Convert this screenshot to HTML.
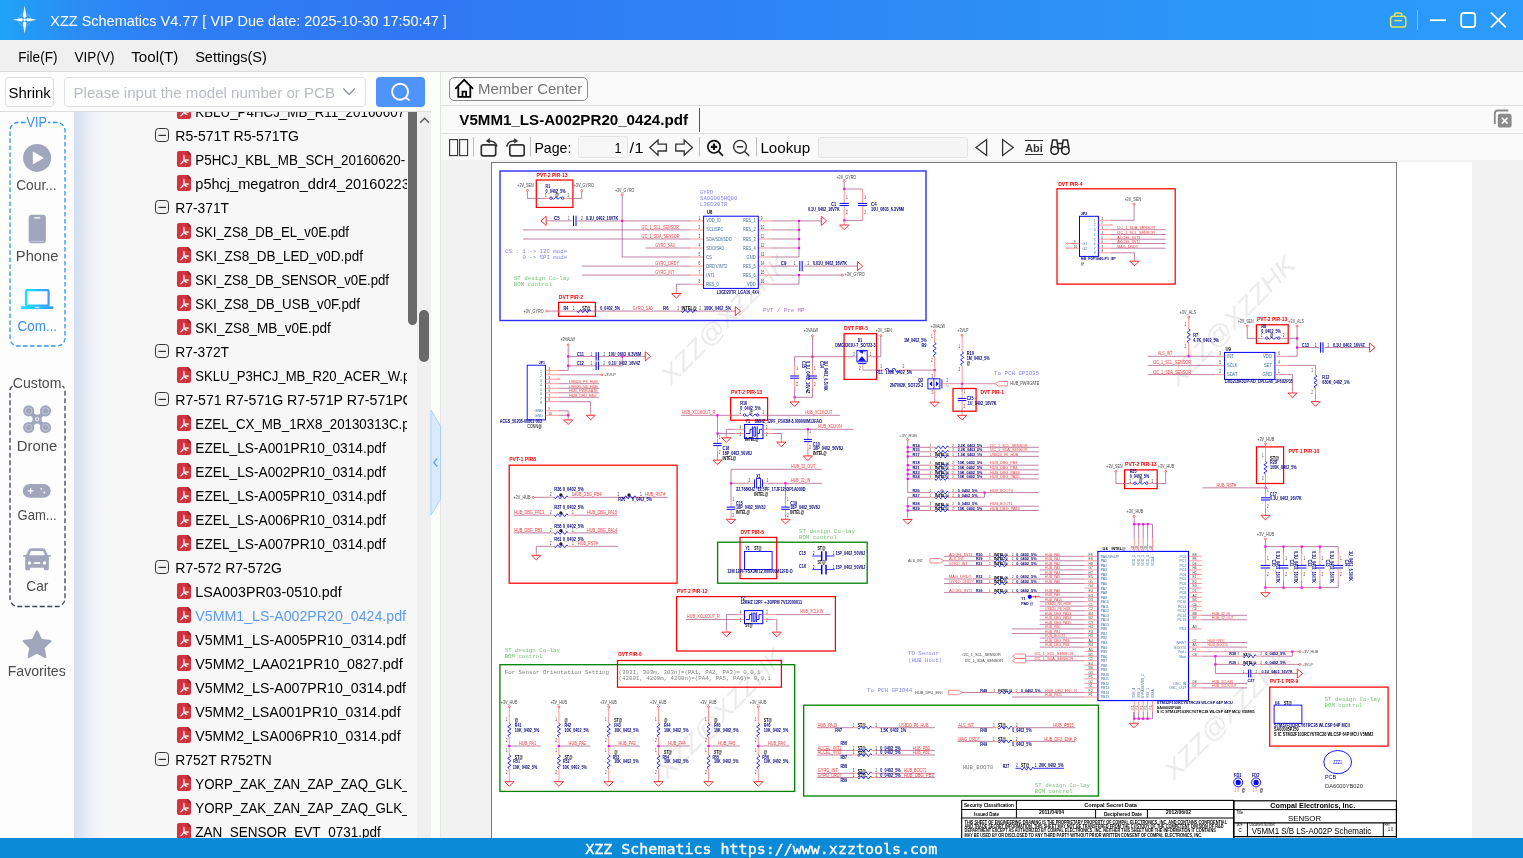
<!DOCTYPE html>
<html lang="en">
<head>
<meta charset="utf-8">
<title>XZZ Schematics V4.77</title>
<style>
html,body{margin:0;padding:0}
body{width:1523px;height:858px;overflow:hidden;position:relative;background:#fafafa;font-family:"Liberation Sans",sans-serif;font-size:14.5px;color:#000}
svg text{font-family:"Liberation Sans",sans-serif;white-space:pre}
svg text.m{font-family:"Liberation Mono",monospace}
.abs{position:absolute}
#titlebar{left:0;top:0;width:1523px;height:40px;background:linear-gradient(to right,#1ea3f6 0,#2b8cf5 5%,#2f7df4 12%,#3078f3 28%,#2e84f5 50%,#2c94f8 75%,#2b9bf9 100%)}
#menubar{left:0;top:40px;width:1523px;height:31px;background:#f0f0f0;border-bottom:1px solid #dadada}
#leftpane{left:0;top:72px;width:431px;height:766px;background:#fdfdfd}
#searchrow{left:0;top:72px;width:431px;height:39px;background:#fdfdfd;border-bottom:1px solid #dcdcdc}
#shrink{left:5px;top:77px;width:47px;height:28px;border:1px solid #dcdcdc;border-radius:4px;background:#fdfdfd}
#search{left:64px;top:77px;width:300px;height:28px;border:1px solid #dcdfe6;border-radius:4px;background:#fff}
#searchbtn{left:376px;top:77px;width:49px;height:30px;border-radius:4px;background:#4d94ff}
#sidebar{left:0;top:112px;width:74px;height:726px;background:#fdfdfd}
#tree{left:74px;top:112px;width:357px;height:726px;background:linear-gradient(to right,#d2ddf0 0,#e6ebf4 12px,#f4f5f7 24px,#f7f7f7 32px)}
#treeclip{left:74px;top:112px;width:333px;height:726px;overflow:hidden}
#sb1{left:408px;top:112px;width:9px;height:213px;background:#6a6a6a;border-radius:0 0 5px 5px}
#sbtrack{left:417px;top:112px;width:14px;height:726px;background:#f0f0f0}
#sb2{left:419px;top:310px;width:10px;height:52px;background:#686868;border-radius:5px}
#splitter{left:431px;top:72px;width:9px;height:766px;background:#fafdfa}
#rightpane{left:440px;top:72px;width:1083px;height:766px;background:#fafafa;border-left:1px solid #e4e4e4;box-sizing:border-box}
#member{left:449px;top:77px;width:137px;height:22px;border:1px solid #8c8c8c;border-radius:5px;background:#fcfcfc;box-sizing:content-box}
.hline{left:441px;width:1082px;height:1px;background:#dedede}
#viewer{left:441px;top:160px;width:1082px;height:678px;background:#f2f2f2;overflow:hidden}
#white{left:491px;top:162px;width:981px;height:676px;background:#fff}
#pageinput{left:578px;top:136px;width:48px;height:20px;border:1px solid #e3e3e3;border-radius:3px;background:#f7f7f7}
#lookup{left:818px;top:137px;width:148px;height:19px;border:1px solid #e3e3e3;border-radius:3px;background:#f5f5f5}
#statusbar{left:0;top:838px;width:1523px;height:20px;background:#0b8ad8;color:#fff}
#overlay{left:0;top:0;width:1523px;height:858px;pointer-events:none}
</style>
</head>
<body>
<div id="titlebar" class="abs"></div>
<div id="menubar" class="abs"></div>
<div id="leftpane" class="abs"></div>
<div id="searchrow" class="abs"></div>
<div id="shrink" class="abs"></div>
<div id="search" class="abs"></div>
<div id="searchbtn" class="abs"></div>
<div id="sidebar" class="abs"></div>
<div id="tree" class="abs"></div>
<div id="sbtrack" class="abs"></div>
<div id="sb1" class="abs"></div>
<div id="sb2" class="abs"></div>
<div id="splitter" class="abs"></div>
<div id="rightpane" class="abs"></div>
<div id="member" class="abs"></div>
<div class="abs hline" style="top:105px"></div>
<div class="abs hline" style="top:133px"></div>
<div id="pageinput" class="abs"></div>
<div id="lookup" class="abs"></div>
<div id="viewer" class="abs"></div>
<div id="white" class="abs"></div>
<!-- schematic page -->
<svg id="schem" class="abs" style="left:0;top:0;will-change:transform" width="1523" height="838" viewBox="0 0 1523 838">
<rect x="491.500" y="162.500" width="905" height="690" fill="#fff" stroke="#7a7a7a" stroke-width="1"/>
<g class="s">
<text transform="translate(671 386) rotate(-45.500)" font-size="25" font-style="italic" fill="#ebebeb" textLength="170" lengthAdjust="spacingAndGlyphs">XZZ@XZZHK</text>
<text transform="translate(1178 387.5) rotate(-45.500)" font-size="25" font-style="italic" fill="#ebebeb" textLength="170" lengthAdjust="spacingAndGlyphs">XZZ@XZZHK</text>
<text transform="translate(667 780) rotate(-45.500)" font-size="25" font-style="italic" fill="#ebebeb" textLength="170" lengthAdjust="spacingAndGlyphs">XZZ@XZZHK</text>
<text transform="translate(1174 781) rotate(-45.500)" font-size="25" font-style="italic" fill="#ebebeb" textLength="170" lengthAdjust="spacingAndGlyphs">XZZ@XZZHK</text>
<rect x="500" y="171" width="426" height="149.5" fill="none" stroke="#2e2eff" stroke-width="1.4"/>
<text x="536.6" y="176.9" font-size="4.8" fill="#ff0000" font-weight="700" textLength="31" lengthAdjust="spacingAndGlyphs">PVT-2 PIR-13</text>
<rect x="536.3" y="180" width="36.6" height="27.4" fill="none" stroke="#ff0000" stroke-width="1.25"/>
<circle cx="527.4" cy="190.4" r=".95" fill="#fff" stroke="#ff0000" stroke-width=".55"/>
<text x="517.3" y="187.3" font-size="4.56" fill="#444" textLength="16.5" lengthAdjust="spacingAndGlyphs">+3V_SEN</text>
<path d="M527.4 191.5 L527.4 198.4 L546 198.4" fill="none" stroke="#a34d7d" stroke-width="0.7"/>
<path d="M546 198.4 L550 198.4" fill="none" stroke="#ff6a6a" stroke-width="0.7"/>
<circle cx="551" cy="198.1" r="1.25" fill="none" stroke="#0000ff" stroke-width=".75"/>
<circle cx="562.6" cy="198.1" r="1.25" fill="none" stroke="#0000ff" stroke-width=".75"/>
<path d="M552.3 198.4 Q553.4 200 554.6 198.4 Q555.7 196.2 556.8 198.4 Q558 200 559.1 198.4 Q560.3 196.2 561.4 198.4" fill="none" stroke="#0000ff" stroke-width=".8"/>
<path d="M564 198.4 L568 198.4" fill="none" stroke="#ff6a6a" stroke-width="0.7"/>
<path d="M568 198.4 L581.7 198.4 L581.7 191.5" fill="none" stroke="#a34d7d" stroke-width="0.7"/>
<circle cx="581.7" cy="190.4" r=".95" fill="#fff" stroke="#ff0000" stroke-width=".55"/>
<text x="573.5" y="187.3" font-size="4.56" fill="#444" textLength="20.4" lengthAdjust="spacingAndGlyphs">+3V_GYRO</text>
<text x="545.6" y="187.9" font-size="4.5" fill="#000080" font-weight="700" textLength="4.5" lengthAdjust="spacingAndGlyphs">R1</text>
<text x="545.6" y="192.6" font-size="4.5" fill="#000080" font-weight="700" textLength="20" lengthAdjust="spacingAndGlyphs">0_0402_5%</text>
<text x="544.8" y="197.4" font-size="4.5" fill="#444" textLength="1.8" lengthAdjust="spacingAndGlyphs">1</text>
<text x="567.4" y="197.4" font-size="4.5" fill="#444" textLength="1.8" lengthAdjust="spacingAndGlyphs">2</text>
<text x="555.2" y="196.8" font-size="4.5" fill="#000" font-weight="700" textLength="3.4" lengthAdjust="spacingAndGlyphs">@</text>
<circle cx="622.2" cy="194.6" r=".95" fill="#fff" stroke="#ff0000" stroke-width=".55"/>
<text x="614.9" y="191.5" font-size="4.56" fill="#444" textLength="19.5" lengthAdjust="spacingAndGlyphs">+3V_GYRO</text>
<path d="M622.2 195.7 L622.2 257 L690.4 257" fill="none" stroke="#a34d7d" stroke-width="0.7"/>
<rect x="621.1" y="219.8" width="2.200" height="2.200" fill="#ff00ff"/>
<path d="M546.2 216.3 L546.2 225.5 L540.9 220.9 L546.2 216.3" fill="none" stroke="#ff0000" stroke-width="0.8"/>
<path d="M546.2 220.9 L572 220.9" fill="none" stroke="#a34d7d" stroke-width="0.7"/>
<path d="M573.5 215.7 L573.5 226.1" fill="none" stroke="#0000ff" stroke-width="1.0"/>
<path d="M576 215.7 L576 226.1" fill="none" stroke="#0000ff" stroke-width="1.0"/>
<path d="M577.4 220.9 L690.4 220.9" fill="none" stroke="#a34d7d" stroke-width="0.7"/>
<text x="554" y="220" font-size="4.5" fill="#000080" font-weight="700" textLength="5.6" lengthAdjust="spacingAndGlyphs">C5</text>
<text x="568" y="220" font-size="4.5" fill="#444" textLength="1.8" lengthAdjust="spacingAndGlyphs">1</text>
<text x="581" y="220" font-size="4.5" fill="#444" textLength="1.8" lengthAdjust="spacingAndGlyphs">2</text>
<text x="586.1" y="220" font-size="4.5" fill="#000080" font-weight="700" textLength="32" lengthAdjust="spacingAndGlyphs">0.1U_0402_16V7K</text>
<path d="M523 229.9 L690.4 229.9" fill="none" stroke="#a34d7d" stroke-width="0.7"/>
<text x="641.5" y="228.8" font-size="4.56" fill="#f23c3c" textLength="37.4" lengthAdjust="spacingAndGlyphs">I2C_1_SCL_SENSOR</text>
<path d="M523 239 L690.4 239" fill="none" stroke="#a34d7d" stroke-width="0.7"/>
<text x="641.5" y="237.9" font-size="4.56" fill="#f23c3c" textLength="38" lengthAdjust="spacingAndGlyphs">I2C_1_SDA_SENSOR</text>
<path d="M645.3 248 L690.4 248" fill="none" stroke="#a34d7d" stroke-width="0.7"/>
<text x="655.2" y="246.9" font-size="4.56" fill="#f23c3c" textLength="19.5" lengthAdjust="spacingAndGlyphs">GYRO_SA0</text>
<path d="M581.7 266.1 L690.4 266.1" fill="none" stroke="#a34d7d" stroke-width="0.7"/>
<text x="655.2" y="265" font-size="4.56" fill="#f23c3c" textLength="23.7" lengthAdjust="spacingAndGlyphs">GYRO_DRDY</text>
<path d="M581.7 275.1 L690.4 275.1" fill="none" stroke="#a34d7d" stroke-width="0.7"/>
<text x="655.2" y="274" font-size="4.56" fill="#f23c3c" textLength="19.1" lengthAdjust="spacingAndGlyphs">GYRO_INT</text>
<path d="M690.4 284.2 L676.4 284.2 L676.4 291" fill="none" stroke="#a34d7d" stroke-width="0.7"/>
<path d="M676.4 291 L676.4 293.5" fill="none" stroke="#ff6a6a" stroke-width="0.7"/>
<path d="M671.8 293.5 L681 293.5 L676.4 298.1 L671.8 293.5" fill="none" stroke="#ff0000" stroke-width="0.8"/>
<path d="M690.4 220.9 L703.6 220.9" fill="none" stroke="#ff6a6a" stroke-width="0.7"/>
<text x="698.5" y="219.8" font-size="4.5" fill="#444" textLength="1.8" lengthAdjust="spacingAndGlyphs">1</text>
<path d="M758.3 220.9 L771.4 220.9" fill="none" stroke="#ff6a6a" stroke-width="0.7"/>
<text x="760.8" y="219.8" font-size="4.5" fill="#444" textLength="1.8" lengthAdjust="spacingAndGlyphs">9</text>
<path d="M690.4 229.9 L703.6 229.9" fill="none" stroke="#ff6a6a" stroke-width="0.7"/>
<text x="698.5" y="228.8" font-size="4.5" fill="#444" textLength="1.8" lengthAdjust="spacingAndGlyphs">2</text>
<path d="M758.3 229.9 L771.4 229.9" fill="none" stroke="#ff6a6a" stroke-width="0.7"/>
<text x="760.8" y="228.8" font-size="4.5" fill="#444" textLength="3.6" lengthAdjust="spacingAndGlyphs">10</text>
<path d="M690.4 239 L703.6 239" fill="none" stroke="#ff6a6a" stroke-width="0.7"/>
<text x="698.5" y="237.9" font-size="4.5" fill="#444" textLength="1.8" lengthAdjust="spacingAndGlyphs">3</text>
<path d="M758.3 239 L771.4 239" fill="none" stroke="#ff6a6a" stroke-width="0.7"/>
<text x="760.8" y="237.9" font-size="4.5" fill="#444" textLength="3.3" lengthAdjust="spacingAndGlyphs">11</text>
<path d="M690.4 248 L703.6 248" fill="none" stroke="#ff6a6a" stroke-width="0.7"/>
<text x="698.5" y="246.9" font-size="4.5" fill="#444" textLength="1.8" lengthAdjust="spacingAndGlyphs">4</text>
<path d="M758.3 248 L771.4 248" fill="none" stroke="#ff6a6a" stroke-width="0.7"/>
<text x="760.8" y="246.9" font-size="4.5" fill="#444" textLength="3.6" lengthAdjust="spacingAndGlyphs">12</text>
<path d="M690.4 257 L703.6 257" fill="none" stroke="#ff6a6a" stroke-width="0.7"/>
<text x="698.5" y="255.9" font-size="4.5" fill="#444" textLength="1.8" lengthAdjust="spacingAndGlyphs">5</text>
<path d="M758.3 257 L771.4 257" fill="none" stroke="#ff6a6a" stroke-width="0.7"/>
<text x="760.8" y="255.9" font-size="4.5" fill="#444" textLength="3.6" lengthAdjust="spacingAndGlyphs">13</text>
<path d="M690.4 266.1 L703.6 266.1" fill="none" stroke="#ff6a6a" stroke-width="0.7"/>
<text x="698.5" y="265" font-size="4.5" fill="#444" textLength="1.8" lengthAdjust="spacingAndGlyphs">6</text>
<path d="M758.3 266.1 L771.4 266.1" fill="none" stroke="#ff6a6a" stroke-width="0.7"/>
<text x="760.8" y="265" font-size="4.5" fill="#444" textLength="3.6" lengthAdjust="spacingAndGlyphs">14</text>
<path d="M690.4 275.1 L703.6 275.1" fill="none" stroke="#ff6a6a" stroke-width="0.7"/>
<text x="698.5" y="274" font-size="4.5" fill="#444" textLength="1.8" lengthAdjust="spacingAndGlyphs">7</text>
<path d="M758.3 275.1 L771.4 275.1" fill="none" stroke="#ff6a6a" stroke-width="0.7"/>
<text x="760.8" y="274" font-size="4.5" fill="#444" textLength="3.6" lengthAdjust="spacingAndGlyphs">15</text>
<path d="M690.4 284.2 L703.6 284.2" fill="none" stroke="#ff6a6a" stroke-width="0.7"/>
<text x="698.5" y="283.1" font-size="4.5" fill="#444" textLength="1.8" lengthAdjust="spacingAndGlyphs">8</text>
<path d="M758.3 284.2 L771.4 284.2" fill="none" stroke="#ff6a6a" stroke-width="0.7"/>
<text x="760.8" y="283.1" font-size="4.5" fill="#444" textLength="3.6" lengthAdjust="spacingAndGlyphs">16</text>
<rect x="703.6" y="216.2" width="54.7" height="72.2" fill="none" stroke="#0000ff" stroke-width="1.0"/>
<text x="706.3" y="222.4" font-size="4.5" fill="#3a6ea5" textLength="14.5" lengthAdjust="spacingAndGlyphs">VDD_IO</text>
<text x="743.1" y="222.4" font-size="4.5" fill="#3a6ea5" textLength="12.5" lengthAdjust="spacingAndGlyphs">RES_1</text>
<text x="706.3" y="231.4" font-size="4.5" fill="#3a6ea5" textLength="17" lengthAdjust="spacingAndGlyphs">SCL/SPC</text>
<text x="743.1" y="231.4" font-size="4.5" fill="#3a6ea5" textLength="12.5" lengthAdjust="spacingAndGlyphs">RES_2</text>
<text x="706.3" y="240.5" font-size="4.5" fill="#3a6ea5" textLength="25.5" lengthAdjust="spacingAndGlyphs">SDA/SDI/SDO</text>
<text x="743.1" y="240.5" font-size="4.5" fill="#3a6ea5" textLength="12.5" lengthAdjust="spacingAndGlyphs">RES_3</text>
<text x="706.3" y="249.5" font-size="4.5" fill="#3a6ea5" textLength="17.5" lengthAdjust="spacingAndGlyphs">SDO/SA0</text>
<text x="743.1" y="249.5" font-size="4.5" fill="#3a6ea5" textLength="12.5" lengthAdjust="spacingAndGlyphs">RES_4</text>
<text x="706.3" y="258.5" font-size="4.5" fill="#3a6ea5" textLength="5.5" lengthAdjust="spacingAndGlyphs">CS</text>
<text x="746.6" y="258.5" font-size="4.5" fill="#3a6ea5" textLength="9" lengthAdjust="spacingAndGlyphs">GND</text>
<text x="706.3" y="267.6" font-size="4.5" fill="#3a6ea5" textLength="21" lengthAdjust="spacingAndGlyphs">DRDY/INT2</text>
<text x="743.1" y="267.6" font-size="4.5" fill="#3a6ea5" textLength="12.5" lengthAdjust="spacingAndGlyphs">RES_5</text>
<text x="706.3" y="276.6" font-size="4.5" fill="#3a6ea5" textLength="8.5" lengthAdjust="spacingAndGlyphs">INT1</text>
<text x="743.1" y="276.6" font-size="4.5" fill="#3a6ea5" textLength="12.5" lengthAdjust="spacingAndGlyphs">RES_6</text>
<text x="706.3" y="285.7" font-size="4.5" fill="#3a6ea5" textLength="12.5" lengthAdjust="spacingAndGlyphs">RES_0</text>
<text x="747.1" y="285.7" font-size="4.5" fill="#3a6ea5" textLength="8.5" lengthAdjust="spacingAndGlyphs">VDD</text>
<text x="700" y="193.6" font-size="5.6" fill="#8585ff" class="m" textLength="13" lengthAdjust="spacingAndGlyphs">GYRO</text>
<text x="700" y="199.9" font-size="5.6" fill="#8585ff" class="m" textLength="37.4" lengthAdjust="spacingAndGlyphs">SA00005HQ00</text>
<text x="700" y="206.2" font-size="5.6" fill="#8585ff" class="m" textLength="27.3" lengthAdjust="spacingAndGlyphs">L3GD20TR</text>
<text x="706.9" y="213.5" font-size="4.62" fill="#000" font-weight="700" textLength="5.4" lengthAdjust="spacingAndGlyphs">U8</text>
<text x="716.8" y="294.4" font-size="4.5" fill="#000080" font-weight="700" textLength="42" lengthAdjust="spacingAndGlyphs">L3GD20TR_LGA16_4X4</text>
<path d="M771.4 220.9 L821.3 220.9" fill="none" stroke="#a34d7d" stroke-width="0.7"/>
<path d="M821.3 216.3 L821.3 225.5 L826.6 220.9 L821.3 216.3" fill="none" stroke="#ff0000" stroke-width="0.8"/>
<path d="M771.4 229.9 L799 229.9" fill="none" stroke="#a34d7d" stroke-width="0.7"/>
<path d="M771.4 239 L799 239" fill="none" stroke="#a34d7d" stroke-width="0.7"/>
<path d="M771.4 248 L799 248" fill="none" stroke="#a34d7d" stroke-width="0.7"/>
<path d="M771.4 257 L799 257" fill="none" stroke="#a34d7d" stroke-width="0.7"/>
<path d="M799 220.9 L799 257" fill="none" stroke="#a34d7d" stroke-width="0.7"/>
<rect x="797.9" y="219.8" width="2.200" height="2.200" fill="#ff00ff"/>
<rect x="797.9" y="228.8" width="2.200" height="2.200" fill="#ff00ff"/>
<rect x="797.9" y="237.9" width="2.200" height="2.200" fill="#ff00ff"/>
<rect x="797.9" y="246.9" width="2.200" height="2.200" fill="#ff00ff"/>
<path d="M771.4 266.1 L798 266.1" fill="none" stroke="#a34d7d" stroke-width="0.7"/>
<path d="M799.8 260.9 L799.8 271.3" fill="none" stroke="#0000ff" stroke-width="1.0"/>
<path d="M802.2 260.9 L802.2 271.3" fill="none" stroke="#0000ff" stroke-width="1.0"/>
<path d="M804 266.1 L857.4 266.1" fill="none" stroke="#a34d7d" stroke-width="0.7"/>
<path d="M857.4 261.5 L857.4 270.7 L862.7 266.1 L857.4 261.5" fill="none" stroke="#ff0000" stroke-width="0.8"/>
<text x="780.8" y="265.2" font-size="4.5" fill="#000080" font-weight="700" textLength="5.6" lengthAdjust="spacingAndGlyphs">C9</text>
<text x="793.8" y="265.2" font-size="4.5" fill="#444" textLength="1.8" lengthAdjust="spacingAndGlyphs">1</text>
<text x="807.5" y="265.2" font-size="4.5" fill="#444" textLength="1.8" lengthAdjust="spacingAndGlyphs">2</text>
<text x="812.9" y="265.2" font-size="4.5" fill="#000080" font-weight="700" textLength="34" lengthAdjust="spacingAndGlyphs">0.01U_0402_16V7K</text>
<path d="M771.4 275.1 L841.2 275.1" fill="none" stroke="#a34d7d" stroke-width="0.7"/>
<circle cx="842.3" cy="275.1" r=".95" fill="#fff" stroke="#ff0000" stroke-width=".55"/>
<text x="844.5" y="276.4" font-size="4.56" fill="#444" textLength="20.2" lengthAdjust="spacingAndGlyphs">+3V_GYRO</text>
<rect x="797.9" y="274" width="2.200" height="2.200" fill="#ff00ff"/>
<path d="M771.4 284.2 L799 284.2 L799 275.1" fill="none" stroke="#a34d7d" stroke-width="0.7"/>
<circle cx="844.2" cy="181.4" r=".95" fill="#fff" stroke="#ff0000" stroke-width=".55"/>
<text x="836.4" y="178.5" font-size="4.56" fill="#444" textLength="19.9" lengthAdjust="spacingAndGlyphs">+3V_GYRO</text>
<path d="M844.2 182.5 L844.2 189 L862.6 189" fill="none" stroke="#a34d7d" stroke-width="0.7"/>
<rect x="843.1" y="187.9" width="2.200" height="2.200" fill="#ff00ff"/>
<path d="M844.2 189 L844.2 203" fill="none" stroke="#ff6a6a" stroke-width="0.7"/>
<path d="M862.6 189 L862.6 203" fill="none" stroke="#ff6a6a" stroke-width="0.7"/>
<path d="M839.6 203.4 L848.8 203.4" fill="none" stroke="#0000ff" stroke-width="1.0"/>
<path d="M839.6 205.6 L848.8 205.6" fill="none" stroke="#0000ff" stroke-width="1.0"/>
<path d="M858 203.4 L867.2 203.4" fill="none" stroke="#0000ff" stroke-width="1.0"/>
<path d="M858 205.6 L867.2 205.6" fill="none" stroke="#0000ff" stroke-width="1.0"/>
<path d="M844.2 206 L844.2 220.4" fill="none" stroke="#ff6a6a" stroke-width="0.7"/>
<path d="M862.6 206 L862.6 220.4" fill="none" stroke="#ff6a6a" stroke-width="0.7"/>
<path d="M844.2 220.4 L862.6 220.4" fill="none" stroke="#a34d7d" stroke-width="0.7"/>
<rect x="843.1" y="219.3" width="2.200" height="2.200" fill="#ff00ff"/>
<path d="M844.2 220.4 L844.2 225" fill="none" stroke="#ff6a6a" stroke-width="0.7"/>
<path d="M839.6 225 L848.8 225 L844.2 229.6 L839.6 225" fill="none" stroke="#ff0000" stroke-width="0.8"/>
<text x="846" y="199" font-size="4.5" fill="#444" textLength="1.8" lengthAdjust="spacingAndGlyphs">1</text>
<text x="846" y="214.2" font-size="4.5" fill="#444" textLength="1.8" lengthAdjust="spacingAndGlyphs">2</text>
<text x="864.2" y="199" font-size="4.5" fill="#444" textLength="1.8" lengthAdjust="spacingAndGlyphs">1</text>
<text x="864.2" y="214.2" font-size="4.5" fill="#444" textLength="1.8" lengthAdjust="spacingAndGlyphs">2</text>
<text x="831.2" y="206.2" font-size="4.5" fill="#000080" font-weight="700" textLength="5" lengthAdjust="spacingAndGlyphs">C1</text>
<text x="808" y="210.9" font-size="4.5" fill="#000080" font-weight="700" textLength="31.6" lengthAdjust="spacingAndGlyphs">0.1U_0402_16V7K</text>
<text x="871" y="206.2" font-size="4.5" fill="#000080" font-weight="700" textLength="5.6" lengthAdjust="spacingAndGlyphs">C4</text>
<text x="871" y="210.9" font-size="4.5" fill="#000080" font-weight="700" textLength="33" lengthAdjust="spacingAndGlyphs">10U_0603_6.3V6M</text>
<text x="505.1" y="252.8" font-size="5.7" fill="#8585ff" class="m" textLength="62" lengthAdjust="spacingAndGlyphs">CS : 1 -&gt; I2C mode</text>
<text x="522.5" y="258.8" font-size="5.7" fill="#8585ff" class="m" textLength="44.6" lengthAdjust="spacingAndGlyphs">0 -&gt; SPI mode</text>
<text x="513.7" y="279.6" font-size="5.8" fill="#74c474" class="m" textLength="56" lengthAdjust="spacingAndGlyphs">ST design Co-lay</text>
<text x="513.7" y="285.9" font-size="5.8" fill="#74c474" class="m" textLength="38.3" lengthAdjust="spacingAndGlyphs">BOM control</text>
<text x="558.8" y="298.9" font-size="4.8" fill="#ff0000" font-weight="700" textLength="24.2" lengthAdjust="spacingAndGlyphs">DVT PIR-2</text>
<rect x="558.6" y="302.3" width="36.8" height="14" fill="none" stroke="#ff0000" stroke-width="1.25"/>
<circle cx="546.7" cy="311.1" r=".95" fill="#fff" stroke="#ff0000" stroke-width=".55"/>
<text x="523.6" y="312.6" font-size="4.56" fill="#444" textLength="20" lengthAdjust="spacingAndGlyphs">+3V_GYRO</text>
<path d="M547.8 311.1 L735.3 311.1" fill="none" stroke="#a34d7d" stroke-width="0.7"/>
<path d="M735.3 306.5 L735.3 315.7 L740.6 311.1 L735.3 306.5" fill="none" stroke="#ff0000" stroke-width="0.8"/>
<text x="563.5" y="310.3" font-size="4.5" fill="#000080" font-weight="700" textLength="5" lengthAdjust="spacingAndGlyphs">R4</text>
<text x="572.7" y="310.3" font-size="4.5" fill="#444" textLength="1.8" lengthAdjust="spacingAndGlyphs">1</text>
<path d="M577.1 311.1 L578.2 312.7 L580.5 309.5 L582.8 312.7 L585 309.5 L587.3 312.7 L589.6 309.5 L590.7 311.1" fill="none" stroke="#0000ff" stroke-width="0.8"/>
<text x="582.3" y="310" font-size="4.56" fill="#000" font-weight="700" textLength="8" lengthAdjust="spacingAndGlyphs">ST@</text>
<text x="594.8" y="310.3" font-size="4.5" fill="#444" textLength="1.8" lengthAdjust="spacingAndGlyphs">2</text>
<text x="600.2" y="310.3" font-size="4.5" fill="#000080" font-weight="700" textLength="20" lengthAdjust="spacingAndGlyphs">0_0402_5%</text>
<text x="632.7" y="310.1" font-size="4.56" fill="#f23c3c" textLength="20" lengthAdjust="spacingAndGlyphs">GYRO_SA0</text>
<text x="663.1" y="310.3" font-size="4.5" fill="#000080" font-weight="700" textLength="5.4" lengthAdjust="spacingAndGlyphs">R6</text>
<text x="677.2" y="310.3" font-size="4.5" fill="#444" textLength="1.8" lengthAdjust="spacingAndGlyphs">1</text>
<path d="M681.4 311.1 L682.7 312.7 L685.2 309.5 L687.8 312.7 L690.3 309.5 L692.9 312.7 L695.4 309.5 L696.7 311.1" fill="none" stroke="#0000ff" stroke-width="0.8"/>
<text x="681.4" y="310" font-size="4.56" fill="#000" font-weight="700" textLength="15.3" lengthAdjust="spacingAndGlyphs">INTEL@</text>
<text x="699.2" y="310.3" font-size="4.5" fill="#444" textLength="1.8" lengthAdjust="spacingAndGlyphs">2</text>
<text x="704" y="310.3" font-size="4.5" fill="#000080" font-weight="700" textLength="27" lengthAdjust="spacingAndGlyphs">100K_0402_5%</text>
<text x="763" y="311.5" font-size="5.7" fill="#b26fc4" class="m" textLength="41.5" lengthAdjust="spacingAndGlyphs">PVT / Pre MP</text>
<text x="1058.2" y="185.5" font-size="4.8" fill="#ff0000" font-weight="700" textLength="24.3" lengthAdjust="spacingAndGlyphs">DVT PIR-4</text>
<rect x="1057" y="188.8" width="118.2" height="95.3" fill="none" stroke="#ff0000" stroke-width="1.25"/>
<circle cx="1134.1" cy="204.2" r=".95" fill="#fff" stroke="#ff0000" stroke-width=".55"/>
<text x="1124.4" y="201.4" font-size="4.56" fill="#444" textLength="16.8" lengthAdjust="spacingAndGlyphs">+3V_SEN</text>
<path d="M1134.1 205.3 L1134.1 220.3 L1110.9 220.3" fill="none" stroke="#a34d7d" stroke-width="0.7"/>
<rect x="1079.5" y="216.3" width="18.9" height="40.1" fill="none" stroke="#0000ff" stroke-width="1.0"/>
<text x="1080.7" y="215.4" font-size="4.15" fill="#000080" font-weight="700" textLength="6.5" lengthAdjust="spacingAndGlyphs">JP2</text>
<path d="M1098.4 220.3 L1110.9 220.3" fill="none" stroke="#ff6a6a" stroke-width="0.7"/>
<text x="1101.6" y="219.7" font-size="3.78" fill="#444" textLength="1.7" lengthAdjust="spacingAndGlyphs">1</text>
<text x="1093.8" y="221.7" font-size="4.03" fill="#3a6ea5" textLength="1.8" lengthAdjust="spacingAndGlyphs">1</text>
<path d="M1098.4 225 L1110.9 225" fill="none" stroke="#ff6a6a" stroke-width="0.7"/>
<text x="1101.6" y="224.4" font-size="3.78" fill="#444" textLength="1.7" lengthAdjust="spacingAndGlyphs">2</text>
<text x="1093.8" y="226.4" font-size="4.03" fill="#3a6ea5" textLength="1.8" lengthAdjust="spacingAndGlyphs">2</text>
<path d="M1098.4 229.7 L1110.9 229.7" fill="none" stroke="#ff6a6a" stroke-width="0.7"/>
<text x="1101.6" y="229.1" font-size="3.78" fill="#444" textLength="1.7" lengthAdjust="spacingAndGlyphs">3</text>
<text x="1093.8" y="231.1" font-size="4.03" fill="#3a6ea5" textLength="1.8" lengthAdjust="spacingAndGlyphs">3</text>
<path d="M1098.4 234.5 L1110.9 234.5" fill="none" stroke="#ff6a6a" stroke-width="0.7"/>
<text x="1101.6" y="233.9" font-size="3.78" fill="#444" textLength="1.7" lengthAdjust="spacingAndGlyphs">4</text>
<text x="1093.8" y="235.9" font-size="4.03" fill="#3a6ea5" textLength="1.8" lengthAdjust="spacingAndGlyphs">4</text>
<path d="M1098.4 239.2 L1110.9 239.2" fill="none" stroke="#ff6a6a" stroke-width="0.7"/>
<text x="1101.6" y="238.6" font-size="3.78" fill="#444" textLength="1.7" lengthAdjust="spacingAndGlyphs">5</text>
<text x="1093.8" y="240.6" font-size="4.03" fill="#3a6ea5" textLength="1.8" lengthAdjust="spacingAndGlyphs">5</text>
<path d="M1098.4 243.5 L1110.9 243.5" fill="none" stroke="#ff6a6a" stroke-width="0.7"/>
<text x="1101.6" y="242.9" font-size="3.78" fill="#444" textLength="1.7" lengthAdjust="spacingAndGlyphs">6</text>
<text x="1093.8" y="244.9" font-size="4.03" fill="#3a6ea5" textLength="1.8" lengthAdjust="spacingAndGlyphs">6</text>
<path d="M1098.4 248.2 L1110.9 248.2" fill="none" stroke="#ff6a6a" stroke-width="0.7"/>
<text x="1101.6" y="247.6" font-size="3.78" fill="#444" textLength="1.7" lengthAdjust="spacingAndGlyphs">7</text>
<text x="1093.8" y="249.6" font-size="4.03" fill="#3a6ea5" textLength="1.8" lengthAdjust="spacingAndGlyphs">7</text>
<path d="M1098.4 252.8 L1110.9 252.8" fill="none" stroke="#ff6a6a" stroke-width="0.7"/>
<text x="1101.6" y="252.2" font-size="3.78" fill="#444" textLength="1.7" lengthAdjust="spacingAndGlyphs">8</text>
<text x="1093.8" y="254.2" font-size="4.03" fill="#3a6ea5" textLength="1.8" lengthAdjust="spacingAndGlyphs">8</text>
<path d="M1110.5 223.9 L1112.7 226.1" fill="none" stroke="#ff6a6a" stroke-width="0.6"/>
<path d="M1110.5 226.1 L1112.7 223.9" fill="none" stroke="#ff6a6a" stroke-width="0.6"/>
<path d="M1110.9 229.7 L1165.7 229.7" fill="none" stroke="#a34d7d" stroke-width="0.7"/>
<text x="1117.3" y="229" font-size="4.27" fill="#f23c3c" textLength="37.8" lengthAdjust="spacingAndGlyphs">I2C_1_SDA_SENSOR</text>
<path d="M1110.9 234.5 L1165.7 234.5" fill="none" stroke="#a34d7d" stroke-width="0.7"/>
<text x="1117.3" y="233.8" font-size="4.27" fill="#f23c3c" textLength="37.8" lengthAdjust="spacingAndGlyphs">I2C_1_SCL_SENSOR</text>
<path d="M1110.9 239.2 L1165.7 239.2" fill="none" stroke="#a34d7d" stroke-width="0.7"/>
<text x="1117.3" y="238.5" font-size="4.27" fill="#f23c3c" textLength="23.2" lengthAdjust="spacingAndGlyphs">ACCEL_INT1</text>
<path d="M1110.9 243.5 L1165.7 243.5" fill="none" stroke="#a34d7d" stroke-width="0.7"/>
<text x="1117.3" y="242.8" font-size="4.27" fill="#f23c3c" textLength="23.2" lengthAdjust="spacingAndGlyphs">ACCEL_INT2</text>
<path d="M1110.9 248.2 L1165.7 248.2" fill="none" stroke="#a34d7d" stroke-width="0.7"/>
<text x="1117.3" y="247.5" font-size="4.27" fill="#f23c3c" textLength="20.8" lengthAdjust="spacingAndGlyphs">MAG_DRDY</text>
<path d="M1110.9 252.8 L1134.5 252.8 L1134.5 259" fill="none" stroke="#a34d7d" stroke-width="0.7"/>
<path d="M1134.5 259 L1134.5 261.2" fill="none" stroke="#ff6a6a" stroke-width="0.7"/>
<path d="M1129.9 261.2 L1139.1 261.2 L1134.5 265.8 L1129.9 261.2" fill="none" stroke="#ff0000" stroke-width="0.8"/>
<path d="M1067.2 243.5 L1079.5 243.5" fill="none" stroke="#ff6a6a" stroke-width="0.7"/>
<path d="M1065.6 242.4 L1067.8 244.6" fill="none" stroke="#ff6a6a" stroke-width="0.6"/>
<path d="M1065.6 244.6 L1067.8 242.4" fill="none" stroke="#ff6a6a" stroke-width="0.6"/>
<text x="1073.8" y="242.9" font-size="3.78" fill="#444" textLength="1.7" lengthAdjust="spacingAndGlyphs">9</text>
<text x="1082.5" y="245" font-size="4.39" fill="#3a6ea5" textLength="4.6" lengthAdjust="spacingAndGlyphs">G1</text>
<path d="M1067.2 248.2 L1079.5 248.2" fill="none" stroke="#ff6a6a" stroke-width="0.7"/>
<path d="M1065.6 247.1 L1067.8 249.3" fill="none" stroke="#ff6a6a" stroke-width="0.6"/>
<path d="M1065.6 249.3 L1067.8 247.1" fill="none" stroke="#ff6a6a" stroke-width="0.6"/>
<text x="1073.8" y="247.6" font-size="3.78" fill="#444" textLength="3.4" lengthAdjust="spacingAndGlyphs">10</text>
<text x="1082.5" y="249.7" font-size="4.39" fill="#3a6ea5" textLength="4.6" lengthAdjust="spacingAndGlyphs">G2</text>
<text x="1080.7" y="260.3" font-size="4.15" fill="#000080" font-weight="700" textLength="35" lengthAdjust="spacingAndGlyphs">HB_F0P1040-P1_8P</text>
<text x="1080.7" y="265.3" font-size="4.15" fill="#000" font-weight="700" textLength="3.4" lengthAdjust="spacingAndGlyphs">@</text>
<circle cx="1188.7" cy="317.1" r=".95" fill="#fff" stroke="#ff0000" stroke-width=".55"/>
<text x="1179.6" y="314" font-size="4.56" fill="#444" textLength="16.4" lengthAdjust="spacingAndGlyphs">+3V_ALS</text>
<path d="M1188.7 318.2 L1188.7 329" fill="none" stroke="#ff6a6a" stroke-width="0.7"/>
<path d="M1188.7 329 L1190.3 330.1 L1187.1 332.4 L1190.3 334.7 L1187.1 337 L1190.3 339.3 L1187.1 341.6 L1188.7 342.7" fill="none" stroke="#0000ff" stroke-width="0.8"/>
<path d="M1188.7 342.7 L1188.7 356.3" fill="none" stroke="#ff6a6a" stroke-width="0.7"/>
<text x="1193.3" y="337.2" font-size="4.5" fill="#000080" font-weight="700" textLength="5" lengthAdjust="spacingAndGlyphs">R7</text>
<text x="1193.3" y="342.2" font-size="4.5" fill="#000080" font-weight="700" textLength="25.6" lengthAdjust="spacingAndGlyphs">4.7K_0402_5%</text>
<text x="1184.6" y="326" font-size="4.5" fill="#444" textLength="1.7" lengthAdjust="spacingAndGlyphs">1</text>
<text x="1184.6" y="348.3" font-size="4.5" fill="#444" textLength="1.7" lengthAdjust="spacingAndGlyphs">2</text>
<path d="M1147.7 356.3 L1215 356.3" fill="none" stroke="#a34d7d" stroke-width="0.7"/>
<rect x="1187.6" y="355.2" width="2.200" height="2.200" fill="#ff00ff"/>
<text x="1157.9" y="355.1" font-size="4.56" fill="#f23c3c" textLength="14.5" lengthAdjust="spacingAndGlyphs">ALS_INT</text>
<path d="M1147.7 365.4 L1215 365.4" fill="none" stroke="#a34d7d" stroke-width="0.7"/>
<text x="1153.1" y="364.3" font-size="4.56" fill="#f23c3c" textLength="37.8" lengthAdjust="spacingAndGlyphs">I2C_1_SCL_SENSOR</text>
<path d="M1147.7 374.6 L1215 374.6" fill="none" stroke="#a34d7d" stroke-width="0.7"/>
<text x="1153.1" y="373.5" font-size="4.56" fill="#f23c3c" textLength="37.8" lengthAdjust="spacingAndGlyphs">I2C_1_SDA_SENSOR</text>
<rect x="1224.5" y="352.4" width="50.4" height="27" fill="none" stroke="#0000ff" stroke-width="1.0"/>
<text x="1225.4" y="351.2" font-size="4.62" fill="#000" font-weight="700" textLength="5.4" lengthAdjust="spacingAndGlyphs">U9</text>
<path d="M1215 356.3 L1224.5 356.3" fill="none" stroke="#ff6a6a" stroke-width="0.7"/>
<text x="1219.3" y="355.1" font-size="4.5" fill="#444" textLength="1.8" lengthAdjust="spacingAndGlyphs">3</text>
<text x="1227" y="358" font-size="5.1" fill="#3a6ea5" textLength="6.8" lengthAdjust="spacingAndGlyphs">INT</text>
<path d="M1274.9 356.3 L1287.7 356.3" fill="none" stroke="#ff6a6a" stroke-width="0.7"/>
<text x="1278" y="355.1" font-size="4.5" fill="#444" textLength="1.8" lengthAdjust="spacingAndGlyphs">6</text>
<text x="1263" y="358" font-size="5.1" fill="#3a6ea5" textLength="9" lengthAdjust="spacingAndGlyphs">VDD</text>
<path d="M1215 365.4 L1224.5 365.4" fill="none" stroke="#ff6a6a" stroke-width="0.7"/>
<text x="1219.3" y="364.2" font-size="4.5" fill="#444" textLength="1.8" lengthAdjust="spacingAndGlyphs">5</text>
<text x="1227" y="367.1" font-size="5.1" fill="#3a6ea5" textLength="10.4" lengthAdjust="spacingAndGlyphs">SCLK</text>
<path d="M1274.9 365.4 L1287.7 365.4" fill="none" stroke="#ff6a6a" stroke-width="0.7"/>
<text x="1278" y="364.2" font-size="4.5" fill="#444" textLength="1.8" lengthAdjust="spacingAndGlyphs">4</text>
<text x="1264" y="367.1" font-size="5.1" fill="#3a6ea5" textLength="8" lengthAdjust="spacingAndGlyphs">SET</text>
<path d="M1215 374.6 L1224.5 374.6" fill="none" stroke="#ff6a6a" stroke-width="0.7"/>
<text x="1219.3" y="373.4" font-size="4.5" fill="#444" textLength="1.8" lengthAdjust="spacingAndGlyphs">2</text>
<text x="1227" y="376.3" font-size="5.1" fill="#3a6ea5" textLength="10.4" lengthAdjust="spacingAndGlyphs">SDAT</text>
<path d="M1274.9 374.6 L1287.7 374.6" fill="none" stroke="#ff6a6a" stroke-width="0.7"/>
<text x="1278" y="373.4" font-size="4.5" fill="#444" textLength="1.8" lengthAdjust="spacingAndGlyphs">1</text>
<text x="1262.6" y="376.3" font-size="5.1" fill="#3a6ea5" textLength="9.4" lengthAdjust="spacingAndGlyphs">GND</text>
<text x="1224.8" y="382.6" font-size="4.5" fill="#000080" font-weight="700" textLength="68" lengthAdjust="spacingAndGlyphs">CM3218A3OP-AD_OPLGA6_1P8X2P35</text>
<path d="M1287.7 356.3 L1297.1 356.3 L1297.1 327.2" fill="none" stroke="#a34d7d" stroke-width="0.7"/>
<rect x="1296" y="337.3" width="2.200" height="2.200" fill="#ff00ff"/>
<rect x="1296" y="346.4" width="2.200" height="2.200" fill="#ff00ff"/>
<circle cx="1297.1" cy="326.1" r=".95" fill="#fff" stroke="#ff0000" stroke-width=".55"/>
<text x="1288.5" y="323.4" font-size="4.56" fill="#444" textLength="15.4" lengthAdjust="spacingAndGlyphs">+3V_ALS</text>
<path d="M1297.1 347.5 L1319 347.5" fill="none" stroke="#a34d7d" stroke-width="0.7"/>
<path d="M1320.6 342.3 L1320.6 352.7" fill="none" stroke="#0000ff" stroke-width="1.0"/>
<path d="M1323 342.3 L1323 352.7" fill="none" stroke="#0000ff" stroke-width="1.0"/>
<path d="M1324.6 347.5 L1369.6 347.5" fill="none" stroke="#a34d7d" stroke-width="0.7"/>
<path d="M1369.6 342.9 L1369.6 352.1 L1374.9 347.5 L1369.6 342.9" fill="none" stroke="#ff0000" stroke-width="0.8"/>
<text x="1301.8" y="346.6" font-size="4.5" fill="#000080" font-weight="700" textLength="7.2" lengthAdjust="spacingAndGlyphs">C13</text>
<text x="1314.8" y="346.6" font-size="4.5" fill="#444" textLength="1.8" lengthAdjust="spacingAndGlyphs">1</text>
<text x="1327.6" y="346.6" font-size="4.5" fill="#444" textLength="1.8" lengthAdjust="spacingAndGlyphs">2</text>
<text x="1332.9" y="346.6" font-size="4.5" fill="#000080" font-weight="700" textLength="32" lengthAdjust="spacingAndGlyphs">0.1U_0402_16V4Z</text>
<text x="1256.9" y="321.3" font-size="4.8" fill="#ff0000" font-weight="700" textLength="30.3" lengthAdjust="spacingAndGlyphs">PVT-2 PIR-13</text>
<rect x="1256.4" y="324.8" width="31.8" height="18.7" fill="none" stroke="#ff0000" stroke-width="1.25"/>
<circle cx="1247.2" cy="326.1" r=".95" fill="#fff" stroke="#ff0000" stroke-width=".55"/>
<text x="1237.8" y="323.4" font-size="4.56" fill="#444" textLength="15.7" lengthAdjust="spacingAndGlyphs">+3V_SEN</text>
<path d="M1247.2 327.2 L1247.2 338.4 L1261 338.4" fill="none" stroke="#a34d7d" stroke-width="0.7"/>
<path d="M1261 338.4 L1265.5 338.4" fill="none" stroke="#ff6a6a" stroke-width="0.7"/>
<circle cx="1266.8" cy="338.1" r="1.25" fill="none" stroke="#0000ff" stroke-width=".75"/>
<circle cx="1278.8" cy="338.1" r="1.25" fill="none" stroke="#0000ff" stroke-width=".75"/>
<path d="M1268 338.4 Q1269.2 340 1270.4 338.4 Q1271.6 336.2 1272.8 338.4 Q1273.9 340 1275.1 338.4 Q1276.3 336.2 1277.5 338.4" fill="none" stroke="#0000ff" stroke-width=".8"/>
<path d="M1280 338.4 L1284 338.4" fill="none" stroke="#ff6a6a" stroke-width="0.7"/>
<path d="M1284 338.4 L1297.1 338.4" fill="none" stroke="#a34d7d" stroke-width="0.7"/>
<text x="1261.2" y="328.2" font-size="4.5" fill="#000080" font-weight="700" textLength="5" lengthAdjust="spacingAndGlyphs">R8</text>
<text x="1261.2" y="332.9" font-size="4.5" fill="#000080" font-weight="700" textLength="19.6" lengthAdjust="spacingAndGlyphs">0_0402_5%</text>
<text x="1260.8" y="337.4" font-size="4.5" fill="#444" textLength="1.8" lengthAdjust="spacingAndGlyphs">1</text>
<text x="1282.8" y="337.4" font-size="4.5" fill="#444" textLength="1.8" lengthAdjust="spacingAndGlyphs">2</text>
<text x="1270" y="337" font-size="4.5" fill="#000" font-weight="700" textLength="3.4" lengthAdjust="spacingAndGlyphs">@</text>
<path d="M1287.7 365.4 L1315.5 365.4 L1315.5 369" fill="none" stroke="#a34d7d" stroke-width="0.7"/>
<path d="M1315.5 369 L1315.5 375.1" fill="none" stroke="#ff6a6a" stroke-width="0.7"/>
<path d="M1315.5 375.1 L1317.1 376.2 L1313.9 378.3 L1317.1 380.4 L1313.9 382.6 L1317.1 384.7 L1313.9 386.8 L1315.5 387.9" fill="none" stroke="#0000ff" stroke-width="0.8"/>
<path d="M1315.5 387.9 L1315.5 394" fill="none" stroke="#ff6a6a" stroke-width="0.7"/>
<path d="M1315.5 394 L1315.5 399.5" fill="none" stroke="#a34d7d" stroke-width="0.7"/>
<path d="M1315.5 399.5 L1315.5 401.6" fill="none" stroke="#ff6a6a" stroke-width="0.7"/>
<path d="M1310.9 401.6 L1320.1 401.6 L1315.5 406.2 L1310.9 401.6" fill="none" stroke="#ff0000" stroke-width="0.8"/>
<text x="1322.3" y="378.5" font-size="4.5" fill="#000080" font-weight="700" textLength="7.2" lengthAdjust="spacingAndGlyphs">R12</text>
<text x="1322.3" y="383.6" font-size="4.5" fill="#000080" font-weight="700" textLength="27.3" lengthAdjust="spacingAndGlyphs">680K_0402_1%</text>
<text x="1311.2" y="371.5" font-size="4.5" fill="#444" textLength="1.7" lengthAdjust="spacingAndGlyphs">1</text>
<text x="1311.2" y="393.5" font-size="4.5" fill="#444" textLength="1.7" lengthAdjust="spacingAndGlyphs">2</text>
<path d="M1287.7 374.6 L1292.4 374.6 L1292.4 391" fill="none" stroke="#a34d7d" stroke-width="0.7"/>
<path d="M1292.4 391 L1292.4 393" fill="none" stroke="#ff6a6a" stroke-width="0.7"/>
<path d="M1287.8 393 L1297 393 L1292.4 397.6 L1287.8 393" fill="none" stroke="#ff0000" stroke-width="0.8"/>
<circle cx="568.2" cy="344.8" r=".95" fill="#fff" stroke="#ff0000" stroke-width=".55"/>
<text x="560.3" y="341.3" font-size="4.56" fill="#444" textLength="14.7" lengthAdjust="spacingAndGlyphs">+3VALW</text>
<path d="M568.2 345.9 L568.2 370.4 L559.1 370.4" fill="none" stroke="#a34d7d" stroke-width="0.7"/>
<rect x="567.1" y="355.3" width="2.200" height="2.200" fill="#ff00ff"/>
<rect x="567.1" y="364.7" width="2.200" height="2.200" fill="#ff00ff"/>
<path d="M568.2 356.4 L596 356.4" fill="none" stroke="#a34d7d" stroke-width="0.7"/>
<path d="M596.1 352.2 L596.1 360.6" fill="none" stroke="#0000ff" stroke-width="1.0"/>
<path d="M598.4 352.2 L598.4 360.6" fill="none" stroke="#0000ff" stroke-width="1.0"/>
<text x="577.1" y="355.5" font-size="4.5" fill="#000080" font-weight="700" textLength="6.8" lengthAdjust="spacingAndGlyphs">C11</text>
<text x="590.5" y="355.5" font-size="4.5" fill="#444" textLength="1.8" lengthAdjust="spacingAndGlyphs">1</text>
<text x="603.3" y="355.5" font-size="4.5" fill="#444" textLength="1.8" lengthAdjust="spacingAndGlyphs">2</text>
<text x="608.6" y="355.5" font-size="4.5" fill="#000080" font-weight="700" textLength="32.5" lengthAdjust="spacingAndGlyphs">10U_0603_6.3V6M</text>
<path d="M568.2 365.8 L596 365.8" fill="none" stroke="#a34d7d" stroke-width="0.7"/>
<path d="M596.1 361.6 L596.1 370" fill="none" stroke="#0000ff" stroke-width="1.0"/>
<path d="M598.4 361.6 L598.4 370" fill="none" stroke="#0000ff" stroke-width="1.0"/>
<text x="577.1" y="364.9" font-size="4.5" fill="#000080" font-weight="700" textLength="6.8" lengthAdjust="spacingAndGlyphs">C12</text>
<text x="590.5" y="364.9" font-size="4.5" fill="#444" textLength="1.8" lengthAdjust="spacingAndGlyphs">1</text>
<text x="603.3" y="364.9" font-size="4.5" fill="#444" textLength="1.8" lengthAdjust="spacingAndGlyphs">2</text>
<text x="608.6" y="364.9" font-size="4.5" fill="#000080" font-weight="700" textLength="31.6" lengthAdjust="spacingAndGlyphs">0.1U_0402_16V4Z</text>
<path d="M598.6 356.4 L645.3 356.4" fill="none" stroke="#a34d7d" stroke-width="0.7"/>
<path d="M645.3 351.8 L645.3 361 L650.6 356.4 L645.3 351.8" fill="none" stroke="#ff0000" stroke-width="0.8"/>
<path d="M598.6 365.8 L622.3 365.8 L622.3 356.4" fill="none" stroke="#a34d7d" stroke-width="0.7"/>
<rect x="621.2" y="355.3" width="2.200" height="2.200" fill="#ff00ff"/>
<rect x="527.2" y="365.2" width="18.3" height="54.7" fill="none" stroke="#0000ff" stroke-width="0.9"/>
<text x="538.7" y="364.3" font-size="4.15" fill="#000080" font-weight="700" textLength="6.3" lengthAdjust="spacingAndGlyphs">JP1</text>
<path d="M545.5 370.4 L559.1 370.4" fill="none" stroke="#ff6a6a" stroke-width="0.7"/>
<text x="548.5" y="369.8" font-size="3.78" fill="#444" textLength="1.7" lengthAdjust="spacingAndGlyphs">1</text>
<text x="540" y="373" font-size="4.39" fill="#3a6ea5" textLength="2" lengthAdjust="spacingAndGlyphs">1</text>
<path d="M545.5 374.8 L559.1 374.8" fill="none" stroke="#ff6a6a" stroke-width="0.7"/>
<text x="548.5" y="374.2" font-size="3.78" fill="#444" textLength="1.7" lengthAdjust="spacingAndGlyphs">2</text>
<text x="540" y="377.4" font-size="4.39" fill="#3a6ea5" textLength="2" lengthAdjust="spacingAndGlyphs">2</text>
<path d="M545.5 379.2 L559.1 379.2" fill="none" stroke="#ff6a6a" stroke-width="0.7"/>
<text x="548.5" y="378.6" font-size="3.78" fill="#444" textLength="1.7" lengthAdjust="spacingAndGlyphs">3</text>
<text x="540" y="381.8" font-size="4.39" fill="#3a6ea5" textLength="2" lengthAdjust="spacingAndGlyphs">3</text>
<path d="M545.5 383.7 L559.1 383.7" fill="none" stroke="#ff6a6a" stroke-width="0.7"/>
<text x="548.5" y="383.1" font-size="3.78" fill="#444" textLength="1.7" lengthAdjust="spacingAndGlyphs">4</text>
<text x="540" y="386.3" font-size="4.39" fill="#3a6ea5" textLength="2" lengthAdjust="spacingAndGlyphs">4</text>
<path d="M545.5 388.3 L559.1 388.3" fill="none" stroke="#ff6a6a" stroke-width="0.7"/>
<text x="548.5" y="387.7" font-size="3.78" fill="#444" textLength="1.7" lengthAdjust="spacingAndGlyphs">5</text>
<text x="540" y="390.9" font-size="4.39" fill="#3a6ea5" textLength="2" lengthAdjust="spacingAndGlyphs">5</text>
<path d="M545.5 392.8 L559.1 392.8" fill="none" stroke="#ff6a6a" stroke-width="0.7"/>
<text x="548.5" y="392.2" font-size="3.78" fill="#444" textLength="1.7" lengthAdjust="spacingAndGlyphs">6</text>
<text x="540" y="395.4" font-size="4.39" fill="#3a6ea5" textLength="2" lengthAdjust="spacingAndGlyphs">6</text>
<path d="M545.5 397.3 L559.1 397.3" fill="none" stroke="#ff6a6a" stroke-width="0.7"/>
<text x="548.5" y="396.7" font-size="3.78" fill="#444" textLength="1.7" lengthAdjust="spacingAndGlyphs">7</text>
<text x="540" y="399.9" font-size="4.39" fill="#3a6ea5" textLength="2" lengthAdjust="spacingAndGlyphs">7</text>
<path d="M545.5 401.7 L559.1 401.7" fill="none" stroke="#ff6a6a" stroke-width="0.7"/>
<text x="548.5" y="401.1" font-size="3.78" fill="#444" textLength="1.7" lengthAdjust="spacingAndGlyphs">8</text>
<text x="540" y="404.3" font-size="4.39" fill="#3a6ea5" textLength="2" lengthAdjust="spacingAndGlyphs">8</text>
<path d="M545.5 410.8 L559.1 410.8" fill="none" stroke="#ff6a6a" stroke-width="0.7"/>
<text x="548.5" y="410.2" font-size="3.78" fill="#444" textLength="1.7" lengthAdjust="spacingAndGlyphs">9</text>
<text x="534.4" y="412.4" font-size="4.4" fill="#3a6ea5" textLength="8.6" lengthAdjust="spacingAndGlyphs">GND</text>
<path d="M559.1 410.8 L568.2 410.8" fill="none" stroke="#a34d7d" stroke-width="0.7"/>
<path d="M545.5 415.3 L559.1 415.3" fill="none" stroke="#ff6a6a" stroke-width="0.7"/>
<text x="548.5" y="414.7" font-size="3.78" fill="#444" textLength="3.4" lengthAdjust="spacingAndGlyphs">10</text>
<text x="534.4" y="416.9" font-size="4.4" fill="#3a6ea5" textLength="8.6" lengthAdjust="spacingAndGlyphs">GND</text>
<path d="M559.1 415.3 L568.2 415.3" fill="none" stroke="#a34d7d" stroke-width="0.7"/>
<path d="M568.2 410.8 L568.2 417.8" fill="none" stroke="#a34d7d" stroke-width="0.7"/>
<rect x="567.1" y="414.2" width="2.200" height="2.200" fill="#ff00ff"/>
<path d="M568.2 417.8 L568.2 419.9" fill="none" stroke="#ff6a6a" stroke-width="0.7"/>
<path d="M563.6 419.9 L572.8 419.9 L568.2 424.5 L563.6 419.9" fill="none" stroke="#ff0000" stroke-width="0.8"/>
<path d="M559.1 374.8 L600.7 374.8" fill="none" stroke="#a34d7d" stroke-width="0.7"/>
<circle cx="601.8" cy="374.8" r=".95" fill="#fff" stroke="#ff0000" stroke-width=".55"/>
<text x="604" y="376.1" font-size="4.27" fill="#444" textLength="12" lengthAdjust="spacingAndGlyphs">+3VLP</text>
<path d="M558 378.1 L560.2 380.3" fill="none" stroke="#ff6a6a" stroke-width="0.6"/>
<path d="M558 380.3 L560.2 378.1" fill="none" stroke="#ff6a6a" stroke-width="0.6"/>
<path d="M559.1 383.7 L599.3 383.7" fill="none" stroke="#a34d7d" stroke-width="0.7"/>
<text x="568.9" y="383" font-size="4.39" fill="#f23c3c" textLength="29" lengthAdjust="spacingAndGlyphs">USB20_P6_HUB</text>
<path d="M559.1 388.3 L599.3 388.3" fill="none" stroke="#a34d7d" stroke-width="0.7"/>
<text x="568.9" y="387.6" font-size="4.39" fill="#f23c3c" textLength="29" lengthAdjust="spacingAndGlyphs">USB20_N6_HUB</text>
<path d="M559.1 392.8 L599.3 392.8" fill="none" stroke="#a34d7d" stroke-width="0.7"/>
<text x="568.9" y="392.1" font-size="4.39" fill="#f23c3c" textLength="29" lengthAdjust="spacingAndGlyphs">HUB_PWRGATE</text>
<path d="M559.1 397.3 L599.3 397.3" fill="none" stroke="#a34d7d" stroke-width="0.7"/>
<text x="568.9" y="396.6" font-size="4.39" fill="#f23c3c" textLength="27.8" lengthAdjust="spacingAndGlyphs">HUB_DFU_EN#</text>
<path d="M559.1 401.7 L590.7 401.7 L590.7 413" fill="none" stroke="#a34d7d" stroke-width="0.7"/>
<path d="M590.7 413 L590.7 415.3" fill="none" stroke="#ff6a6a" stroke-width="0.7"/>
<path d="M586.1 415.3 L595.3 415.3 L590.7 419.9 L586.1 415.3" fill="none" stroke="#ff0000" stroke-width="0.8"/>
<text x="499.7" y="423.4" font-size="4.5" fill="#000080" font-weight="700" textLength="42.3" lengthAdjust="spacingAndGlyphs">ACES_50208-00801-003</text>
<text x="527.2" y="428" font-size="4.62" fill="#000" textLength="14.8" lengthAdjust="spacingAndGlyphs">CONN@</text>
<circle cx="812.5" cy="335.7" r=".95" fill="#fff" stroke="#ff0000" stroke-width=".55"/>
<text x="803.5" y="332" font-size="4.56" fill="#444" textLength="14.7" lengthAdjust="spacingAndGlyphs">+3VALW</text>
<path d="M812.5 336.8 L812.5 356.7" fill="none" stroke="#a34d7d" stroke-width="0.7"/>
<rect x="811.4" y="355.6" width="2.200" height="2.200" fill="#ff00ff"/>
<path d="M794.6 356.7 L853.5 356.7" fill="none" stroke="#a34d7d" stroke-width="0.7"/>
<path d="M794.6 356.7 L794.6 366" fill="none" stroke="#a34d7d" stroke-width="0.7"/>
<path d="M794.6 366 L794.6 376" fill="none" stroke="#ff6a6a" stroke-width="0.7"/>
<path d="M790.2 376 L799 376" fill="none" stroke="#0000ff" stroke-width="1.0"/>
<path d="M790.2 378.2 L799 378.2" fill="none" stroke="#0000ff" stroke-width="1.0"/>
<path d="M794.6 378.2 L794.6 388" fill="none" stroke="#ff6a6a" stroke-width="0.7"/>
<path d="M794.6 388 L794.6 397.3" fill="none" stroke="#a34d7d" stroke-width="0.7"/>
<text x="796.2" y="370" font-size="4.5" fill="#444" textLength="1.8" lengthAdjust="spacingAndGlyphs">1</text>
<text x="796.2" y="385.8" font-size="4.5" fill="#444" textLength="1.8" lengthAdjust="spacingAndGlyphs">2</text>
<path d="M812.5 356.7 L812.5 366" fill="none" stroke="#a34d7d" stroke-width="0.7"/>
<path d="M812.5 366 L812.5 376" fill="none" stroke="#ff6a6a" stroke-width="0.7"/>
<path d="M808.1 376 L816.9 376" fill="none" stroke="#0000ff" stroke-width="1.0"/>
<path d="M808.1 378.2 L816.9 378.2" fill="none" stroke="#0000ff" stroke-width="1.0"/>
<path d="M812.5 378.2 L812.5 388" fill="none" stroke="#ff6a6a" stroke-width="0.7"/>
<path d="M812.5 388 L812.5 397.3" fill="none" stroke="#a34d7d" stroke-width="0.7"/>
<text x="814.1" y="370" font-size="4.5" fill="#444" textLength="1.8" lengthAdjust="spacingAndGlyphs">1</text>
<text x="814.1" y="385.8" font-size="4.5" fill="#444" textLength="1.8" lengthAdjust="spacingAndGlyphs">2</text>
<path d="M794.6 397.3 L812.5 397.3" fill="none" stroke="#a34d7d" stroke-width="0.7"/>
<rect x="793.5" y="396.2" width="2.200" height="2.200" fill="#ff00ff"/>
<path d="M794.6 397.3 L794.6 401.9" fill="none" stroke="#ff6a6a" stroke-width="0.7"/>
<path d="M790 401.9 L799.2 401.9 L794.6 406.5 L790 401.9" fill="none" stroke="#ff0000" stroke-width="0.8"/>
<text x="802.2" y="361" font-size="4.5" fill="#000080" font-weight="700" transform="rotate(90 802.2 361)" textLength="7" lengthAdjust="spacingAndGlyphs">C15</text>
<text x="806.4" y="361" font-size="4.5" fill="#000080" font-weight="700" transform="rotate(90 806.4 361)" textLength="32.4" lengthAdjust="spacingAndGlyphs">0.1U_0402_16V4Z</text>
<text x="820.3" y="361" font-size="4.5" fill="#000080" font-weight="700" transform="rotate(90 820.3 361)" textLength="7" lengthAdjust="spacingAndGlyphs">C14</text>
<text x="824.3" y="361" font-size="4.5" fill="#000080" font-weight="700" transform="rotate(90 824.3 361)" textLength="29.8" lengthAdjust="spacingAndGlyphs">1U_0402_6.3V6K</text>
<text x="844.1" y="329.9" font-size="4.8" fill="#ff0000" font-weight="700" textLength="23.9" lengthAdjust="spacingAndGlyphs">DVT PIR-5</text>
<rect x="844.1" y="333.7" width="32.5" height="45.7" fill="none" stroke="#ff0000" stroke-width="1.25"/>
<circle cx="880.8" cy="335.7" r=".95" fill="#fff" stroke="#ff0000" stroke-width=".55"/>
<text x="875.7" y="332" font-size="4.56" fill="#444" textLength="16.2" lengthAdjust="spacingAndGlyphs">+3V_SEN</text>
<path d="M880.8 336.8 L880.8 356.7 L872.3 356.7" fill="none" stroke="#a34d7d" stroke-width="0.7"/>
<path d="M853.5 356.7 L857 356.7" fill="none" stroke="#ff6a6a" stroke-width="0.7"/>
<path d="M867.2 356.7 L872.3 356.7" fill="none" stroke="#ff6a6a" stroke-width="0.7"/>
<text x="857.8" y="342.2" font-size="4.5" fill="#000080" font-weight="700" textLength="4.4" lengthAdjust="spacingAndGlyphs">D1</text>
<text x="835.3" y="346.9" font-size="4.5" fill="#000080" font-weight="700" textLength="40.4" lengthAdjust="spacingAndGlyphs">DMG3301U-7_SOT23-3</text>
<rect x="856.9" y="350.4" width="10.3" height="11.4" fill="none" stroke="#0000ff" stroke-width="0.9"/>
<path d="M859.500 351.700l3 -1.600v3.200zM862.500 351.700h3.500M858.500 360.800l3.400-4.200l3.400 4.200z" fill="#0000ff" stroke="#0000ff" stroke-width=".6"/>
<path d="M858.2 363.6 L866.4 363.6" fill="none" stroke="#0000ff" stroke-width="1.0"/>
<path d="M863 363.6 L863 370.1" fill="none" stroke="#ff6a6a" stroke-width="0.7"/>
<text x="853" y="355.7" font-size="4.5" fill="#444" textLength="1.7" lengthAdjust="spacingAndGlyphs">3</text>
<text x="869.8" y="355.7" font-size="4.5" fill="#444" textLength="1.7" lengthAdjust="spacingAndGlyphs">1</text>
<text x="859" y="369.6" font-size="4.5" fill="#444" textLength="1.7" lengthAdjust="spacingAndGlyphs">2</text>
<path d="M863 370.1 L881 370.1" fill="none" stroke="#a34d7d" stroke-width="0.7"/>
<path d="M881 370.1 L885.3 370.1" fill="none" stroke="#ff6a6a" stroke-width="0.7"/>
<path d="M885.300 370.100 a1.700 1.700 0 1 1 3.400 0 a1.700 1.700 0 1 0 3.400 0 a1.700 1.700 0 1 1 3.400 0 a1.900 1.900 0 1 0 3.800 0" fill="none" stroke="#0000ff" stroke-width=".8"/>
<path d="M899.3 370.1 L903.5 370.1" fill="none" stroke="#ff6a6a" stroke-width="0.7"/>
<path d="M903.5 370.1 L934.6 370.1" fill="none" stroke="#a34d7d" stroke-width="0.7"/>
<rect x="933.5" y="369" width="2.200" height="2.200" fill="#ff00ff"/>
<text x="876.2" y="373.6" font-size="4.5" fill="#000080" font-weight="700" textLength="6.6" lengthAdjust="spacingAndGlyphs">R11</text>
<text x="885.6" y="373.6" font-size="4.5" fill="#000080" font-weight="700" textLength="26.5" lengthAdjust="spacingAndGlyphs">100K_0402_5%</text>
<text x="880.3" y="368.4" font-size="4.5" fill="#444" textLength="1.8" lengthAdjust="spacingAndGlyphs">1</text>
<text x="902.5" y="368.4" font-size="4.5" fill="#444" textLength="1.8" lengthAdjust="spacingAndGlyphs">2</text>
<circle cx="934.6" cy="330.8" r=".95" fill="#fff" stroke="#ff0000" stroke-width=".55"/>
<text x="930.5" y="327.6" font-size="4.56" fill="#444" textLength="14.5" lengthAdjust="spacingAndGlyphs">+3VALW</text>
<path d="M934.6 331.9 L934.6 342.4" fill="none" stroke="#ff6a6a" stroke-width="0.7"/>
<path d="M934.6 342.4 L936.2 343.6 L933 346 L936.2 348.4 L933 350.9 L936.2 353.3 L933 355.7 L934.6 356.9" fill="none" stroke="#0000ff" stroke-width="0.8"/>
<path d="M934.6 356.9 L934.6 378.8" fill="none" stroke="#ff6a6a" stroke-width="0.7"/>
<text x="903.9" y="342.1" font-size="4.5" fill="#000080" font-weight="700" textLength="22.7" lengthAdjust="spacingAndGlyphs">1M_0402_5%</text>
<text x="921.5" y="346.8" font-size="4.5" fill="#000080" font-weight="700" textLength="5.1" lengthAdjust="spacingAndGlyphs">R9</text>
<text x="931" y="337.8" font-size="4.5" fill="#444" textLength="1.7" lengthAdjust="spacingAndGlyphs">1</text>
<text x="931" y="362" font-size="4.5" fill="#444" textLength="1.7" lengthAdjust="spacingAndGlyphs">2</text>
<rect x="927.9" y="378.8" width="12" height="10.1" fill="none" stroke="#0000ff" stroke-width="0.9"/>
<path d="M929.300 383.800l2.800-2.600v5.200zM938.700 383.800l-2.800-2.600v5.200z" fill="#0000ff"/>
<path d="M933.9 378.8 L933.9 388.9" fill="none" stroke="#0000ff" stroke-width="0.8"/>
<path d="M941.9 379.4 L941.9 388.4" fill="none" stroke="#0000ff" stroke-width="0.9"/>
<path d="M942 383.7 L945.6 383.7" fill="none" stroke="#ff6a6a" stroke-width="0.7"/>
<text x="946.6" y="381.6" font-size="4.5" fill="#444" textLength="1.7" lengthAdjust="spacingAndGlyphs">2</text>
<text x="946.4" y="387.4" font-size="4.5" fill="#8080ff" textLength="2.4" lengthAdjust="spacingAndGlyphs">G</text>
<text x="931.5" y="377.5" font-size="4.5" fill="#444" textLength="1.7" lengthAdjust="spacingAndGlyphs">3</text>
<text x="931.5" y="393.6" font-size="4.5" fill="#444" textLength="2" lengthAdjust="spacingAndGlyphs">S</text>
<path d="M934.6 388.9 L934.6 398.8" fill="none" stroke="#ff6a6a" stroke-width="0.7"/>
<path d="M934.6 398.8 L934.6 400.2" fill="none" stroke="#a34d7d" stroke-width="0.7"/>
<path d="M934.6 400.2 L934.6 402.2" fill="none" stroke="#ff6a6a" stroke-width="0.7"/>
<path d="M930 402.2 L939.2 402.2 L934.6 406.8 L930 402.2" fill="none" stroke="#ff0000" stroke-width="0.8"/>
<text x="918" y="381.8" font-size="4.5" fill="#000080" font-weight="700" textLength="5.2" lengthAdjust="spacingAndGlyphs">Q2</text>
<text x="889.9" y="387.3" font-size="4.5" fill="#000080" font-weight="700" textLength="33.3" lengthAdjust="spacingAndGlyphs">2N7002K_SOT23-3</text>
<path d="M945.6 383.7 L994.9 383.7" fill="none" stroke="#e3a3bd" stroke-width="1.3"/>
<rect x="961" y="382.6" width="2.200" height="2.200" fill="#ff00ff"/>
<circle cx="962.1" cy="335.3" r=".95" fill="#fff" stroke="#ff0000" stroke-width=".55"/>
<text x="957.3" y="331.9" font-size="4.56" fill="#444" textLength="11.1" lengthAdjust="spacingAndGlyphs">+3VLP</text>
<path d="M962.1 336.4 L962.1 351.8" fill="none" stroke="#ff6a6a" stroke-width="0.7"/>
<path d="M962.1 351.8 L963.7 352.9 L960.5 355.2 L963.7 357.5 L960.5 359.8 L963.7 362.1 L960.5 364.4 L962.1 365.5" fill="none" stroke="#0000ff" stroke-width="0.8"/>
<path d="M962.1 365.5 L962.1 383.7" fill="none" stroke="#ff6a6a" stroke-width="0.7"/>
<text x="958.4" y="348.3" font-size="4.5" fill="#444" textLength="1.7" lengthAdjust="spacingAndGlyphs">1</text>
<text x="958.4" y="371.2" font-size="4.5" fill="#444" textLength="1.7" lengthAdjust="spacingAndGlyphs">2</text>
<text x="966.7" y="355.2" font-size="4.5" fill="#000080" font-weight="700" textLength="7.2" lengthAdjust="spacingAndGlyphs">R10</text>
<text x="966.7" y="360.4" font-size="4.5" fill="#000080" font-weight="700" textLength="23" lengthAdjust="spacingAndGlyphs">1M_0402_5%</text>
<text x="966.7" y="365.2" font-size="4.5" fill="#000" font-weight="700" textLength="3.4" lengthAdjust="spacingAndGlyphs">@</text>
<path d="M994.9 383.7 L998.5 381.5 L1007.7 381.5 L1007.7 385.9 L998.5 385.9 L994.9 383.7" fill="none" stroke="#ff6a6a" stroke-width="0.8"/>
<text x="1010.2" y="384.9" font-size="4.56" fill="#444" textLength="29.1" lengthAdjust="spacingAndGlyphs">HUB_PWRGATE</text>
<text x="994" y="374.5" font-size="5.8" fill="#8585ff" class="m" textLength="45.3" lengthAdjust="spacingAndGlyphs">To PCH GPIO35</text>
<rect x="953" y="388.5" width="23.1" height="22.7" fill="none" stroke="#ff0000" stroke-width="1.25"/>
<text x="980.4" y="393.7" font-size="4.8" fill="#ff0000" font-weight="700" textLength="23.5" lengthAdjust="spacingAndGlyphs">DVT PIR-1</text>
<path d="M962.1 383.7 L962.1 392" fill="none" stroke="#a34d7d" stroke-width="0.7"/>
<path d="M962.1 392 L962.1 398.4" fill="none" stroke="#ff6a6a" stroke-width="0.7"/>
<path d="M957.8 398.4 L966.4 398.4" fill="none" stroke="#0000ff" stroke-width="1.0"/>
<path d="M957.8 400.6 L966.4 400.6" fill="none" stroke="#0000ff" stroke-width="1.0"/>
<path d="M962.1 400.6 L962.1 408" fill="none" stroke="#ff6a6a" stroke-width="0.7"/>
<path d="M962.1 408 L962.1 413.2" fill="none" stroke="#a34d7d" stroke-width="0.7"/>
<path d="M962.1 413.2 L962.1 415.3" fill="none" stroke="#ff6a6a" stroke-width="0.7"/>
<path d="M957.5 415.3 L966.7 415.3 L962.1 419.9 L957.5 415.3" fill="none" stroke="#ff0000" stroke-width="0.8"/>
<text x="963.5" y="393" font-size="4.5" fill="#444" textLength="1.7" lengthAdjust="spacingAndGlyphs">1</text>
<text x="963.5" y="408" font-size="4.5" fill="#444" textLength="1.7" lengthAdjust="spacingAndGlyphs">2</text>
<text x="966.7" y="400.2" font-size="4.5" fill="#000080" font-weight="700" textLength="6.8" lengthAdjust="spacingAndGlyphs">C25</text>
<text x="966.7" y="405.2" font-size="4.5" fill="#000080" font-weight="700" textLength="29.9" lengthAdjust="spacingAndGlyphs">.1U_0402_16V7K</text>
<text x="730.9" y="393.7" font-size="4.8" fill="#ff0000" font-weight="700" textLength="31.3" lengthAdjust="spacingAndGlyphs">PVT-2 PIR-13</text>
<rect x="730.6" y="397.7" width="37" height="22.5" fill="none" stroke="#ff0000" stroke-width="1.25"/>
<path d="M681.1 415.3 L739 415.3" fill="none" stroke="#a34d7d" stroke-width="0.7"/>
<path d="M739 415.3 L743.4 415.3" fill="none" stroke="#ff6a6a" stroke-width="0.7"/>
<circle cx="744.6" cy="415" r="1.25" fill="none" stroke="#0000ff" stroke-width=".75"/>
<circle cx="757.5" cy="415" r="1.25" fill="none" stroke="#0000ff" stroke-width=".75"/>
<path d="M745.9 415.3 Q747.2 416.9 748.5 415.3 Q749.8 413.1 751.1 415.3 Q752.4 416.9 753.7 415.3 Q755 413.1 756.3 415.3" fill="none" stroke="#0000ff" stroke-width=".8"/>
<path d="M758.8 415.3 L763 415.3" fill="none" stroke="#ff6a6a" stroke-width="0.7"/>
<path d="M763 415.3 L839.9 415.3" fill="none" stroke="#a34d7d" stroke-width="0.7"/>
<text x="682" y="414.2" font-size="4.62" fill="#f23c3c" textLength="33.2" lengthAdjust="spacingAndGlyphs">HUB_XCLKOUT_R</text>
<text x="804.9" y="414.2" font-size="4.62" fill="#f23c3c" textLength="27.3" lengthAdjust="spacingAndGlyphs">HUB_XCLKOUT</text>
<rect x="716.4" y="414.2" width="2.200" height="2.200" fill="#ff00ff"/>
<text x="740.3" y="405" font-size="4.5" fill="#000080" font-weight="700" textLength="6.8" lengthAdjust="spacingAndGlyphs">R16</text>
<text x="740.3" y="409.7" font-size="4.5" fill="#000080" font-weight="700" textLength="20.2" lengthAdjust="spacingAndGlyphs">0_0402_5%</text>
<text x="739.4" y="414.4" font-size="4.5" fill="#444" textLength="1.8" lengthAdjust="spacingAndGlyphs">1</text>
<text x="762.4" y="414.4" font-size="4.5" fill="#444" textLength="1.8" lengthAdjust="spacingAndGlyphs">2</text>
<text x="749.6" y="413.8" font-size="4.5" fill="#000" font-weight="700" textLength="3.4" lengthAdjust="spacingAndGlyphs">@</text>
<path d="M717.5 415.3 L717.5 437" fill="none" stroke="#a34d7d" stroke-width="0.7"/>
<rect x="716.4" y="432.4" width="2.200" height="2.200" fill="#ff00ff"/>
<path d="M717.5 437 L717.5 443.4" fill="none" stroke="#ff6a6a" stroke-width="0.7"/>
<path d="M713.3 443.4 L721.7 443.4" fill="none" stroke="#0000ff" stroke-width="1.0"/>
<path d="M713.3 445.6 L721.7 445.6" fill="none" stroke="#0000ff" stroke-width="1.0"/>
<path d="M717.5 445.6 L717.5 452" fill="none" stroke="#ff6a6a" stroke-width="0.7"/>
<path d="M717.5 452 L717.5 458" fill="none" stroke="#a34d7d" stroke-width="0.7"/>
<path d="M717.5 458 L717.5 460.1" fill="none" stroke="#ff6a6a" stroke-width="0.7"/>
<path d="M712.9 460.1 L722.1 460.1 L717.5 464.7 L712.9 460.1" fill="none" stroke="#ff0000" stroke-width="0.8"/>
<text x="718.8" y="438.5" font-size="4.5" fill="#444" textLength="1.7" lengthAdjust="spacingAndGlyphs">1</text>
<text x="718.8" y="454.3" font-size="4.5" fill="#444" textLength="1.7" lengthAdjust="spacingAndGlyphs">2</text>
<text x="722.6" y="450.3" font-size="4.5" fill="#000080" font-weight="700" textLength="6.8" lengthAdjust="spacingAndGlyphs">C18</text>
<text x="722.6" y="455" font-size="4.5" fill="#000080" font-weight="700" textLength="29.3" lengthAdjust="spacingAndGlyphs">18P_0402_50V8J</text>
<text x="722.6" y="459.6" font-size="4.56" fill="#000" font-weight="700" textLength="13.7" lengthAdjust="spacingAndGlyphs">INTEL@</text>
<rect x="744.6" y="424.5" width="18.4" height="14.1" fill="none" stroke="#0000ff" stroke-width="1.0"/>
<path d="M746 433.5 L750 433.5 L750 429.3 L752.4 429.3" fill="none" stroke="#0000ff" stroke-width="0.9"/>
<path d="M752.4 426.4 L752.4 436.8" fill="none" stroke="#0000ff" stroke-width="0.9"/>
<path d="M753.9 427 L755.6 427 L755.6 436.2 L753.9 436.2 L753.9 427" fill="none" stroke="#0000ff" stroke-width="0.8"/>
<path d="M757.2 426.4 L757.2 436.8" fill="none" stroke="#0000ff" stroke-width="0.9"/>
<path d="M757.2 433.5 L759.6 433.5 L759.6 429.3 L762 429.3" fill="none" stroke="#0000ff" stroke-width="0.9"/>
<text x="745.6" y="423.3" font-size="4.5" fill="#000080" font-weight="700" textLength="4.6" lengthAdjust="spacingAndGlyphs">Y1</text>
<text x="754.8" y="423.3" font-size="4.5" fill="#000080" font-weight="700" textLength="67.1" lengthAdjust="spacingAndGlyphs">8MHZ_12PF_FSX3M-8.000000M12FAO</text>
<path d="M735.7 429.3 L744.6 429.3" fill="none" stroke="#ff6a6a" stroke-width="0.7"/>
<path d="M735.7 429.3 L726.3 429.3 L726.3 435.6" fill="none" stroke="#a34d7d" stroke-width="0.7"/>
<path d="M726.3 435.6 L726.3 437.8" fill="none" stroke="#ff6a6a" stroke-width="0.7"/>
<path d="M721.7 437.8 L730.9 437.8 L726.3 442.4 L721.7 437.8" fill="none" stroke="#ff0000" stroke-width="0.8"/>
<path d="M735.7 433.5 L744.6 433.5" fill="none" stroke="#ff6a6a" stroke-width="0.7"/>
<path d="M717.5 433.5 L735.7 433.5" fill="none" stroke="#a34d7d" stroke-width="0.7"/>
<path d="M763 429.3 L772.4 429.3" fill="none" stroke="#ff6a6a" stroke-width="0.7"/>
<path d="M772.4 429.3 L853.5 429.3" fill="none" stroke="#a34d7d" stroke-width="0.7"/>
<text x="818.2" y="428.1" font-size="4.62" fill="#f23c3c" textLength="23.4" lengthAdjust="spacingAndGlyphs">HUB_XCLKIN</text>
<rect x="806.8" y="428.2" width="2.200" height="2.200" fill="#ff00ff"/>
<path d="M763 433.5 L772.4 433.5" fill="none" stroke="#ff6a6a" stroke-width="0.7"/>
<path d="M772.4 433.5 L781.3 433.5 L781.3 440" fill="none" stroke="#a34d7d" stroke-width="0.7"/>
<path d="M781.3 440 L781.3 442.1" fill="none" stroke="#ff6a6a" stroke-width="0.7"/>
<path d="M776.7 442.1 L785.9 442.1 L781.3 446.7 L776.7 442.1" fill="none" stroke="#ff0000" stroke-width="0.8"/>
<text x="739.6" y="428.6" font-size="4.5" fill="#444" textLength="1.7" lengthAdjust="spacingAndGlyphs">4</text>
<text x="739.6" y="436.4" font-size="4.5" fill="#444" textLength="1.7" lengthAdjust="spacingAndGlyphs">1</text>
<text x="765.8" y="428.6" font-size="4.5" fill="#444" textLength="1.7" lengthAdjust="spacingAndGlyphs">3</text>
<text x="765.8" y="436.4" font-size="4.5" fill="#444" textLength="1.7" lengthAdjust="spacingAndGlyphs">2</text>
<text x="745.1" y="441.3" font-size="4.56" fill="#000" font-weight="700" textLength="13.7" lengthAdjust="spacingAndGlyphs">INTEL@</text>
<path d="M807.9 429.3 L807.9 434" fill="none" stroke="#a34d7d" stroke-width="0.7"/>
<path d="M807.9 434 L807.9 439.5" fill="none" stroke="#ff6a6a" stroke-width="0.7"/>
<path d="M803.9 439.4 L811.9 439.4" fill="none" stroke="#0000ff" stroke-width="1.0"/>
<path d="M803.9 441.6 L811.9 441.6" fill="none" stroke="#0000ff" stroke-width="1.0"/>
<path d="M807.9 441.5 L807.9 449" fill="none" stroke="#ff6a6a" stroke-width="0.7"/>
<path d="M807.9 449 L807.9 453.8" fill="none" stroke="#a34d7d" stroke-width="0.7"/>
<path d="M807.9 453.8 L807.9 455.9" fill="none" stroke="#ff6a6a" stroke-width="0.7"/>
<path d="M803.3 455.9 L812.5 455.9 L807.9 460.5 L803.3 455.9" fill="none" stroke="#ff0000" stroke-width="0.8"/>
<text x="809.3" y="433.4" font-size="4.5" fill="#444" textLength="1.7" lengthAdjust="spacingAndGlyphs">1</text>
<text x="809.3" y="449.2" font-size="4.5" fill="#444" textLength="1.7" lengthAdjust="spacingAndGlyphs">2</text>
<text x="813.1" y="445.5" font-size="4.5" fill="#000080" font-weight="700" textLength="6.8" lengthAdjust="spacingAndGlyphs">C10</text>
<text x="813.1" y="450.2" font-size="4.5" fill="#000080" font-weight="700" textLength="29.8" lengthAdjust="spacingAndGlyphs">18P_0402_50V8J</text>
<text x="813.1" y="455" font-size="4.56" fill="#000" font-weight="700" textLength="13.7" lengthAdjust="spacingAndGlyphs">INTEL@</text>
<circle cx="907.7" cy="439.6" r=".95" fill="#fff" stroke="#ff0000" stroke-width=".55"/>
<text x="899.6" y="436.6" font-size="4.27" fill="#444" textLength="17.1" lengthAdjust="spacingAndGlyphs">+3V_HUB</text>
<path d="M907.7 440.7 L907.7 492.6" fill="none" stroke="#a34d7d" stroke-width="0.7"/>
<path d="M907.7 497.3 L907.7 517.4" fill="none" stroke="#a34d7d" stroke-width="0.7"/>
<path d="M907.7 517.4 L907.7 519.5" fill="none" stroke="#ff6a6a" stroke-width="0.7"/>
<path d="M903.1 519.5 L912.3 519.5 L907.7 524.1 L903.1 519.5" fill="none" stroke="#ff0000" stroke-width="0.8"/>
<path d="M907.7 447.3 L930.4 447.3" fill="none" stroke="#a34d7d" stroke-width="0.7"/>
<path d="M952.8 447.3 L1038.8 447.3" fill="none" stroke="#a34d7d" stroke-width="0.7"/>
<rect x="906.6" y="446.2" width="2.200" height="2.200" fill="#ff00ff"/>
<path d="M930.4 447.3 L935 447.3" fill="none" stroke="#ff6a6a" stroke-width="0.7"/>
<path d="M935 447.3 L936.1 448.8 L938.4 445.8 L940.7 448.8 L942.9 445.8 L945.2 448.8 L947.5 445.8 L948.6 447.3" fill="none" stroke="#0000ff" stroke-width="0.8"/>
<path d="M948.6 447.3 L952.8 447.3" fill="none" stroke="#ff6a6a" stroke-width="0.7"/>
<text x="912.4" y="446.5" font-size="4.15" fill="#000080" font-weight="700" textLength="7.2" lengthAdjust="spacingAndGlyphs">R14</text>
<text x="929.6" y="446.5" font-size="3.9" fill="#444" textLength="1.8" lengthAdjust="spacingAndGlyphs">1</text>
<text x="952.2" y="446.5" font-size="3.9" fill="#444" textLength="1.8" lengthAdjust="spacingAndGlyphs">2</text>
<text x="957.7" y="446.5" font-size="4.15" fill="#000080" font-weight="700" textLength="24.6" lengthAdjust="spacingAndGlyphs">2.2K_0402_5%</text>
<text x="990.1" y="446.5" font-size="4.39" fill="#f23c3c" textLength="37.6" lengthAdjust="spacingAndGlyphs">I2C_1_SCL_SENSOR</text>
<path d="M907.7 451.8 L930.4 451.8" fill="none" stroke="#a34d7d" stroke-width="0.7"/>
<path d="M952.8 451.8 L1038.8 451.8" fill="none" stroke="#a34d7d" stroke-width="0.7"/>
<rect x="906.6" y="450.7" width="2.200" height="2.200" fill="#ff00ff"/>
<path d="M930.4 451.8 L935 451.8" fill="none" stroke="#ff6a6a" stroke-width="0.7"/>
<path d="M935 451.8 L936.1 453.3 L938.4 450.3 L940.7 453.3 L942.9 450.3 L945.2 453.3 L947.5 450.3 L948.6 451.8" fill="none" stroke="#0000ff" stroke-width="0.8"/>
<path d="M948.6 451.8 L952.8 451.8" fill="none" stroke="#ff6a6a" stroke-width="0.7"/>
<text x="912.4" y="451" font-size="4.15" fill="#000080" font-weight="700" textLength="7.2" lengthAdjust="spacingAndGlyphs">R15</text>
<text x="929.6" y="451" font-size="3.9" fill="#444" textLength="1.8" lengthAdjust="spacingAndGlyphs">1</text>
<text x="952.2" y="451" font-size="3.9" fill="#444" textLength="1.8" lengthAdjust="spacingAndGlyphs">2</text>
<text x="957.7" y="451" font-size="4.15" fill="#000080" font-weight="700" textLength="24.6" lengthAdjust="spacingAndGlyphs">2.2K_0402_5%</text>
<text x="990.1" y="451" font-size="4.39" fill="#f23c3c" textLength="37.6" lengthAdjust="spacingAndGlyphs">I2C_1_SDA_SENSOR</text>
<path d="M907.7 456.4 L930.4 456.4" fill="none" stroke="#a34d7d" stroke-width="0.7"/>
<path d="M952.8 456.4 L1038.8 456.4" fill="none" stroke="#a34d7d" stroke-width="0.7"/>
<rect x="906.6" y="455.3" width="2.200" height="2.200" fill="#ff00ff"/>
<path d="M930.4 456.4 L935 456.4" fill="none" stroke="#ff6a6a" stroke-width="0.7"/>
<path d="M935 456.4 L936.1 457.9 L938.4 454.9 L940.7 457.9 L942.9 454.9 L945.2 457.9 L947.5 454.9 L948.6 456.4" fill="none" stroke="#0000ff" stroke-width="0.8"/>
<path d="M948.6 456.4 L952.8 456.4" fill="none" stroke="#ff6a6a" stroke-width="0.7"/>
<text x="912.4" y="455.6" font-size="4.15" fill="#000080" font-weight="700" textLength="7.2" lengthAdjust="spacingAndGlyphs">R17</text>
<text x="929.6" y="455.6" font-size="3.9" fill="#444" textLength="1.8" lengthAdjust="spacingAndGlyphs">1</text>
<text x="952.2" y="455.6" font-size="3.9" fill="#444" textLength="1.8" lengthAdjust="spacingAndGlyphs">2</text>
<text x="935" y="455.8" font-size="4.27" fill="#000" font-weight="700" textLength="14" lengthAdjust="spacingAndGlyphs">INTEL@</text>
<text x="957.7" y="455.6" font-size="4.15" fill="#000080" font-weight="700" textLength="24.6" lengthAdjust="spacingAndGlyphs">1.5K_0402_1%</text>
<text x="990.1" y="455.6" font-size="4.39" fill="#f23c3c" textLength="28.2" lengthAdjust="spacingAndGlyphs">USB20_P6_HUB</text>
<path d="M907.7 465.2 L930.4 465.2" fill="none" stroke="#a34d7d" stroke-width="0.7"/>
<path d="M952.8 465.2 L1038.8 465.2" fill="none" stroke="#a34d7d" stroke-width="0.7"/>
<rect x="906.6" y="464.1" width="2.200" height="2.200" fill="#ff00ff"/>
<path d="M930.4 465.2 L935 465.2" fill="none" stroke="#ff6a6a" stroke-width="0.7"/>
<path d="M935 465.2 L936.1 466.7 L938.4 463.7 L940.7 466.7 L942.9 463.7 L945.2 466.7 L947.5 463.7 L948.6 465.2" fill="none" stroke="#0000ff" stroke-width="0.8"/>
<path d="M948.6 465.2 L952.8 465.2" fill="none" stroke="#ff6a6a" stroke-width="0.7"/>
<text x="912.4" y="464.4" font-size="4.15" fill="#000080" font-weight="700" textLength="7.2" lengthAdjust="spacingAndGlyphs">R18</text>
<text x="929.6" y="464.4" font-size="3.9" fill="#444" textLength="1.8" lengthAdjust="spacingAndGlyphs">1</text>
<text x="952.2" y="464.4" font-size="3.9" fill="#444" textLength="1.8" lengthAdjust="spacingAndGlyphs">2</text>
<text x="935" y="464.6" font-size="4.27" fill="#000" font-weight="700" textLength="14" lengthAdjust="spacingAndGlyphs">INTEL@</text>
<text x="957.7" y="464.4" font-size="4.15" fill="#000080" font-weight="700" textLength="24.6" lengthAdjust="spacingAndGlyphs">10K_0402_5%</text>
<text x="990.1" y="464.4" font-size="4.39" fill="#f23c3c" textLength="27.3" lengthAdjust="spacingAndGlyphs">HUB_DBG_PB3</text>
<path d="M907.7 469.8 L930.4 469.8" fill="none" stroke="#a34d7d" stroke-width="0.7"/>
<path d="M952.8 469.8 L1038.8 469.8" fill="none" stroke="#a34d7d" stroke-width="0.7"/>
<rect x="906.6" y="468.7" width="2.200" height="2.200" fill="#ff00ff"/>
<path d="M930.4 469.8 L935 469.8" fill="none" stroke="#ff6a6a" stroke-width="0.7"/>
<path d="M935 469.8 L936.1 471.3 L938.4 468.3 L940.7 471.3 L942.9 468.3 L945.2 471.3 L947.5 468.3 L948.6 469.8" fill="none" stroke="#0000ff" stroke-width="0.8"/>
<path d="M948.6 469.8 L952.8 469.8" fill="none" stroke="#ff6a6a" stroke-width="0.7"/>
<text x="912.4" y="469" font-size="4.15" fill="#000080" font-weight="700" textLength="7.2" lengthAdjust="spacingAndGlyphs">R21</text>
<text x="929.6" y="469" font-size="3.9" fill="#444" textLength="1.8" lengthAdjust="spacingAndGlyphs">1</text>
<text x="952.2" y="469" font-size="3.9" fill="#444" textLength="1.8" lengthAdjust="spacingAndGlyphs">2</text>
<text x="935" y="469.2" font-size="4.27" fill="#000" font-weight="700" textLength="14" lengthAdjust="spacingAndGlyphs">INTEL@</text>
<text x="957.7" y="469" font-size="4.15" fill="#000080" font-weight="700" textLength="24.6" lengthAdjust="spacingAndGlyphs">10K_0402_5%</text>
<text x="990.1" y="469" font-size="4.39" fill="#f23c3c" textLength="27.3" lengthAdjust="spacingAndGlyphs">HUB_DBG_PB4</text>
<path d="M907.7 474.3 L930.4 474.3" fill="none" stroke="#a34d7d" stroke-width="0.7"/>
<path d="M952.8 474.3 L1038.8 474.3" fill="none" stroke="#a34d7d" stroke-width="0.7"/>
<rect x="906.6" y="473.2" width="2.200" height="2.200" fill="#ff00ff"/>
<path d="M930.4 474.3 L935 474.3" fill="none" stroke="#ff6a6a" stroke-width="0.7"/>
<path d="M935 474.3 L936.1 475.8 L938.4 472.8 L940.7 475.8 L942.9 472.8 L945.2 475.8 L947.5 472.8 L948.6 474.3" fill="none" stroke="#0000ff" stroke-width="0.8"/>
<path d="M948.6 474.3 L952.8 474.3" fill="none" stroke="#ff6a6a" stroke-width="0.7"/>
<text x="912.4" y="473.5" font-size="4.15" fill="#000080" font-weight="700" textLength="7.2" lengthAdjust="spacingAndGlyphs">R23</text>
<text x="929.6" y="473.5" font-size="3.9" fill="#444" textLength="1.8" lengthAdjust="spacingAndGlyphs">1</text>
<text x="952.2" y="473.5" font-size="3.9" fill="#444" textLength="1.8" lengthAdjust="spacingAndGlyphs">2</text>
<text x="935" y="473.7" font-size="4.27" fill="#000" font-weight="700" textLength="14" lengthAdjust="spacingAndGlyphs">INTEL@</text>
<text x="957.7" y="473.5" font-size="4.15" fill="#000080" font-weight="700" textLength="24.6" lengthAdjust="spacingAndGlyphs">10K_0402_5%</text>
<text x="990.1" y="473.5" font-size="4.39" fill="#f23c3c" textLength="29.4" lengthAdjust="spacingAndGlyphs">HUB_DBG_PA13</text>
<path d="M907.7 478.9 L930.4 478.9" fill="none" stroke="#a34d7d" stroke-width="0.7"/>
<path d="M952.8 478.9 L1038.8 478.9" fill="none" stroke="#a34d7d" stroke-width="0.7"/>
<rect x="906.6" y="477.8" width="2.200" height="2.200" fill="#ff00ff"/>
<path d="M930.4 478.9 L935 478.9" fill="none" stroke="#ff6a6a" stroke-width="0.7"/>
<path d="M935 478.9 L936.1 480.4 L938.4 477.4 L940.7 480.4 L942.9 477.4 L945.2 480.4 L947.5 477.4 L948.6 478.9" fill="none" stroke="#0000ff" stroke-width="0.8"/>
<path d="M948.6 478.9 L952.8 478.9" fill="none" stroke="#ff6a6a" stroke-width="0.7"/>
<text x="912.4" y="478.1" font-size="4.15" fill="#000080" font-weight="700" textLength="7.2" lengthAdjust="spacingAndGlyphs">R24</text>
<text x="929.6" y="478.1" font-size="3.9" fill="#444" textLength="1.8" lengthAdjust="spacingAndGlyphs">1</text>
<text x="952.2" y="478.1" font-size="3.9" fill="#444" textLength="1.8" lengthAdjust="spacingAndGlyphs">2</text>
<text x="935" y="478.3" font-size="4.27" fill="#000" font-weight="700" textLength="14" lengthAdjust="spacingAndGlyphs">INTEL@</text>
<text x="957.7" y="478.1" font-size="4.15" fill="#000080" font-weight="700" textLength="24.6" lengthAdjust="spacingAndGlyphs">10K_0402_5%</text>
<text x="990.1" y="478.1" font-size="4.39" fill="#f23c3c" textLength="29.4" lengthAdjust="spacingAndGlyphs">HUB_DBG_PA15</text>
<path d="M907.7 492.6 L930.4 492.6" fill="none" stroke="#a34d7d" stroke-width="0.7"/>
<path d="M952.8 492.6 L1038.8 492.6" fill="none" stroke="#a34d7d" stroke-width="0.7"/>
<path d="M930.4 492.6 L935 492.6" fill="none" stroke="#ff6a6a" stroke-width="0.7"/>
<path d="M935 492.6 L936.1 494.1 L938.4 491.1 L940.7 494.1 L942.9 491.1 L945.2 494.1 L947.5 491.1 L948.6 492.6" fill="none" stroke="#0000ff" stroke-width="0.8"/>
<path d="M948.6 492.6 L952.8 492.6" fill="none" stroke="#ff6a6a" stroke-width="0.7"/>
<text x="912.4" y="491.8" font-size="4.15" fill="#000080" font-weight="700" textLength="7.2" lengthAdjust="spacingAndGlyphs">R26</text>
<text x="929.6" y="491.8" font-size="3.9" fill="#444" textLength="1.8" lengthAdjust="spacingAndGlyphs">1</text>
<text x="952.2" y="491.8" font-size="3.9" fill="#444" textLength="1.8" lengthAdjust="spacingAndGlyphs">2</text>
<text x="940.3" y="491.6" font-size="4.15" fill="#000" font-weight="700" textLength="3.4" lengthAdjust="spacingAndGlyphs">@</text>
<text x="957.7" y="491.8" font-size="4.15" fill="#000080" font-weight="700" textLength="19.8" lengthAdjust="spacingAndGlyphs">0_0402_5%</text>
<text x="990.1" y="491.8" font-size="4.39" fill="#f23c3c" textLength="22.7" lengthAdjust="spacingAndGlyphs">HUB_BOOT0</text>
<path d="M907.7 497.3 L930.4 497.3" fill="none" stroke="#a34d7d" stroke-width="0.7"/>
<path d="M952.8 497.3 L984.5 497.3 L984.5 492.6" fill="none" stroke="#a34d7d" stroke-width="0.7"/>
<rect x="983.4" y="491.5" width="2.200" height="2.200" fill="#ff00ff"/>
<path d="M930.4 497.3 L935 497.3" fill="none" stroke="#ff6a6a" stroke-width="0.7"/>
<path d="M935 497.3 L936.1 498.8 L938.4 495.8 L940.7 498.8 L942.9 495.8 L945.2 498.8 L947.5 495.8 L948.6 497.3" fill="none" stroke="#0000ff" stroke-width="0.8"/>
<path d="M948.6 497.3 L952.8 497.3" fill="none" stroke="#ff6a6a" stroke-width="0.7"/>
<text x="912.4" y="496.5" font-size="4.15" fill="#000080" font-weight="700" textLength="7.2" lengthAdjust="spacingAndGlyphs">R27</text>
<text x="929.6" y="496.5" font-size="3.9" fill="#444" textLength="1.8" lengthAdjust="spacingAndGlyphs">1</text>
<text x="952.2" y="496.5" font-size="3.9" fill="#444" textLength="1.8" lengthAdjust="spacingAndGlyphs">2</text>
<text x="935" y="496.7" font-size="4.27" fill="#000" font-weight="700" textLength="14" lengthAdjust="spacingAndGlyphs">INTEL@</text>
<text x="957.7" y="496.5" font-size="4.15" fill="#000080" font-weight="700" textLength="19.8" lengthAdjust="spacingAndGlyphs">0_0402_5%</text>
<path d="M907.7 506.2 L930.4 506.2" fill="none" stroke="#a34d7d" stroke-width="0.7"/>
<path d="M952.8 506.2 L1038.8 506.2" fill="none" stroke="#a34d7d" stroke-width="0.7"/>
<rect x="906.6" y="505.1" width="2.200" height="2.200" fill="#ff00ff"/>
<path d="M930.4 506.2 L935 506.2" fill="none" stroke="#ff6a6a" stroke-width="0.7"/>
<path d="M935 506.2 L936.1 507.7 L938.4 504.7 L940.7 507.7 L942.9 504.7 L945.2 507.7 L947.5 504.7 L948.6 506.2" fill="none" stroke="#0000ff" stroke-width="0.8"/>
<path d="M948.6 506.2 L952.8 506.2" fill="none" stroke="#ff6a6a" stroke-width="0.7"/>
<text x="912.4" y="505.4" font-size="4.15" fill="#000080" font-weight="700" textLength="7.2" lengthAdjust="spacingAndGlyphs">R28</text>
<text x="929.6" y="505.4" font-size="3.9" fill="#444" textLength="1.8" lengthAdjust="spacingAndGlyphs">1</text>
<text x="952.2" y="505.4" font-size="3.9" fill="#444" textLength="1.8" lengthAdjust="spacingAndGlyphs">2</text>
<text x="935" y="505.6" font-size="4.27" fill="#000" font-weight="700" textLength="14" lengthAdjust="spacingAndGlyphs">INTEL@</text>
<text x="957.7" y="505.4" font-size="4.15" fill="#000080" font-weight="700" textLength="19.8" lengthAdjust="spacingAndGlyphs">0_0402_5%</text>
<text x="990.1" y="505.4" font-size="4.39" fill="#f23c3c" textLength="22.7" lengthAdjust="spacingAndGlyphs">HUB_BOOT1</text>
<path d="M907.7 510.5 L930.4 510.5" fill="none" stroke="#a34d7d" stroke-width="0.7"/>
<path d="M952.8 510.5 L1038.8 510.5" fill="none" stroke="#a34d7d" stroke-width="0.7"/>
<rect x="906.6" y="509.4" width="2.200" height="2.200" fill="#ff00ff"/>
<path d="M930.4 510.5 L935 510.5" fill="none" stroke="#ff6a6a" stroke-width="0.7"/>
<path d="M935 510.5 L936.1 512 L938.4 509 L940.7 512 L942.9 509 L945.2 512 L947.5 509 L948.6 510.5" fill="none" stroke="#0000ff" stroke-width="0.8"/>
<path d="M948.6 510.5 L952.8 510.5" fill="none" stroke="#ff6a6a" stroke-width="0.7"/>
<text x="912.4" y="509.7" font-size="4.15" fill="#000080" font-weight="700" textLength="7.2" lengthAdjust="spacingAndGlyphs">R29</text>
<text x="929.6" y="509.7" font-size="3.9" fill="#444" textLength="1.8" lengthAdjust="spacingAndGlyphs">1</text>
<text x="952.2" y="509.7" font-size="3.9" fill="#444" textLength="1.8" lengthAdjust="spacingAndGlyphs">2</text>
<text x="935" y="509.9" font-size="4.27" fill="#000" font-weight="700" textLength="14" lengthAdjust="spacingAndGlyphs">INTEL@</text>
<text x="957.7" y="509.7" font-size="4.15" fill="#000080" font-weight="700" textLength="24.6" lengthAdjust="spacingAndGlyphs">10K_0402_5%</text>
<text x="990.1" y="509.7" font-size="4.39" fill="#f23c3c" textLength="29.8" lengthAdjust="spacingAndGlyphs">HUB_DBG_PA14</text>
<circle cx="1115.9" cy="471.3" r=".95" fill="#fff" stroke="#ff0000" stroke-width=".55"/>
<text x="1106.3" y="468.2" font-size="4.56" fill="#444" textLength="16.3" lengthAdjust="spacingAndGlyphs">+3V_SEN</text>
<text x="1125" y="465.8" font-size="4.8" fill="#ff0000" font-weight="700" textLength="31.6" lengthAdjust="spacingAndGlyphs">PVT-2 PIR-13</text>
<rect x="1124.6" y="469.9" width="32.6" height="18.7" fill="none" stroke="#ff0000" stroke-width="1.25"/>
<circle cx="1165.7" cy="471.3" r=".95" fill="#fff" stroke="#ff0000" stroke-width=".55"/>
<text x="1157.8" y="468.2" font-size="4.56" fill="#444" textLength="16.4" lengthAdjust="spacingAndGlyphs">+3V_HUB</text>
<path d="M1115.9 472.4 L1115.9 483.5 L1129.5 483.5" fill="none" stroke="#a34d7d" stroke-width="0.7"/>
<path d="M1129.5 483.5 L1133.8 483.5" fill="none" stroke="#ff6a6a" stroke-width="0.7"/>
<circle cx="1135" cy="483.2" r="1.25" fill="none" stroke="#0000ff" stroke-width=".75"/>
<circle cx="1146.8" cy="483.2" r="1.25" fill="none" stroke="#0000ff" stroke-width=".75"/>
<path d="M1136.3 483.5 Q1137.5 485.1 1138.6 483.5 Q1139.8 481.3 1140.9 483.5 Q1142.1 485.1 1143.2 483.5 Q1144.4 481.3 1145.5 483.5" fill="none" stroke="#0000ff" stroke-width=".8"/>
<path d="M1148 483.5 L1152.4 483.5" fill="none" stroke="#ff6a6a" stroke-width="0.7"/>
<path d="M1152.4 483.5 L1165.7 483.5 L1165.7 472.4" fill="none" stroke="#a34d7d" stroke-width="0.7"/>
<text x="1129.7" y="473.3" font-size="4.5" fill="#000080" font-weight="700" textLength="6.8" lengthAdjust="spacingAndGlyphs">R35</text>
<text x="1129.7" y="477.7" font-size="4.5" fill="#000080" font-weight="700" textLength="19.7" lengthAdjust="spacingAndGlyphs">0_0402_5%</text>
<text x="1129.3" y="482.5" font-size="4.5" fill="#444" textLength="1.8" lengthAdjust="spacingAndGlyphs">1</text>
<text x="1151.6" y="482.5" font-size="4.5" fill="#444" textLength="1.8" lengthAdjust="spacingAndGlyphs">2</text>
<text x="1139" y="482.2" font-size="4.5" fill="#000" font-weight="700" textLength="3.4" lengthAdjust="spacingAndGlyphs">@</text>
<circle cx="1265.5" cy="443.8" r=".95" fill="#fff" stroke="#ff0000" stroke-width=".55"/>
<text x="1257.3" y="440.8" font-size="4.56" fill="#444" textLength="16.9" lengthAdjust="spacingAndGlyphs">+3V_HUB</text>
<rect x="1256.5" y="446.9" width="27.1" height="36.6" fill="none" stroke="#ff0000" stroke-width="1.25"/>
<text x="1288.5" y="452.6" font-size="4.8" fill="#ff0000" font-weight="700" textLength="30.9" lengthAdjust="spacingAndGlyphs">PVT-1 PIR-10</text>
<path d="M1265.5 444.9 L1265.5 461.7" fill="none" stroke="#ff6a6a" stroke-width="0.7"/>
<path d="M1265.5 461.7 L1267.1 462.7 L1263.9 464.8 L1267.1 466.8 L1263.9 468.8 L1267.1 470.8 L1263.9 472.9 L1265.5 473.9" fill="none" stroke="#0000ff" stroke-width="0.8"/>
<path d="M1265.5 473.9 L1265.5 487.8" fill="none" stroke="#ff6a6a" stroke-width="0.7"/>
<rect x="1264.4" y="486.7" width="2.200" height="2.200" fill="#ff00ff"/>
<text x="1262" y="457" font-size="4.5" fill="#444" textLength="1.7" lengthAdjust="spacingAndGlyphs">1</text>
<text x="1262" y="479.6" font-size="4.5" fill="#444" textLength="1.7" lengthAdjust="spacingAndGlyphs">2</text>
<text x="1270.1" y="459.7" font-size="4.62" fill="#000" font-weight="700" textLength="9.2" lengthAdjust="spacingAndGlyphs">ST@</text>
<text x="1270.1" y="464.2" font-size="4.5" fill="#000080" font-weight="700" textLength="6.8" lengthAdjust="spacingAndGlyphs">R28</text>
<text x="1270.1" y="469.3" font-size="4.5" fill="#000080" font-weight="700" textLength="26.5" lengthAdjust="spacingAndGlyphs">100K_0402_5%</text>
<path d="M1202.4 487.8 L1265.5 487.8" fill="none" stroke="#d9a9c2" stroke-width="1.4"/>
<text x="1216.6" y="486.6" font-size="4.62" fill="#f23c3c" textLength="19.5" lengthAdjust="spacingAndGlyphs">HUB_RST#</text>
<path d="M1265.5 487.8 L1265.5 497.8" fill="none" stroke="#ff6a6a" stroke-width="0.7"/>
<path d="M1261 497.8 L1270 497.8" fill="none" stroke="#0000ff" stroke-width="1.0"/>
<path d="M1261 500 L1270 500" fill="none" stroke="#0000ff" stroke-width="1.0"/>
<path d="M1265.5 500 L1265.5 509" fill="none" stroke="#ff6a6a" stroke-width="0.7"/>
<path d="M1265.5 509 L1265.5 513.2" fill="none" stroke="#a34d7d" stroke-width="0.7"/>
<path d="M1265.5 513.2 L1265.5 515.3" fill="none" stroke="#ff6a6a" stroke-width="0.7"/>
<path d="M1260.9 515.3 L1270.1 515.3 L1265.5 519.9 L1260.9 515.3" fill="none" stroke="#ff0000" stroke-width="0.8"/>
<text x="1267" y="492.2" font-size="4.5" fill="#444" textLength="1.7" lengthAdjust="spacingAndGlyphs">1</text>
<text x="1267" y="508" font-size="4.5" fill="#444" textLength="1.7" lengthAdjust="spacingAndGlyphs">2</text>
<text x="1270.1" y="495.7" font-size="4.5" fill="#000080" font-weight="700" textLength="6.8" lengthAdjust="spacingAndGlyphs">C17</text>
<text x="1270.1" y="500.4" font-size="4.5" fill="#000080" font-weight="700" textLength="31.6" lengthAdjust="spacingAndGlyphs">0.1U_0402_16V7K</text>
<circle cx="1134.2" cy="516.3" r=".95" fill="#fff" stroke="#ff0000" stroke-width=".55"/>
<text x="1126.6" y="513.2" font-size="4.56" fill="#444" textLength="16.7" lengthAdjust="spacingAndGlyphs">+3V_HUB</text>
<path d="M1134.2 517.4 L1134.2 524.2 L1152.5 524.2" fill="none" stroke="#a34d7d" stroke-width="0.7"/>
<path d="M1134.2 524.2 L1134.2 538.5" fill="none" stroke="#a34d7d" stroke-width="0.7"/>
<path d="M1134.2 538.5 L1134.2 551.4" fill="none" stroke="#ff6a6a" stroke-width="0.7"/>
<rect x="1133.1" y="523.1" width="2.200" height="2.200" fill="#ff00ff"/>
<path d="M1138.7 524.2 L1138.7 538.5" fill="none" stroke="#a34d7d" stroke-width="0.7"/>
<path d="M1138.7 538.5 L1138.7 551.4" fill="none" stroke="#ff6a6a" stroke-width="0.7"/>
<rect x="1137.6" y="523.1" width="2.200" height="2.200" fill="#ff00ff"/>
<path d="M1143.2 524.2 L1143.2 538.5" fill="none" stroke="#a34d7d" stroke-width="0.7"/>
<path d="M1143.2 538.5 L1143.2 551.4" fill="none" stroke="#ff6a6a" stroke-width="0.7"/>
<rect x="1142.1" y="523.1" width="2.200" height="2.200" fill="#ff00ff"/>
<path d="M1147.6 524.2 L1147.6 538.5" fill="none" stroke="#a34d7d" stroke-width="0.7"/>
<path d="M1147.6 538.5 L1147.6 551.4" fill="none" stroke="#ff6a6a" stroke-width="0.7"/>
<rect x="1146.5" y="523.1" width="2.200" height="2.200" fill="#ff00ff"/>
<path d="M1152.5 524.2 L1152.5 538.5" fill="none" stroke="#a34d7d" stroke-width="0.7"/>
<path d="M1152.5 538.5 L1152.5 551.4" fill="none" stroke="#ff6a6a" stroke-width="0.7"/>
<circle cx="1265.4" cy="538.9" r=".95" fill="#fff" stroke="#ff0000" stroke-width=".55"/>
<text x="1256.8" y="536" font-size="4.56" fill="#444" textLength="17.2" lengthAdjust="spacingAndGlyphs">+3V_HUB</text>
<path d="M1265.4 540 L1265.4 546.6 L1338.2 546.6" fill="none" stroke="#a34d7d" stroke-width="0.7"/>
<path d="M1265.4 587.6 L1338.2 587.6" fill="none" stroke="#a34d7d" stroke-width="0.7"/>
<path d="M1265.4 546.6 L1265.4 553" fill="none" stroke="#a34d7d" stroke-width="0.7"/>
<path d="M1265.4 553 L1265.4 565.4" fill="none" stroke="#ff6a6a" stroke-width="0.7"/>
<path d="M1260.6 565.4 L1270.2 565.4" fill="none" stroke="#0000ff" stroke-width="1.0"/>
<path d="M1260.6 568 L1270.2 568" fill="none" stroke="#0000ff" stroke-width="1.0"/>
<path d="M1265.4 568 L1265.4 581" fill="none" stroke="#ff6a6a" stroke-width="0.7"/>
<path d="M1265.4 581 L1265.4 587.6" fill="none" stroke="#a34d7d" stroke-width="0.7"/>
<rect x="1264.3" y="545.5" width="2.200" height="2.200" fill="#ff00ff"/>
<rect x="1264.3" y="586.5" width="2.200" height="2.200" fill="#ff00ff"/>
<text x="1267.1" y="560.2" font-size="4.5" fill="#444" textLength="1.8" lengthAdjust="spacingAndGlyphs">1</text>
<text x="1267.1" y="576.4" font-size="4.5" fill="#444" textLength="1.8" lengthAdjust="spacingAndGlyphs">2</text>
<text x="1271.8" y="559.5" font-size="4.5" fill="#000080" font-weight="700" transform="rotate(90 1271.8 559.5)" textLength="7" lengthAdjust="spacingAndGlyphs">C20</text>
<text x="1275.9" y="551" font-size="4.5" fill="#000080" font-weight="700" transform="rotate(90 1275.9 551)" textLength="32" lengthAdjust="spacingAndGlyphs">0.1U_0402_16V7K</text>
<path d="M1283.5 546.6 L1283.5 553" fill="none" stroke="#a34d7d" stroke-width="0.7"/>
<path d="M1283.5 553 L1283.5 565.4" fill="none" stroke="#ff6a6a" stroke-width="0.7"/>
<path d="M1278.7 565.4 L1288.3 565.4" fill="none" stroke="#0000ff" stroke-width="1.0"/>
<path d="M1278.7 568 L1288.3 568" fill="none" stroke="#0000ff" stroke-width="1.0"/>
<path d="M1283.5 568 L1283.5 581" fill="none" stroke="#ff6a6a" stroke-width="0.7"/>
<path d="M1283.5 581 L1283.5 587.6" fill="none" stroke="#a34d7d" stroke-width="0.7"/>
<rect x="1282.4" y="545.5" width="2.200" height="2.200" fill="#ff00ff"/>
<rect x="1282.4" y="586.5" width="2.200" height="2.200" fill="#ff00ff"/>
<text x="1285.2" y="560.2" font-size="4.5" fill="#444" textLength="1.8" lengthAdjust="spacingAndGlyphs">1</text>
<text x="1285.2" y="576.4" font-size="4.5" fill="#444" textLength="1.8" lengthAdjust="spacingAndGlyphs">2</text>
<text x="1289.9" y="559.5" font-size="4.5" fill="#000080" font-weight="700" transform="rotate(90 1289.9 559.5)" textLength="7" lengthAdjust="spacingAndGlyphs">C21</text>
<text x="1294" y="551" font-size="4.5" fill="#000080" font-weight="700" transform="rotate(90 1294 551)" textLength="32" lengthAdjust="spacingAndGlyphs">0.1U_0402_16V7K</text>
<path d="M1301.7 546.6 L1301.7 553" fill="none" stroke="#a34d7d" stroke-width="0.7"/>
<path d="M1301.7 553 L1301.7 565.4" fill="none" stroke="#ff6a6a" stroke-width="0.7"/>
<path d="M1296.9 565.4 L1306.5 565.4" fill="none" stroke="#0000ff" stroke-width="1.0"/>
<path d="M1296.9 568 L1306.5 568" fill="none" stroke="#0000ff" stroke-width="1.0"/>
<path d="M1301.7 568 L1301.7 581" fill="none" stroke="#ff6a6a" stroke-width="0.7"/>
<path d="M1301.7 581 L1301.7 587.6" fill="none" stroke="#a34d7d" stroke-width="0.7"/>
<rect x="1300.6" y="545.5" width="2.200" height="2.200" fill="#ff00ff"/>
<rect x="1300.6" y="586.5" width="2.200" height="2.200" fill="#ff00ff"/>
<text x="1303.4" y="560.2" font-size="4.5" fill="#444" textLength="1.8" lengthAdjust="spacingAndGlyphs">1</text>
<text x="1303.4" y="576.4" font-size="4.5" fill="#444" textLength="1.8" lengthAdjust="spacingAndGlyphs">2</text>
<text x="1308.1" y="559.5" font-size="4.5" fill="#000080" font-weight="700" transform="rotate(90 1308.1 559.5)" textLength="7" lengthAdjust="spacingAndGlyphs">C22</text>
<text x="1312.2" y="551" font-size="4.5" fill="#000080" font-weight="700" transform="rotate(90 1312.2 551)" textLength="32" lengthAdjust="spacingAndGlyphs">0.1U_0402_16V7K</text>
<path d="M1319.9 546.6 L1319.9 553" fill="none" stroke="#a34d7d" stroke-width="0.7"/>
<path d="M1319.9 553 L1319.9 565.4" fill="none" stroke="#ff6a6a" stroke-width="0.7"/>
<path d="M1315.1 565.4 L1324.7 565.4" fill="none" stroke="#0000ff" stroke-width="1.0"/>
<path d="M1315.1 568 L1324.7 568" fill="none" stroke="#0000ff" stroke-width="1.0"/>
<path d="M1319.9 568 L1319.9 581" fill="none" stroke="#ff6a6a" stroke-width="0.7"/>
<path d="M1319.9 581 L1319.9 587.6" fill="none" stroke="#a34d7d" stroke-width="0.7"/>
<rect x="1318.8" y="545.5" width="2.200" height="2.200" fill="#ff00ff"/>
<rect x="1318.8" y="586.5" width="2.200" height="2.200" fill="#ff00ff"/>
<text x="1321.6" y="560.2" font-size="4.5" fill="#444" textLength="1.8" lengthAdjust="spacingAndGlyphs">1</text>
<text x="1321.6" y="576.4" font-size="4.5" fill="#444" textLength="1.8" lengthAdjust="spacingAndGlyphs">2</text>
<text x="1326.3" y="559.5" font-size="4.5" fill="#000080" font-weight="700" transform="rotate(90 1326.3 559.5)" textLength="7" lengthAdjust="spacingAndGlyphs">C23</text>
<text x="1330.4" y="551" font-size="4.5" fill="#000080" font-weight="700" transform="rotate(90 1330.4 551)" textLength="32" lengthAdjust="spacingAndGlyphs">0.1U_0402_16V7K</text>
<path d="M1338.2 546.6 L1338.2 553" fill="none" stroke="#a34d7d" stroke-width="0.7"/>
<path d="M1338.2 553 L1338.2 565.4" fill="none" stroke="#ff6a6a" stroke-width="0.7"/>
<path d="M1333.4 565.4 L1343 565.4" fill="none" stroke="#0000ff" stroke-width="1.0"/>
<path d="M1333.4 568 L1343 568" fill="none" stroke="#0000ff" stroke-width="1.0"/>
<path d="M1338.2 568 L1338.2 581" fill="none" stroke="#ff6a6a" stroke-width="0.7"/>
<path d="M1338.2 581 L1338.2 587.6" fill="none" stroke="#a34d7d" stroke-width="0.7"/>
<text x="1339.9" y="560.2" font-size="4.5" fill="#444" textLength="1.8" lengthAdjust="spacingAndGlyphs">1</text>
<text x="1339.9" y="576.4" font-size="4.5" fill="#444" textLength="1.8" lengthAdjust="spacingAndGlyphs">2</text>
<text x="1344.6" y="559.5" font-size="4.5" fill="#000080" font-weight="700" transform="rotate(90 1344.6 559.5)" textLength="7" lengthAdjust="spacingAndGlyphs">C24</text>
<text x="1348.7" y="551" font-size="4.5" fill="#000080" font-weight="700" transform="rotate(90 1348.7 551)" textLength="30" lengthAdjust="spacingAndGlyphs">1U_0402_6.3V6K</text>
<path d="M1265.4 587.6 L1265.4 592.7" fill="none" stroke="#ff6a6a" stroke-width="0.7"/>
<path d="M1260.8 592.7 L1270 592.7 L1265.4 597.3 L1260.8 592.7" fill="none" stroke="#ff0000" stroke-width="0.8"/>
<rect x="1097.9" y="551.4" width="90.6" height="149.2" fill="none" stroke="#0000ff" stroke-width="1.1"/>
<text x="1102.6" y="550.3" font-size="4.39" fill="#000" font-weight="700" textLength="5" lengthAdjust="spacingAndGlyphs">U4</text>
<text x="1111.4" y="550.3" font-size="4.39" fill="#000" font-weight="700" textLength="14.2" lengthAdjust="spacingAndGlyphs">INTEL@</text>
<path d="M1084.5 556.3 L1097.9 556.3" fill="none" stroke="#ff6a6a" stroke-width="0.7"/>
<text x="1088.6" y="555.6" font-size="3.78" fill="#444" textLength="4.2" lengthAdjust="spacingAndGlyphs">F6</text>
<text x="1100.7" y="557.7" font-size="4.4" fill="#3a6ea5" textLength="18.1" lengthAdjust="spacingAndGlyphs">PA0-WKUP</text>
<path d="M1084.5 560.8 L1097.9 560.8" fill="none" stroke="#ff6a6a" stroke-width="0.7"/>
<text x="1088.6" y="560.1" font-size="3.78" fill="#444" textLength="4.2" lengthAdjust="spacingAndGlyphs">E6</text>
<text x="1100.7" y="562.2" font-size="4.4" fill="#3a6ea5" textLength="6.4" lengthAdjust="spacingAndGlyphs">PA1</text>
<path d="M1084.5 565.4 L1097.9 565.4" fill="none" stroke="#ff6a6a" stroke-width="0.7"/>
<text x="1088.6" y="564.7" font-size="3.78" fill="#444" textLength="4.2" lengthAdjust="spacingAndGlyphs">H8</text>
<text x="1100.7" y="566.8" font-size="4.4" fill="#3a6ea5" textLength="6.4" lengthAdjust="spacingAndGlyphs">PA2</text>
<path d="M1084.5 569.9 L1097.9 569.9" fill="none" stroke="#ff6a6a" stroke-width="0.7"/>
<text x="1088.6" y="569.2" font-size="3.78" fill="#444" textLength="4.2" lengthAdjust="spacingAndGlyphs">G7</text>
<text x="1100.7" y="571.3" font-size="4.4" fill="#3a6ea5" textLength="6.4" lengthAdjust="spacingAndGlyphs">PA3</text>
<path d="M1084.5 574.5 L1097.9 574.5" fill="none" stroke="#ff6a6a" stroke-width="0.7"/>
<text x="1088.6" y="573.8" font-size="3.78" fill="#444" textLength="4.2" lengthAdjust="spacingAndGlyphs">H7</text>
<text x="1100.7" y="575.9" font-size="4.4" fill="#3a6ea5" textLength="6.4" lengthAdjust="spacingAndGlyphs">PA4</text>
<path d="M1084.5 579 L1097.9 579" fill="none" stroke="#ff6a6a" stroke-width="0.7"/>
<text x="1088.6" y="578.3" font-size="3.78" fill="#444" textLength="4.2" lengthAdjust="spacingAndGlyphs">E5</text>
<text x="1100.7" y="580.4" font-size="4.4" fill="#3a6ea5" textLength="6.4" lengthAdjust="spacingAndGlyphs">PA5</text>
<path d="M1084.5 583.5 L1097.9 583.5" fill="none" stroke="#ff6a6a" stroke-width="0.7"/>
<text x="1088.6" y="582.8" font-size="3.78" fill="#444" textLength="4.2" lengthAdjust="spacingAndGlyphs">G5</text>
<text x="1100.7" y="584.9" font-size="4.4" fill="#3a6ea5" textLength="6.4" lengthAdjust="spacingAndGlyphs">PA6</text>
<path d="M1084.5 588.1 L1097.9 588.1" fill="none" stroke="#ff6a6a" stroke-width="0.7"/>
<text x="1088.6" y="587.4" font-size="3.78" fill="#444" textLength="4.2" lengthAdjust="spacingAndGlyphs">G4</text>
<text x="1100.7" y="589.5" font-size="4.4" fill="#3a6ea5" textLength="6.4" lengthAdjust="spacingAndGlyphs">PA7</text>
<path d="M1084.5 592.6 L1097.9 592.6" fill="none" stroke="#ff6a6a" stroke-width="0.7"/>
<text x="1088.6" y="591.9" font-size="3.78" fill="#444" textLength="4.2" lengthAdjust="spacingAndGlyphs">E4</text>
<text x="1100.7" y="594" font-size="4.4" fill="#3a6ea5" textLength="6.4" lengthAdjust="spacingAndGlyphs">PA8</text>
<path d="M1084.5 597.2 L1097.9 597.2" fill="none" stroke="#ff6a6a" stroke-width="0.7"/>
<text x="1088.6" y="596.5" font-size="3.78" fill="#444" textLength="4.2" lengthAdjust="spacingAndGlyphs">E3</text>
<text x="1100.7" y="598.6" font-size="4.4" fill="#3a6ea5" textLength="6.4" lengthAdjust="spacingAndGlyphs">PA9</text>
<path d="M1084.5 601.7 L1097.9 601.7" fill="none" stroke="#ff6a6a" stroke-width="0.7"/>
<text x="1088.6" y="601" font-size="3.78" fill="#444" textLength="4.2" lengthAdjust="spacingAndGlyphs">D3</text>
<text x="1100.7" y="603.1" font-size="4.4" fill="#3a6ea5" textLength="8.3" lengthAdjust="spacingAndGlyphs">PA10</text>
<path d="M1084.5 606.2 L1097.9 606.2" fill="none" stroke="#ff6a6a" stroke-width="0.7"/>
<text x="1088.6" y="605.5" font-size="3.78" fill="#444" textLength="4.2" lengthAdjust="spacingAndGlyphs">C1</text>
<text x="1100.7" y="607.6" font-size="4.4" fill="#3a6ea5" textLength="8.1" lengthAdjust="spacingAndGlyphs">PA11</text>
<path d="M1084.5 610.8 L1097.9 610.8" fill="none" stroke="#ff6a6a" stroke-width="0.7"/>
<text x="1088.6" y="610.1" font-size="3.78" fill="#444" textLength="4.2" lengthAdjust="spacingAndGlyphs">C2</text>
<text x="1100.7" y="612.2" font-size="4.4" fill="#3a6ea5" textLength="8.3" lengthAdjust="spacingAndGlyphs">PA12</text>
<path d="M1084.5 615.3 L1097.9 615.3" fill="none" stroke="#ff6a6a" stroke-width="0.7"/>
<text x="1088.6" y="614.6" font-size="3.78" fill="#444" textLength="4.2" lengthAdjust="spacingAndGlyphs">B4</text>
<text x="1100.7" y="616.7" font-size="4.4" fill="#3a6ea5" textLength="8.3" lengthAdjust="spacingAndGlyphs">PA13</text>
<path d="M1084.5 619.8 L1097.9 619.8" fill="none" stroke="#ff6a6a" stroke-width="0.7"/>
<text x="1088.6" y="619.1" font-size="3.78" fill="#444" textLength="4.2" lengthAdjust="spacingAndGlyphs">B2</text>
<text x="1100.7" y="621.2" font-size="4.4" fill="#3a6ea5" textLength="8.3" lengthAdjust="spacingAndGlyphs">PA14</text>
<path d="M1084.5 624.4 L1097.9 624.4" fill="none" stroke="#ff6a6a" stroke-width="0.7"/>
<text x="1088.6" y="623.7" font-size="3.78" fill="#444" textLength="4.2" lengthAdjust="spacingAndGlyphs">C3</text>
<text x="1100.7" y="625.8" font-size="4.4" fill="#3a6ea5" textLength="8.3" lengthAdjust="spacingAndGlyphs">PA15</text>
<path d="M1084.5 628.9 L1097.9 628.9" fill="none" stroke="#ff6a6a" stroke-width="0.7"/>
<text x="1088.6" y="628.2" font-size="3.78" fill="#444" textLength="4.2" lengthAdjust="spacingAndGlyphs">H4</text>
<text x="1100.7" y="630.3" font-size="4.4" fill="#3a6ea5" textLength="6.6" lengthAdjust="spacingAndGlyphs">PB0</text>
<path d="M1084.5 633.5 L1097.9 633.5" fill="none" stroke="#ff6a6a" stroke-width="0.7"/>
<text x="1088.6" y="632.8" font-size="3.78" fill="#444" textLength="4.2" lengthAdjust="spacingAndGlyphs">F4</text>
<text x="1100.7" y="634.9" font-size="4.4" fill="#3a6ea5" textLength="6.6" lengthAdjust="spacingAndGlyphs">PB1</text>
<path d="M1084.5 638 L1097.9 638" fill="none" stroke="#ff6a6a" stroke-width="0.7"/>
<text x="1088.6" y="637.3" font-size="3.78" fill="#444" textLength="4.2" lengthAdjust="spacingAndGlyphs">H3</text>
<text x="1100.7" y="639.4" font-size="4.4" fill="#3a6ea5" textLength="6.6" lengthAdjust="spacingAndGlyphs">PB2</text>
<path d="M1084.5 642.5 L1097.9 642.5" fill="none" stroke="#ff6a6a" stroke-width="0.7"/>
<text x="1088.6" y="641.8" font-size="3.78" fill="#444" textLength="4.2" lengthAdjust="spacingAndGlyphs">A4</text>
<text x="1100.7" y="643.9" font-size="4.4" fill="#3a6ea5" textLength="6.6" lengthAdjust="spacingAndGlyphs">PB3</text>
<path d="M1084.5 647.1 L1097.9 647.1" fill="none" stroke="#ff6a6a" stroke-width="0.7"/>
<text x="1088.6" y="646.4" font-size="3.78" fill="#444" textLength="4.2" lengthAdjust="spacingAndGlyphs">B4</text>
<text x="1100.7" y="648.5" font-size="4.4" fill="#3a6ea5" textLength="6.6" lengthAdjust="spacingAndGlyphs">PB4</text>
<path d="M1084.5 651.6 L1097.9 651.6" fill="none" stroke="#ff6a6a" stroke-width="0.7"/>
<text x="1088.6" y="650.9" font-size="3.78" fill="#444" textLength="4.2" lengthAdjust="spacingAndGlyphs">A5</text>
<text x="1100.7" y="653" font-size="4.4" fill="#3a6ea5" textLength="6.6" lengthAdjust="spacingAndGlyphs">PB5</text>
<path d="M1084.5 656.2 L1097.9 656.2" fill="none" stroke="#ff6a6a" stroke-width="0.7"/>
<text x="1088.6" y="655.5" font-size="3.78" fill="#444" textLength="4.2" lengthAdjust="spacingAndGlyphs">B5</text>
<text x="1100.7" y="657.6" font-size="4.4" fill="#3a6ea5" textLength="6.6" lengthAdjust="spacingAndGlyphs">PB6</text>
<path d="M1084.5 660.7 L1097.9 660.7" fill="none" stroke="#ff6a6a" stroke-width="0.7"/>
<text x="1088.6" y="660" font-size="3.78" fill="#444" textLength="4.2" lengthAdjust="spacingAndGlyphs">C5</text>
<text x="1100.7" y="662.1" font-size="4.4" fill="#3a6ea5" textLength="6.6" lengthAdjust="spacingAndGlyphs">PB7</text>
<path d="M1084.5 665.2 L1097.9 665.2" fill="none" stroke="#ff6a6a" stroke-width="0.7"/>
<text x="1088.6" y="664.5" font-size="3.78" fill="#444" textLength="4.2" lengthAdjust="spacingAndGlyphs">E4</text>
<text x="1100.7" y="666.6" font-size="4.4" fill="#3a6ea5" textLength="6.6" lengthAdjust="spacingAndGlyphs">PB8</text>
<path d="M1084.5 669.8 L1097.9 669.8" fill="none" stroke="#ff6a6a" stroke-width="0.7"/>
<text x="1088.6" y="669.1" font-size="3.78" fill="#444" textLength="4.2" lengthAdjust="spacingAndGlyphs">B6</text>
<text x="1100.7" y="671.2" font-size="4.4" fill="#3a6ea5" textLength="6.6" lengthAdjust="spacingAndGlyphs">PB9</text>
<path d="M1084.5 674.3 L1097.9 674.3" fill="none" stroke="#ff6a6a" stroke-width="0.7"/>
<text x="1088.6" y="673.6" font-size="3.78" fill="#444" textLength="4.2" lengthAdjust="spacingAndGlyphs">G3</text>
<text x="1100.7" y="675.7" font-size="4.4" fill="#3a6ea5" textLength="8.6" lengthAdjust="spacingAndGlyphs">PB10</text>
<path d="M1084.5 678.9 L1097.9 678.9" fill="none" stroke="#ff6a6a" stroke-width="0.7"/>
<text x="1088.6" y="678.2" font-size="3.78" fill="#444" textLength="4.2" lengthAdjust="spacingAndGlyphs">F5</text>
<text x="1100.7" y="680.3" font-size="4.4" fill="#3a6ea5" textLength="8.3" lengthAdjust="spacingAndGlyphs">PB11</text>
<path d="M1084.5 683.4 L1097.9 683.4" fill="none" stroke="#ff6a6a" stroke-width="0.7"/>
<text x="1088.6" y="682.7" font-size="3.78" fill="#444" textLength="4.2" lengthAdjust="spacingAndGlyphs">G2</text>
<text x="1100.7" y="684.8" font-size="4.4" fill="#3a6ea5" textLength="8.6" lengthAdjust="spacingAndGlyphs">PB12</text>
<path d="M1084.5 687.9 L1097.9 687.9" fill="none" stroke="#ff6a6a" stroke-width="0.7"/>
<text x="1088.6" y="687.2" font-size="3.78" fill="#444" textLength="4.2" lengthAdjust="spacingAndGlyphs">G1</text>
<text x="1100.7" y="689.3" font-size="4.4" fill="#3a6ea5" textLength="8.6" lengthAdjust="spacingAndGlyphs">PB13</text>
<path d="M1084.5 692.5 L1097.9 692.5" fill="none" stroke="#ff6a6a" stroke-width="0.7"/>
<text x="1088.6" y="691.8" font-size="3.78" fill="#444" textLength="4.2" lengthAdjust="spacingAndGlyphs">F2</text>
<text x="1100.7" y="693.9" font-size="4.4" fill="#3a6ea5" textLength="8.6" lengthAdjust="spacingAndGlyphs">PB14</text>
<path d="M1084.5 697 L1097.9 697" fill="none" stroke="#ff6a6a" stroke-width="0.7"/>
<text x="1088.6" y="696.3" font-size="3.78" fill="#444" textLength="4.2" lengthAdjust="spacingAndGlyphs">F1</text>
<text x="1100.7" y="698.4" font-size="4.4" fill="#3a6ea5" textLength="8.6" lengthAdjust="spacingAndGlyphs">PB15</text>
<path d="M1188.5 556.3 L1201.9 556.3" fill="none" stroke="#ff6a6a" stroke-width="0.7"/>
<text x="1192.4" y="555.6" font-size="3.78" fill="#444" textLength="4.2" lengthAdjust="spacingAndGlyphs">E8</text>
<text x="1179.4" y="557.7" font-size="4.4" fill="#3a6ea5" textLength="6.8" lengthAdjust="spacingAndGlyphs">PC0</text>
<path d="M1188.5 560.8 L1201.9 560.8" fill="none" stroke="#ff6a6a" stroke-width="0.7"/>
<text x="1192.4" y="560.1" font-size="3.78" fill="#444" textLength="4.2" lengthAdjust="spacingAndGlyphs">F8</text>
<text x="1179.4" y="562.2" font-size="4.4" fill="#3a6ea5" textLength="6.8" lengthAdjust="spacingAndGlyphs">PC1</text>
<path d="M1188.5 565.4 L1201.9 565.4" fill="none" stroke="#ff6a6a" stroke-width="0.7"/>
<text x="1192.4" y="564.7" font-size="3.78" fill="#444" textLength="4.2" lengthAdjust="spacingAndGlyphs">D6</text>
<text x="1179.4" y="566.8" font-size="4.4" fill="#3a6ea5" textLength="6.8" lengthAdjust="spacingAndGlyphs">PC2</text>
<path d="M1188.5 569.9 L1201.9 569.9" fill="none" stroke="#ff6a6a" stroke-width="0.7"/>
<text x="1192.4" y="569.2" font-size="3.78" fill="#444" textLength="4.2" lengthAdjust="spacingAndGlyphs">H6</text>
<text x="1179.4" y="571.3" font-size="4.4" fill="#3a6ea5" textLength="6.8" lengthAdjust="spacingAndGlyphs">PC3</text>
<path d="M1188.5 574.5 L1201.9 574.5" fill="none" stroke="#ff6a6a" stroke-width="0.7"/>
<text x="1192.4" y="573.8" font-size="3.78" fill="#444" textLength="4.2" lengthAdjust="spacingAndGlyphs">H5</text>
<text x="1179.4" y="575.9" font-size="4.4" fill="#3a6ea5" textLength="6.8" lengthAdjust="spacingAndGlyphs">PC4</text>
<path d="M1188.5 579 L1201.9 579" fill="none" stroke="#ff6a6a" stroke-width="0.7"/>
<text x="1192.4" y="578.3" font-size="3.78" fill="#444" textLength="4.2" lengthAdjust="spacingAndGlyphs">E1</text>
<text x="1179.4" y="580.4" font-size="4.4" fill="#3a6ea5" textLength="6.8" lengthAdjust="spacingAndGlyphs">PC5</text>
<path d="M1188.5 583.5 L1201.9 583.5" fill="none" stroke="#ff6a6a" stroke-width="0.7"/>
<text x="1192.4" y="582.8" font-size="3.78" fill="#444" textLength="4.2" lengthAdjust="spacingAndGlyphs">E2</text>
<text x="1179.4" y="584.9" font-size="4.4" fill="#3a6ea5" textLength="6.8" lengthAdjust="spacingAndGlyphs">PC6</text>
<path d="M1188.5 588.1 L1201.9 588.1" fill="none" stroke="#ff6a6a" stroke-width="0.7"/>
<text x="1192.4" y="587.4" font-size="3.78" fill="#444" textLength="4.2" lengthAdjust="spacingAndGlyphs">E3</text>
<text x="1179.4" y="589.5" font-size="4.4" fill="#3a6ea5" textLength="6.8" lengthAdjust="spacingAndGlyphs">PC7</text>
<path d="M1188.5 592.6 L1201.9 592.6" fill="none" stroke="#ff6a6a" stroke-width="0.7"/>
<text x="1192.4" y="591.9" font-size="3.78" fill="#444" textLength="4.2" lengthAdjust="spacingAndGlyphs">D1</text>
<text x="1179.4" y="594" font-size="4.4" fill="#3a6ea5" textLength="6.8" lengthAdjust="spacingAndGlyphs">PC8</text>
<path d="M1188.5 597.2 L1201.9 597.2" fill="none" stroke="#ff6a6a" stroke-width="0.7"/>
<text x="1192.4" y="596.5" font-size="3.78" fill="#444" textLength="4.2" lengthAdjust="spacingAndGlyphs">A2</text>
<text x="1179.4" y="598.6" font-size="4.4" fill="#3a6ea5" textLength="6.8" lengthAdjust="spacingAndGlyphs">PC9</text>
<path d="M1188.5 601.7 L1201.9 601.7" fill="none" stroke="#ff6a6a" stroke-width="0.7"/>
<text x="1192.4" y="601" font-size="3.78" fill="#444" textLength="4.2" lengthAdjust="spacingAndGlyphs">B3</text>
<text x="1177.4" y="603.1" font-size="4.4" fill="#3a6ea5" textLength="8.8" lengthAdjust="spacingAndGlyphs">PC10</text>
<path d="M1188.5 606.2 L1201.9 606.2" fill="none" stroke="#ff6a6a" stroke-width="0.7"/>
<text x="1192.4" y="605.5" font-size="3.78" fill="#444" textLength="4.2" lengthAdjust="spacingAndGlyphs">C4</text>
<text x="1177.7" y="607.6" font-size="4.4" fill="#3a6ea5" textLength="8.5" lengthAdjust="spacingAndGlyphs">PC11</text>
<path d="M1188.5 610.8 L1201.9 610.8" fill="none" stroke="#ff6a6a" stroke-width="0.7"/>
<text x="1192.4" y="610.1" font-size="3.78" fill="#444" textLength="4.2" lengthAdjust="spacingAndGlyphs">C6</text>
<text x="1177.4" y="612.2" font-size="4.4" fill="#3a6ea5" textLength="8.8" lengthAdjust="spacingAndGlyphs">PC12</text>
<path d="M1188.5 615.3 L1201.9 615.3" fill="none" stroke="#ff6a6a" stroke-width="0.7"/>
<text x="1192.4" y="614.6" font-size="3.78" fill="#444" textLength="4.2" lengthAdjust="spacingAndGlyphs">B8</text>
<text x="1177.4" y="616.7" font-size="4.4" fill="#3a6ea5" textLength="8.8" lengthAdjust="spacingAndGlyphs">PC14</text>
<path d="M1188.5 619.8 L1201.9 619.8" fill="none" stroke="#ff6a6a" stroke-width="0.7"/>
<text x="1192.4" y="619.1" font-size="3.78" fill="#444" textLength="4.2" lengthAdjust="spacingAndGlyphs">B7</text>
<text x="1177.4" y="621.2" font-size="4.4" fill="#3a6ea5" textLength="8.8" lengthAdjust="spacingAndGlyphs">PC15</text>
<path d="M1188.5 628.9 L1201.9 628.9" fill="none" stroke="#ff6a6a" stroke-width="0.7"/>
<text x="1192.4" y="628.2" font-size="3.78" fill="#444" textLength="4.2" lengthAdjust="spacingAndGlyphs">A3</text>
<text x="1179.4" y="630.3" font-size="4.4" fill="#3a6ea5" textLength="6.8" lengthAdjust="spacingAndGlyphs">PD2</text>
<path d="M1188.5 642.5 L1201.9 642.5" fill="none" stroke="#ff6a6a" stroke-width="0.7"/>
<text x="1192.4" y="641.8" font-size="3.78" fill="#444" textLength="4.2" lengthAdjust="spacingAndGlyphs">C7</text>
<text x="1176.6" y="643.9" font-size="4.4" fill="#3a6ea5" textLength="9.6" lengthAdjust="spacingAndGlyphs">NRST</text>
<path d="M1188.5 647.1 L1201.9 647.1" fill="none" stroke="#ff6a6a" stroke-width="0.7"/>
<text x="1192.4" y="646.4" font-size="3.78" fill="#444" textLength="4.2" lengthAdjust="spacingAndGlyphs">A5</text>
<text x="1174.3" y="648.5" font-size="4.4" fill="#3a6ea5" textLength="11.9" lengthAdjust="spacingAndGlyphs">BOOT0</text>
<path d="M1188.5 651.6 L1201.9 651.6" fill="none" stroke="#ff6a6a" stroke-width="0.7"/>
<text x="1192.4" y="650.9" font-size="3.78" fill="#444" textLength="4.2" lengthAdjust="spacingAndGlyphs">F7</text>
<text x="1177.8" y="653" font-size="4.4" fill="#3a6ea5" textLength="8.4" lengthAdjust="spacingAndGlyphs">Vref+</text>
<path d="M1188.5 656.2 L1201.9 656.2" fill="none" stroke="#ff6a6a" stroke-width="0.7"/>
<text x="1192.4" y="655.5" font-size="3.78" fill="#444" textLength="4.2" lengthAdjust="spacingAndGlyphs">C8</text>
<text x="1179" y="657.6" font-size="4.4" fill="#3a6ea5" textLength="7.2" lengthAdjust="spacingAndGlyphs">Vbat</text>
<path d="M1188.5 683.4 L1201.9 683.4" fill="none" stroke="#ff6a6a" stroke-width="0.7"/>
<text x="1192.4" y="682.7" font-size="3.78" fill="#444" textLength="4.2" lengthAdjust="spacingAndGlyphs">D8</text>
<text x="1173.1" y="684.8" font-size="4.4" fill="#3a6ea5" textLength="13.1" lengthAdjust="spacingAndGlyphs">OSC_IN</text>
<path d="M1188.5 687.9 L1201.9 687.9" fill="none" stroke="#ff6a6a" stroke-width="0.7"/>
<text x="1192.4" y="687.2" font-size="3.78" fill="#444" textLength="4.2" lengthAdjust="spacingAndGlyphs">D7</text>
<text x="1169.2" y="689.3" font-size="4.4" fill="#3a6ea5" textLength="17" lengthAdjust="spacingAndGlyphs">OSC_OUT</text>
<text x="1135.4" y="566" font-size="4.39" fill="#3a6ea5" transform="rotate(-90 1135.4 566)" textLength="11" lengthAdjust="spacingAndGlyphs">VDD_4</text>
<text x="1135.4" y="698" font-size="4.39" fill="#3a6ea5" transform="rotate(-90 1135.4 698)" textLength="10.1" lengthAdjust="spacingAndGlyphs">VSS_4</text>
<path d="M1134.2 700.6 L1134.2 712" fill="none" stroke="#ff6a6a" stroke-width="0.7"/>
<text x="1133.6" y="549.6" font-size="3.17" fill="#444" transform="rotate(-90 1133.6 549.6)" textLength="3.8" lengthAdjust="spacingAndGlyphs">G8</text>
<text x="1133.6" y="709.6" font-size="3.17" fill="#444" transform="rotate(-90 1133.6 709.6)" textLength="3.8" lengthAdjust="spacingAndGlyphs">F3</text>
<text x="1139.9" y="566" font-size="4.39" fill="#3a6ea5" transform="rotate(-90 1139.9 566)" textLength="11" lengthAdjust="spacingAndGlyphs">VDD_3</text>
<text x="1139.9" y="698" font-size="4.39" fill="#3a6ea5" transform="rotate(-90 1139.9 698)" textLength="10.1" lengthAdjust="spacingAndGlyphs">VSS_3</text>
<path d="M1138.7 700.6 L1138.7 712" fill="none" stroke="#ff6a6a" stroke-width="0.7"/>
<text x="1138.1" y="549.6" font-size="3.17" fill="#444" transform="rotate(-90 1138.1 549.6)" textLength="3.8" lengthAdjust="spacingAndGlyphs">G8</text>
<text x="1138.1" y="709.6" font-size="3.17" fill="#444" transform="rotate(-90 1138.1 709.6)" textLength="3.8" lengthAdjust="spacingAndGlyphs">F3</text>
<text x="1144.4" y="566" font-size="4.39" fill="#3a6ea5" transform="rotate(-90 1144.4 566)" textLength="11" lengthAdjust="spacingAndGlyphs">VDD_2</text>
<text x="1144.4" y="698" font-size="4.39" fill="#3a6ea5" transform="rotate(-90 1144.4 698)" textLength="23.7" lengthAdjust="spacingAndGlyphs">BYPASS/VSS_2</text>
<path d="M1143.2 700.6 L1143.2 712" fill="none" stroke="#ff6a6a" stroke-width="0.7"/>
<text x="1142.6" y="549.6" font-size="3.17" fill="#444" transform="rotate(-90 1142.6 549.6)" textLength="3.8" lengthAdjust="spacingAndGlyphs">G8</text>
<text x="1142.6" y="709.6" font-size="3.17" fill="#444" transform="rotate(-90 1142.6 709.6)" textLength="3.8" lengthAdjust="spacingAndGlyphs">F3</text>
<text x="1148.8" y="566" font-size="4.39" fill="#3a6ea5" transform="rotate(-90 1148.8 566)" textLength="11" lengthAdjust="spacingAndGlyphs">VDD_1</text>
<text x="1148.8" y="698" font-size="4.39" fill="#3a6ea5" transform="rotate(-90 1148.8 698)" textLength="10.1" lengthAdjust="spacingAndGlyphs">VSS_1</text>
<path d="M1147.6 700.6 L1147.6 712" fill="none" stroke="#ff6a6a" stroke-width="0.7"/>
<text x="1147" y="549.6" font-size="3.17" fill="#444" transform="rotate(-90 1147 549.6)" textLength="3.8" lengthAdjust="spacingAndGlyphs">G8</text>
<text x="1147" y="709.6" font-size="3.17" fill="#444" transform="rotate(-90 1147 709.6)" textLength="3.8" lengthAdjust="spacingAndGlyphs">F3</text>
<text x="1153.7" y="566" font-size="4.39" fill="#3a6ea5" transform="rotate(-90 1153.7 566)" textLength="9.5" lengthAdjust="spacingAndGlyphs">VDDA</text>
<text x="1153.7" y="698" font-size="4.39" fill="#3a6ea5" transform="rotate(-90 1153.7 698)" textLength="8.6" lengthAdjust="spacingAndGlyphs">VSSA</text>
<path d="M1152.5 700.6 L1152.5 712" fill="none" stroke="#ff6a6a" stroke-width="0.7"/>
<text x="1151.9" y="549.6" font-size="3.17" fill="#444" transform="rotate(-90 1151.9 549.6)" textLength="3.8" lengthAdjust="spacingAndGlyphs">G8</text>
<text x="1151.9" y="709.6" font-size="3.17" fill="#444" transform="rotate(-90 1151.9 709.6)" textLength="3.8" lengthAdjust="spacingAndGlyphs">F3</text>
<path d="M1133.8 712 L1133.8 718.7 L1152.5 718.7 L1152.5 712" fill="none" stroke="#a34d7d" stroke-width="0.7"/>
<path d="M1134.2 712 L1134.2 718.7" fill="none" stroke="#a34d7d" stroke-width="0.7"/>
<rect x="1133.1" y="717.6" width="2.200" height="2.200" fill="#ff00ff"/>
<path d="M1138.7 712 L1138.7 718.7" fill="none" stroke="#a34d7d" stroke-width="0.7"/>
<rect x="1137.6" y="717.6" width="2.200" height="2.200" fill="#ff00ff"/>
<path d="M1143.2 712 L1143.2 718.7" fill="none" stroke="#a34d7d" stroke-width="0.7"/>
<rect x="1142.1" y="717.6" width="2.200" height="2.200" fill="#ff00ff"/>
<path d="M1147.6 712 L1147.6 718.7" fill="none" stroke="#a34d7d" stroke-width="0.7"/>
<rect x="1146.5" y="717.6" width="2.200" height="2.200" fill="#ff00ff"/>
<path d="M1133.8 718.7 L1133.8 723.3" fill="none" stroke="#ff6a6a" stroke-width="0.7"/>
<path d="M1129.2 723.3 L1138.4 723.3 L1133.8 727.9 L1129.2 723.3" fill="none" stroke="#ff0000" stroke-width="0.8"/>
<text x="1156.8" y="704.4" font-size="4.15" fill="#000080" font-weight="700" textLength="76" lengthAdjust="spacingAndGlyphs">STM32F103RCY6TRC28 WLCSP 64P MCU</text>
<text x="1156.8" y="708.8" font-size="4.15" fill="#000" font-weight="700" textLength="24.2" lengthAdjust="spacingAndGlyphs">SA00005P240</text>
<text x="1156.8" y="713.2" font-size="4.15" fill="#000" font-weight="700" textLength="98" lengthAdjust="spacingAndGlyphs">S IC STM32F103RCY6TRC28 WLCSP 64P MCU V5MM1</text>
<path d="M944.1 556.3 L989.5 556.3" fill="none" stroke="#a34d7d" stroke-width="0.7"/>
<path d="M989.5 556.3 L993.9 556.3" fill="none" stroke="#ff6a6a" stroke-width="0.7"/>
<path d="M993.9 556.3 L995.1 557.8 L997.4 554.8 L999.7 557.8 L1002 554.8 L1004.3 557.8 L1006.6 554.8 L1007.8 556.3" fill="none" stroke="#0000ff" stroke-width="0.8"/>
<path d="M1007.8 556.3 L1012.2 556.3" fill="none" stroke="#ff6a6a" stroke-width="0.7"/>
<path d="M1012.2 556.3 L1084.5 556.3" fill="none" stroke="#a34d7d" stroke-width="0.7"/>
<text x="949" y="555.5" font-size="4.39" fill="#f23c3c" textLength="23.5" lengthAdjust="spacingAndGlyphs">ACCEL_INT1</text>
<text x="976.1" y="555.5" font-size="4.15" fill="#000080" font-weight="700" textLength="6.4" lengthAdjust="spacingAndGlyphs">R30</text>
<text x="989" y="555.5" font-size="3.9" fill="#444" textLength="1.8" lengthAdjust="spacingAndGlyphs">1</text>
<text x="993.9" y="555.8" font-size="4.27" fill="#000" font-weight="700" textLength="14" lengthAdjust="spacingAndGlyphs">INTEL@</text>
<text x="1011.7" y="555.5" font-size="3.9" fill="#444" textLength="1.8" lengthAdjust="spacingAndGlyphs">2</text>
<text x="1016.2" y="555.5" font-size="4.15" fill="#000080" font-weight="700" textLength="20.4" lengthAdjust="spacingAndGlyphs">0_0402_5%</text>
<text x="1045" y="555.5" font-size="4.39" fill="#f23c3c" textLength="15" lengthAdjust="spacingAndGlyphs">HUB_PA0</text>
<path d="M944.1 560.8 L989.5 560.8" fill="none" stroke="#a34d7d" stroke-width="0.7"/>
<path d="M989.5 560.8 L993.9 560.8" fill="none" stroke="#ff6a6a" stroke-width="0.7"/>
<path d="M993.9 560.8 L995.1 562.3 L997.4 559.3 L999.7 562.3 L1002 559.3 L1004.3 562.3 L1006.6 559.3 L1007.8 560.8" fill="none" stroke="#0000ff" stroke-width="0.8"/>
<path d="M1007.8 560.8 L1012.2 560.8" fill="none" stroke="#ff6a6a" stroke-width="0.7"/>
<path d="M1012.2 560.8 L1084.5 560.8" fill="none" stroke="#a34d7d" stroke-width="0.7"/>
<text x="949" y="560" font-size="4.39" fill="#f23c3c" textLength="15.1" lengthAdjust="spacingAndGlyphs">ALS_INT</text>
<text x="976.1" y="560" font-size="4.15" fill="#000080" font-weight="700" textLength="6.4" lengthAdjust="spacingAndGlyphs">R29</text>
<text x="989" y="560" font-size="3.9" fill="#444" textLength="1.8" lengthAdjust="spacingAndGlyphs">1</text>
<text x="993.9" y="560.3" font-size="4.27" fill="#000" font-weight="700" textLength="14" lengthAdjust="spacingAndGlyphs">INTEL@</text>
<text x="1011.7" y="560" font-size="3.9" fill="#444" textLength="1.8" lengthAdjust="spacingAndGlyphs">2</text>
<text x="1016.2" y="560" font-size="4.15" fill="#000080" font-weight="700" textLength="20.4" lengthAdjust="spacingAndGlyphs">0_0402_5%</text>
<text x="1045" y="560" font-size="4.39" fill="#f23c3c" textLength="15" lengthAdjust="spacingAndGlyphs">HUB_PA1</text>
<path d="M944.1 565.4 L989.5 565.4" fill="none" stroke="#a34d7d" stroke-width="0.7"/>
<path d="M989.5 565.4 L993.9 565.4" fill="none" stroke="#ff6a6a" stroke-width="0.7"/>
<path d="M993.9 565.4 L995.1 566.9 L997.4 563.9 L999.7 566.9 L1002 563.9 L1004.3 566.9 L1006.6 563.9 L1007.8 565.4" fill="none" stroke="#0000ff" stroke-width="0.8"/>
<path d="M1007.8 565.4 L1012.2 565.4" fill="none" stroke="#ff6a6a" stroke-width="0.7"/>
<path d="M1012.2 565.4 L1084.5 565.4" fill="none" stroke="#a34d7d" stroke-width="0.7"/>
<text x="949" y="564.6" font-size="4.39" fill="#f23c3c" textLength="18.5" lengthAdjust="spacingAndGlyphs">GYRO_INT</text>
<text x="976.1" y="564.6" font-size="4.15" fill="#000080" font-weight="700" textLength="6.4" lengthAdjust="spacingAndGlyphs">R31</text>
<text x="989" y="564.6" font-size="3.9" fill="#444" textLength="1.8" lengthAdjust="spacingAndGlyphs">1</text>
<text x="993.9" y="564.9" font-size="4.27" fill="#000" font-weight="700" textLength="14" lengthAdjust="spacingAndGlyphs">INTEL@</text>
<text x="1011.7" y="564.6" font-size="3.9" fill="#444" textLength="1.8" lengthAdjust="spacingAndGlyphs">2</text>
<text x="1016.2" y="564.6" font-size="4.15" fill="#000080" font-weight="700" textLength="20.4" lengthAdjust="spacingAndGlyphs">0_0402_5%</text>
<text x="1045" y="564.6" font-size="4.39" fill="#f23c3c" textLength="15" lengthAdjust="spacingAndGlyphs">HUB_PA2</text>
<path d="M944.1 579 L989.5 579" fill="none" stroke="#a34d7d" stroke-width="0.7"/>
<path d="M989.5 579 L993.9 579" fill="none" stroke="#ff6a6a" stroke-width="0.7"/>
<path d="M993.9 579 L995.1 580.5 L997.4 577.5 L999.7 580.5 L1002 577.5 L1004.3 580.5 L1006.6 577.5 L1007.8 579" fill="none" stroke="#0000ff" stroke-width="0.8"/>
<path d="M1007.8 579 L1012.2 579" fill="none" stroke="#ff6a6a" stroke-width="0.7"/>
<path d="M1012.2 579 L1084.5 579" fill="none" stroke="#a34d7d" stroke-width="0.7"/>
<text x="949" y="578.2" font-size="4.39" fill="#f23c3c" textLength="22.4" lengthAdjust="spacingAndGlyphs">MAG_DRDY</text>
<text x="976.1" y="578.2" font-size="4.15" fill="#000080" font-weight="700" textLength="6.4" lengthAdjust="spacingAndGlyphs">R32</text>
<text x="989" y="578.2" font-size="3.9" fill="#444" textLength="1.8" lengthAdjust="spacingAndGlyphs">1</text>
<text x="993.9" y="578.5" font-size="4.27" fill="#000" font-weight="700" textLength="14" lengthAdjust="spacingAndGlyphs">INTEL@</text>
<text x="1011.7" y="578.2" font-size="3.9" fill="#444" textLength="1.8" lengthAdjust="spacingAndGlyphs">2</text>
<text x="1016.2" y="578.2" font-size="4.15" fill="#000080" font-weight="700" textLength="20.4" lengthAdjust="spacingAndGlyphs">0_0402_5%</text>
<text x="1045" y="578.2" font-size="4.39" fill="#f23c3c" textLength="15" lengthAdjust="spacingAndGlyphs">HUB_PA5</text>
<path d="M944.1 583.5 L989.5 583.5" fill="none" stroke="#a34d7d" stroke-width="0.7"/>
<path d="M989.5 583.5 L993.9 583.5" fill="none" stroke="#ff6a6a" stroke-width="0.7"/>
<path d="M993.9 583.5 L995.1 585 L997.4 582 L999.7 585 L1002 582 L1004.3 585 L1006.6 582 L1007.8 583.5" fill="none" stroke="#0000ff" stroke-width="0.8"/>
<path d="M1007.8 583.5 L1012.2 583.5" fill="none" stroke="#ff6a6a" stroke-width="0.7"/>
<path d="M1012.2 583.5 L1084.5 583.5" fill="none" stroke="#a34d7d" stroke-width="0.7"/>
<text x="949" y="582.7" font-size="4.39" fill="#f23c3c" textLength="24.5" lengthAdjust="spacingAndGlyphs">GYRO_DRDY</text>
<text x="976.1" y="582.7" font-size="4.15" fill="#000080" font-weight="700" textLength="6.4" lengthAdjust="spacingAndGlyphs">R33</text>
<text x="989" y="582.7" font-size="3.9" fill="#444" textLength="1.8" lengthAdjust="spacingAndGlyphs">1</text>
<text x="993.9" y="583" font-size="4.27" fill="#000" font-weight="700" textLength="14" lengthAdjust="spacingAndGlyphs">INTEL@</text>
<text x="1011.7" y="582.7" font-size="3.9" fill="#444" textLength="1.8" lengthAdjust="spacingAndGlyphs">2</text>
<text x="1016.2" y="582.7" font-size="4.15" fill="#000080" font-weight="700" textLength="20.4" lengthAdjust="spacingAndGlyphs">0_0402_5%</text>
<text x="1045" y="582.7" font-size="4.39" fill="#f23c3c" textLength="15" lengthAdjust="spacingAndGlyphs">HUB_PA6</text>
<path d="M944.1 592.6 L989.5 592.6" fill="none" stroke="#a34d7d" stroke-width="0.7"/>
<path d="M989.5 592.6 L993.9 592.6" fill="none" stroke="#ff6a6a" stroke-width="0.7"/>
<path d="M993.9 592.6 L995.1 594.1 L997.4 591.1 L999.7 594.1 L1002 591.1 L1004.3 594.1 L1006.6 591.1 L1007.8 592.6" fill="none" stroke="#0000ff" stroke-width="0.8"/>
<path d="M1007.8 592.6 L1012.2 592.6" fill="none" stroke="#ff6a6a" stroke-width="0.7"/>
<path d="M1012.2 592.6 L1084.5 592.6" fill="none" stroke="#a34d7d" stroke-width="0.7"/>
<text x="949" y="591.8" font-size="4.39" fill="#f23c3c" textLength="23.5" lengthAdjust="spacingAndGlyphs">ACCEL_INT2</text>
<text x="976.1" y="591.8" font-size="4.15" fill="#000080" font-weight="700" textLength="6.4" lengthAdjust="spacingAndGlyphs">R36</text>
<text x="989" y="591.8" font-size="3.9" fill="#444" textLength="1.8" lengthAdjust="spacingAndGlyphs">1</text>
<text x="993.9" y="592.1" font-size="4.27" fill="#000" font-weight="700" textLength="14" lengthAdjust="spacingAndGlyphs">INTEL@</text>
<text x="1011.7" y="591.8" font-size="3.9" fill="#444" textLength="1.8" lengthAdjust="spacingAndGlyphs">2</text>
<text x="1016.2" y="591.8" font-size="4.15" fill="#000080" font-weight="700" textLength="20.4" lengthAdjust="spacingAndGlyphs">0_0402_5%</text>
<text x="1045" y="591.8" font-size="4.39" fill="#f23c3c" textLength="15" lengthAdjust="spacingAndGlyphs">HUB_PA8</text>
<path d="M1039.7 569.9 L1084.5 569.9" fill="none" stroke="#a34d7d" stroke-width="0.7"/>
<text x="1045" y="569.1" font-size="4.39" fill="#f23c3c" textLength="15" lengthAdjust="spacingAndGlyphs">HUB_PA3</text>
<path d="M1039.7 574.5 L1084.5 574.5" fill="none" stroke="#a34d7d" stroke-width="0.7"/>
<text x="1045" y="573.7" font-size="4.39" fill="#f23c3c" textLength="15" lengthAdjust="spacingAndGlyphs">HUB_PA4</text>
<path d="M1039.7 597.2 L1084.5 597.2" fill="none" stroke="#a34d7d" stroke-width="0.7"/>
<text x="1045" y="596.4" font-size="4.39" fill="#f23c3c" textLength="15" lengthAdjust="spacingAndGlyphs">HUB_PA9</text>
<path d="M1039.7 601.7 L1084.5 601.7" fill="none" stroke="#a34d7d" stroke-width="0.7"/>
<text x="1045" y="600.9" font-size="4.39" fill="#f23c3c" textLength="16.9" lengthAdjust="spacingAndGlyphs">HUB_PA10</text>
<path d="M1039.7 606.2 L1084.5 606.2" fill="none" stroke="#a34d7d" stroke-width="0.7"/>
<text x="1045" y="605.4" font-size="4.39" fill="#f23c3c" textLength="25.7" lengthAdjust="spacingAndGlyphs">USB20_N6_HUB</text>
<path d="M1039.7 610.8 L1084.5 610.8" fill="none" stroke="#a34d7d" stroke-width="0.7"/>
<text x="1045" y="610" font-size="4.39" fill="#f23c3c" textLength="25.5" lengthAdjust="spacingAndGlyphs">USB20_P6_HUB</text>
<path d="M1039.7 615.3 L1084.5 615.3" fill="none" stroke="#a34d7d" stroke-width="0.7"/>
<text x="1045" y="614.5" font-size="4.39" fill="#f23c3c" textLength="26" lengthAdjust="spacingAndGlyphs">HUB_DBG_PA13</text>
<path d="M1039.7 619.8 L1084.5 619.8" fill="none" stroke="#a34d7d" stroke-width="0.7"/>
<text x="1045" y="619" font-size="4.39" fill="#f23c3c" textLength="26" lengthAdjust="spacingAndGlyphs">HUB_DBG_PA14</text>
<path d="M1039.7 624.4 L1084.5 624.4" fill="none" stroke="#a34d7d" stroke-width="0.7"/>
<text x="1045" y="623.6" font-size="4.39" fill="#f23c3c" textLength="26" lengthAdjust="spacingAndGlyphs">HUB_DBG_PA15</text>
<path d="M1039.7 638 L1084.5 638" fill="none" stroke="#a34d7d" stroke-width="0.7"/>
<text x="1045" y="637.2" font-size="4.39" fill="#f23c3c" textLength="20.3" lengthAdjust="spacingAndGlyphs">HUB_BOOT1</text>
<path d="M1039.7 642.5 L1084.5 642.5" fill="none" stroke="#a34d7d" stroke-width="0.7"/>
<text x="1045" y="641.7" font-size="4.39" fill="#f23c3c" textLength="24.4" lengthAdjust="spacingAndGlyphs">HUB_DBG_PB3</text>
<path d="M1039.7 647.1 L1084.5 647.1" fill="none" stroke="#a34d7d" stroke-width="0.7"/>
<text x="1045" y="646.3" font-size="4.39" fill="#f23c3c" textLength="24.4" lengthAdjust="spacingAndGlyphs">HUB_DBG_PB4</text>
<path d="M1012 628.9 L1084.5 628.9" fill="none" stroke="#a34d7d" stroke-width="0.7"/>
<text x="1045" y="628.1" font-size="4.39" fill="#f23c3c" textLength="15.3" lengthAdjust="spacingAndGlyphs">HUB_PB0</text>
<path d="M1012 633.5 L1084.5 633.5" fill="none" stroke="#a34d7d" stroke-width="0.7"/>
<text x="1045" y="632.7" font-size="4.39" fill="#f23c3c" textLength="15.3" lengthAdjust="spacingAndGlyphs">HUB_PB1</text>
<path d="M1012 697 L1084.5 697" fill="none" stroke="#a34d7d" stroke-width="0.7"/>
<text x="1045" y="696.2" font-size="4.39" fill="#f23c3c" textLength="17.1" lengthAdjust="spacingAndGlyphs">HUB_PB15</text>
<text x="908" y="562.1" font-size="4.27" fill="#444" textLength="15.1" lengthAdjust="spacingAndGlyphs">ALS_INT</text>
<path d="M930 558.6 L940.3 558.6 L943.9 560.8 L940.3 563 L930 563 L930 558.6" fill="none" stroke="#ff6a6a" stroke-width="0.8"/>
<circle cx="1029.800" cy="596.8" r="2.100" fill="#0000ff"/>
<path d="M1032 596.8 L1039.7 596.8" fill="none" stroke="#ff0000" stroke-width="0.8"/>
<path d="M1035.6 595.4 L1035.6 598.2" fill="none" stroke="#ff0000" stroke-width="0.7"/>
<text x="1021.2" y="599.8" font-size="4.15" fill="#000080" font-weight="700" textLength="4.2" lengthAdjust="spacingAndGlyphs">T1</text>
<text x="1021.2" y="605" font-size="4.15" fill="#000080" font-weight="700" textLength="12.2" lengthAdjust="spacingAndGlyphs">PAD @</text>
<path d="M1025.6 656.2 L1084.5 656.2" fill="none" stroke="#a34d7d" stroke-width="0.7"/>
<text x="1034.5" y="655.4" font-size="4.39" fill="#f23c3c" textLength="38.8" lengthAdjust="spacingAndGlyphs">I2C_1_SCL_SENSOR</text>
<path d="M1012.4 656.2 L1015.6 654 L1025.6 654 L1025.6 658.4 L1015.6 658.4 L1012.4 656.2" fill="none" stroke="#ff6a6a" stroke-width="0.8"/>
<text x="962.6" y="656.4" font-size="4.27" fill="#444" textLength="38.3" lengthAdjust="spacingAndGlyphs">I2C_1_SCL_SENSOR</text>
<path d="M1025.6 660.7 L1084.5 660.7" fill="none" stroke="#a34d7d" stroke-width="0.7"/>
<text x="1034.5" y="659.9" font-size="4.39" fill="#f23c3c" textLength="38.8" lengthAdjust="spacingAndGlyphs">I2C_1_SDA_SENSOR</text>
<path d="M1012.4 660.7 L1015.6 658.5 L1025.6 658.5 L1025.6 662.9 L1015.6 662.9 L1012.4 660.7" fill="none" stroke="#ff6a6a" stroke-width="0.8"/>
<text x="964.7" y="661.5" font-size="4.27" fill="#444" textLength="38.3" lengthAdjust="spacingAndGlyphs">I2C_1_SDA_SENSOR</text>
<text x="908" y="655.4" font-size="5.8" fill="#8585ff" class="m" textLength="30.9" lengthAdjust="spacingAndGlyphs">TO Sensor</text>
<text x="908" y="661.7" font-size="5.8" fill="#8585ff" class="m" textLength="34" lengthAdjust="spacingAndGlyphs">(HUB Host)</text>
<text x="867.1" y="691.6" font-size="5.8" fill="#8585ff" class="m" textLength="45.2" lengthAdjust="spacingAndGlyphs">To PCH GPIO44</text>
<text x="915.1" y="693.6" font-size="4.27" fill="#444" textLength="28" lengthAdjust="spacingAndGlyphs">HUB_DFU_EN#</text>
<path d="M948.3 690.3 L958.4 690.3 L962 692.5 L958.4 694.7 L948.3 694.7 L948.3 690.3" fill="none" stroke="#ff6a6a" stroke-width="0.8"/>
<path d="M962 692.5 L993.9 692.5" fill="none" stroke="#a34d7d" stroke-width="0.7"/>
<path d="M993.9 692.5 L998.3 692.5" fill="none" stroke="#ff6a6a" stroke-width="0.7"/>
<path d="M998.3 692.5 L999.5 694 L1001.8 691 L1004.2 694 L1006.5 691 L1008.9 694 L1011.2 691 L1012.4 692.5" fill="none" stroke="#0000ff" stroke-width="0.8"/>
<path d="M1012.4 692.5 L1016.6 692.5" fill="none" stroke="#ff6a6a" stroke-width="0.7"/>
<path d="M1016.6 692.5 L1084.5 692.5" fill="none" stroke="#a34d7d" stroke-width="0.7"/>
<text x="980.3" y="691.7" font-size="4.15" fill="#000080" font-weight="700" textLength="6.8" lengthAdjust="spacingAndGlyphs">R48</text>
<text x="993.5" y="691.7" font-size="3.9" fill="#444" textLength="1.8" lengthAdjust="spacingAndGlyphs">1</text>
<text x="998.3" y="692" font-size="4.27" fill="#000" font-weight="700" textLength="14" lengthAdjust="spacingAndGlyphs">INTEL@</text>
<text x="1015.8" y="691.7" font-size="3.9" fill="#444" textLength="1.8" lengthAdjust="spacingAndGlyphs">2</text>
<text x="1020.8" y="691.7" font-size="4.15" fill="#000080" font-weight="700" textLength="19.6" lengthAdjust="spacingAndGlyphs">0_0402_5%</text>
<text x="1045" y="691.7" font-size="4.39" fill="#f23c3c" textLength="31.9" lengthAdjust="spacingAndGlyphs">HUB_DFU_EN#_R</text>
<path d="M1201.9 615.3 L1247 615.3" fill="none" stroke="#a34d7d" stroke-width="0.7"/>
<text x="1212" y="614.5" font-size="4.39" fill="#f23c3c" textLength="17.9" lengthAdjust="spacingAndGlyphs">HUB_32_IN</text>
<path d="M1201.9 619.8 L1247 619.8" fill="none" stroke="#a34d7d" stroke-width="0.7"/>
<text x="1212" y="619" font-size="4.39" fill="#f23c3c" textLength="21.6" lengthAdjust="spacingAndGlyphs">HUB_32_OUT</text>
<path d="M1201.9 683.4 L1247 683.4" fill="none" stroke="#a34d7d" stroke-width="0.7"/>
<text x="1212" y="682.6" font-size="4.39" fill="#f23c3c" textLength="21" lengthAdjust="spacingAndGlyphs">HUB_XCLKIN</text>
<path d="M1201.9 687.9 L1247 687.9" fill="none" stroke="#a34d7d" stroke-width="0.7"/>
<text x="1212" y="687.1" font-size="4.39" fill="#f23c3c" textLength="24.7" lengthAdjust="spacingAndGlyphs">HUB_XCLKOUT</text>
<path d="M1201.9 642.5 L1247 642.5" fill="none" stroke="#a34d7d" stroke-width="0.7"/>
<text x="1207.6" y="641.7" font-size="4.39" fill="#f23c3c" textLength="17.5" lengthAdjust="spacingAndGlyphs">HUB_RST#</text>
<path d="M1201.9 647.1 L1247 647.1" fill="none" stroke="#a34d7d" stroke-width="0.7"/>
<text x="1207.6" y="646.3" font-size="4.39" fill="#f23c3c" textLength="20.3" lengthAdjust="spacingAndGlyphs">HUB_BOOT0</text>
<path d="M1201.9 651.6 L1298.8 651.6" fill="none" stroke="#d9a9c2" stroke-width="1.3"/>
<rect x="1291.3" y="650.5" width="2.200" height="2.200" fill="#ff00ff"/>
<circle cx="1299.9" cy="651.6" r=".95" fill="#fff" stroke="#ff0000" stroke-width=".55"/>
<text x="1302" y="652.9" font-size="4.27" fill="#444" textLength="16.3" lengthAdjust="spacingAndGlyphs">+3V_HUB</text>
<path d="M1201.9 656.2 L1238.5 656.2" fill="none" stroke="#a34d7d" stroke-width="0.7"/>
<rect x="1214.3" y="655.1" width="2.200" height="2.200" fill="#ff00ff"/>
<path d="M1215.4 656.2 L1215.4 673.5" fill="none" stroke="#a34d7d" stroke-width="0.7"/>
<rect x="1214.3" y="663.3" width="2.200" height="2.200" fill="#ff00ff"/>
<path d="M1238.5 656.2 L1243 656.2" fill="none" stroke="#ff6a6a" stroke-width="0.7"/>
<path d="M1243 656.2 L1244.1 657.7 L1246.3 654.7 L1248.5 657.7 L1250.8 654.7 L1253 657.7 L1255.2 654.7 L1256.3 656.2" fill="none" stroke="#0000ff" stroke-width="0.8"/>
<path d="M1256.3 656.2 L1260.8 656.2" fill="none" stroke="#ff6a6a" stroke-width="0.7"/>
<text x="1229.3" y="655.4" font-size="4.15" fill="#000080" font-weight="700" textLength="6.6" lengthAdjust="spacingAndGlyphs">R38</text>
<text x="1237.6" y="655.4" font-size="3.9" fill="#444" textLength="1.8" lengthAdjust="spacingAndGlyphs">1</text>
<text x="1243" y="655.7" font-size="4.27" fill="#000" font-weight="700" textLength="8" lengthAdjust="spacingAndGlyphs">ST@</text>
<text x="1260.2" y="655.4" font-size="3.9" fill="#444" textLength="1.8" lengthAdjust="spacingAndGlyphs">2</text>
<text x="1265.2" y="655.4" font-size="4.15" fill="#000080" font-weight="700" textLength="20.6" lengthAdjust="spacingAndGlyphs">0_0402_5%</text>
<path d="M1215.4 664.4 L1238.5 664.4" fill="none" stroke="#a34d7d" stroke-width="0.7"/>
<path d="M1238.5 664.4 L1243 664.4" fill="none" stroke="#ff6a6a" stroke-width="0.7"/>
<path d="M1243 664.4 L1244.1 665.9 L1246.3 662.9 L1248.5 665.9 L1250.8 662.9 L1253 665.9 L1255.2 662.9 L1256.3 664.4" fill="none" stroke="#0000ff" stroke-width="0.8"/>
<path d="M1256.3 664.4 L1260.8 664.4" fill="none" stroke="#ff6a6a" stroke-width="0.7"/>
<text x="1229.3" y="663.6" font-size="4.15" fill="#000080" font-weight="700" textLength="6.6" lengthAdjust="spacingAndGlyphs">R39</text>
<text x="1237.6" y="663.6" font-size="3.9" fill="#444" textLength="1.8" lengthAdjust="spacingAndGlyphs">1</text>
<text x="1243" y="663.9" font-size="4.27" fill="#000" font-weight="700" textLength="13.5" lengthAdjust="spacingAndGlyphs">INTEL@</text>
<text x="1260.2" y="663.6" font-size="3.9" fill="#444" textLength="1.8" lengthAdjust="spacingAndGlyphs">2</text>
<text x="1265.2" y="663.6" font-size="4.15" fill="#000080" font-weight="700" textLength="20.6" lengthAdjust="spacingAndGlyphs">0_0402_5%</text>
<path d="M1260.8 656.2 L1292.4 656.2 L1292.4 651.6" fill="none" stroke="#a34d7d" stroke-width="0.7"/>
<path d="M1260.8 664.4 L1298.8 664.4" fill="none" stroke="#a34d7d" stroke-width="0.7"/>
<circle cx="1299.9" cy="664.4" r=".95" fill="#fff" stroke="#ff0000" stroke-width=".55"/>
<text x="1302" y="665.7" font-size="4.27" fill="#444" textLength="10.8" lengthAdjust="spacingAndGlyphs">+3VLP</text>
<path d="M1215.4 673.5 L1248 673.5" fill="none" stroke="#a34d7d" stroke-width="0.7"/>
<path d="M1248.6 669.5 L1248.6 677.5" fill="none" stroke="#0000ff" stroke-width="1.0"/>
<path d="M1250.8 669.5 L1250.8 677.5" fill="none" stroke="#0000ff" stroke-width="1.0"/>
<path d="M1251.4 673.5 L1297.3 673.5" fill="none" stroke="#a34d7d" stroke-width="0.7"/>
<path d="M1297.3 668.9 L1297.3 678.1 L1302.6 673.5 L1297.3 668.9" fill="none" stroke="#ff0000" stroke-width="0.8"/>
<text x="1242.7" y="672.7" font-size="3.9" fill="#444" textLength="1.8" lengthAdjust="spacingAndGlyphs">1</text>
<text x="1255.6" y="672.7" font-size="3.9" fill="#444" textLength="1.8" lengthAdjust="spacingAndGlyphs">2</text>
<text x="1261.4" y="672.7" font-size="4.15" fill="#000080" font-weight="700" textLength="31.4" lengthAdjust="spacingAndGlyphs">0.1U_0402_16V7K</text>
<text x="1247.5" y="681.7" font-size="4.15" fill="#000080" font-weight="700" textLength="7" lengthAdjust="spacingAndGlyphs">C27</text>
<text x="509.2" y="461.4" font-size="4.8" fill="#ff0000" font-weight="700" textLength="26.9" lengthAdjust="spacingAndGlyphs">PVT-1 PIR8</text>
<rect x="509.2" y="465.2" width="167.9" height="118" fill="none" stroke="#ff0000" stroke-width="1.25"/>
<circle cx="533.3" cy="497.3" r=".95" fill="#fff" stroke="#ff0000" stroke-width=".55"/>
<text x="513.3" y="498.6" font-size="4.56" fill="#444" textLength="17.4" lengthAdjust="spacingAndGlyphs">+3V_HUB</text>
<path d="M534.4 497.3 L550.1 497.3" fill="none" stroke="#a34d7d" stroke-width="0.7"/>
<path d="M550.1 497.3 L554.3 497.3" fill="none" stroke="#ff6a6a" stroke-width="0.7"/>
<path d="M554.3 497.3 L555.4 498.8 L557.7 495.8 L560 498.8 L562.3 495.8 L564.6 498.8 L566.9 495.8 L568 497.3" fill="none" stroke="#0000ff" stroke-width="0.8"/>
<path d="M568 497.3 L572.1 497.3" fill="none" stroke="#ff6a6a" stroke-width="0.7"/>
<path d="M572.1 497.3 L667.7 497.3" fill="none" stroke="#a34d7d" stroke-width="0.7"/>
<text x="549.7" y="496.4" font-size="4.5" fill="#444" textLength="1.8" lengthAdjust="spacingAndGlyphs">2</text>
<text x="571.9" y="496.4" font-size="4.5" fill="#444" textLength="1.8" lengthAdjust="spacingAndGlyphs">1</text>
<circle cx="560.9" cy="495" r="1.700" fill="#222"/>
<text x="573.4" y="496.4" font-size="4.62" fill="#f23c3c" textLength="27.9" lengthAdjust="spacingAndGlyphs">HUB_DBG_PB4</text>
<text x="554.3" y="491.3" font-size="4.5" fill="#000080" font-weight="700" textLength="29.5" lengthAdjust="spacingAndGlyphs">R36 0_0402_5%</text>
<path d="M618.2 497.3 L622.4 497.3" fill="none" stroke="#ff6a6a" stroke-width="0.7"/>
<path d="M622.4 497.3 L623.5 498.8 L625.8 495.8 L628.1 498.8 L630.3 495.8 L632.6 498.8 L634.9 495.8 L636 497.3" fill="none" stroke="#0000ff" stroke-width="0.8"/>
<path d="M636 497.3 L640.3 497.3" fill="none" stroke="#ff6a6a" stroke-width="0.7"/>
<text x="617.6" y="496.4" font-size="4.5" fill="#444" textLength="1.8" lengthAdjust="spacingAndGlyphs">2</text>
<text x="640" y="496.4" font-size="4.5" fill="#444" textLength="1.8" lengthAdjust="spacingAndGlyphs">1</text>
<circle cx="629" cy="495" r="1.700" fill="#222"/>
<text x="645.2" y="496.4" font-size="4.62" fill="#f23c3c" textLength="20.1" lengthAdjust="spacingAndGlyphs">HUB_RST#</text>
<text x="618.3" y="500.7" font-size="4.5" fill="#000080" font-weight="700" textLength="7" lengthAdjust="spacingAndGlyphs">R20</text>
<text x="632.1" y="500.7" font-size="4.5" fill="#000080" font-weight="700" textLength="19.6" lengthAdjust="spacingAndGlyphs">0_0402_5%</text>
<path d="M513.7 515.2 L550.1 515.2" fill="none" stroke="#a34d7d" stroke-width="0.7"/>
<path d="M550.1 515.2 L554.3 515.2" fill="none" stroke="#ff6a6a" stroke-width="0.7"/>
<path d="M554.3 515.2 L555.4 516.7 L557.7 513.7 L560 516.7 L562.3 513.7 L564.6 516.7 L566.9 513.7 L568 515.2" fill="none" stroke="#0000ff" stroke-width="0.8"/>
<path d="M568 515.2 L572.1 515.2" fill="none" stroke="#ff6a6a" stroke-width="0.7"/>
<path d="M572.1 515.2 L617.8 515.2" fill="none" stroke="#a34d7d" stroke-width="0.7"/>
<text x="549.7" y="514.3" font-size="4.5" fill="#444" textLength="1.8" lengthAdjust="spacingAndGlyphs">2</text>
<text x="571.9" y="514.3" font-size="4.5" fill="#444" textLength="1.8" lengthAdjust="spacingAndGlyphs">1</text>
<circle cx="560.9" cy="512.9" r="1.700" fill="#222"/>
<text x="514.2" y="514.3" font-size="4.62" fill="#f23c3c" textLength="29.9" lengthAdjust="spacingAndGlyphs">HUB_DBG_PA13</text>
<text x="587" y="514.3" font-size="4.62" fill="#f23c3c" textLength="30.2" lengthAdjust="spacingAndGlyphs">HUB_DBG_PA15</text>
<text x="554.3" y="509.4" font-size="4.5" fill="#000080" font-weight="700" textLength="29.5" lengthAdjust="spacingAndGlyphs">R37 0_0402_5%</text>
<path d="M513.7 532.9 L550.1 532.9" fill="none" stroke="#a34d7d" stroke-width="0.7"/>
<path d="M550.1 532.9 L554.3 532.9" fill="none" stroke="#ff6a6a" stroke-width="0.7"/>
<path d="M554.3 532.9 L555.4 534.4 L557.7 531.4 L560 534.4 L562.3 531.4 L564.6 534.4 L566.9 531.4 L568 532.9" fill="none" stroke="#0000ff" stroke-width="0.8"/>
<path d="M568 532.9 L572.1 532.9" fill="none" stroke="#ff6a6a" stroke-width="0.7"/>
<path d="M572.1 532.9 L617.8 532.9" fill="none" stroke="#a34d7d" stroke-width="0.7"/>
<text x="549.7" y="532" font-size="4.5" fill="#444" textLength="1.8" lengthAdjust="spacingAndGlyphs">2</text>
<text x="571.9" y="532" font-size="4.5" fill="#444" textLength="1.8" lengthAdjust="spacingAndGlyphs">1</text>
<circle cx="560.9" cy="530.6" r="1.700" fill="#222"/>
<text x="514.2" y="532" font-size="4.62" fill="#f23c3c" textLength="28" lengthAdjust="spacingAndGlyphs">HUB_DBG_PB3</text>
<text x="587" y="532" font-size="4.62" fill="#f23c3c" textLength="30.2" lengthAdjust="spacingAndGlyphs">HUB_DBG_PA14</text>
<text x="554.3" y="527.7" font-size="4.5" fill="#000080" font-weight="700" textLength="29.5" lengthAdjust="spacingAndGlyphs">R58 0_0402_5%</text>
<path d="M536.3 546.3 L550.1 546.3" fill="none" stroke="#a34d7d" stroke-width="0.7"/>
<path d="M550.1 546.3 L554.3 546.3" fill="none" stroke="#ff6a6a" stroke-width="0.7"/>
<path d="M554.3 546.3 L555.4 547.8 L557.7 544.8 L560 547.8 L562.3 544.8 L564.6 547.8 L566.9 544.8 L568 546.3" fill="none" stroke="#0000ff" stroke-width="0.8"/>
<path d="M568 546.3 L572.1 546.3" fill="none" stroke="#ff6a6a" stroke-width="0.7"/>
<path d="M572.1 546.3 L617.8 546.3" fill="none" stroke="#a34d7d" stroke-width="0.7"/>
<text x="549.7" y="545.4" font-size="4.5" fill="#444" textLength="1.8" lengthAdjust="spacingAndGlyphs">2</text>
<text x="571.9" y="545.4" font-size="4.5" fill="#444" textLength="1.8" lengthAdjust="spacingAndGlyphs">1</text>
<circle cx="560.9" cy="544" r="1.700" fill="#222"/>
<text x="578" y="545.4" font-size="4.62" fill="#f23c3c" textLength="19.8" lengthAdjust="spacingAndGlyphs">HUB_RST#</text>
<text x="554.3" y="541.3" font-size="4.5" fill="#000080" font-weight="700" textLength="29.5" lengthAdjust="spacingAndGlyphs">R61 0_0402_5%</text>
<path d="M536.3 546.3 L536.3 553.2" fill="none" stroke="#a34d7d" stroke-width="0.7"/>
<path d="M536.3 553.2 L536.3 555.3" fill="none" stroke="#ff6a6a" stroke-width="0.7"/>
<path d="M531.7 555.3 L540.9 555.3 L536.3 559.9 L531.7 555.3" fill="none" stroke="#ff0000" stroke-width="0.8"/>
<path d="M749.3 483.3 L731 483.3 L731 469.3 L821.9 469.3" fill="none" stroke="#a34d7d" stroke-width="0.7"/>
<text x="791.1" y="468.2" font-size="4.62" fill="#f23c3c" textLength="24.2" lengthAdjust="spacingAndGlyphs">HUB_32_OUT</text>
<rect x="729.9" y="482.2" width="2.200" height="2.200" fill="#ff00ff"/>
<path d="M749.3 483.3 L754.5 483.3" fill="none" stroke="#ff6a6a" stroke-width="0.7"/>
<path d="M762.5 483.3 L767.4 483.3" fill="none" stroke="#ff6a6a" stroke-width="0.7"/>
<path d="M767.4 483.3 L821.9 483.3" fill="none" stroke="#a34d7d" stroke-width="0.7"/>
<rect x="784.4" y="482.2" width="2.200" height="2.200" fill="#ff00ff"/>
<text x="791.1" y="482.2" font-size="4.62" fill="#f23c3c" textLength="19.2" lengthAdjust="spacingAndGlyphs">HUB_32_IN</text>
<path d="M754.5 479.4 L754.5 487.2" fill="none" stroke="#0000ff" stroke-width="0.9"/>
<path d="M762.5 479.4 L762.5 487.2" fill="none" stroke="#0000ff" stroke-width="0.9"/>
<rect x="756.4" y="478.6" width="4.2" height="9.4" fill="none" stroke="#0000ff" stroke-width="0.8"/>
<text x="756.2" y="478" font-size="4.5" fill="#000080" font-weight="700" textLength="4.4" lengthAdjust="spacingAndGlyphs">X1</text>
<text x="748.4" y="482.4" font-size="4.5" fill="#444" textLength="1.8" lengthAdjust="spacingAndGlyphs">2</text>
<text x="766.6" y="482.4" font-size="4.5" fill="#444" textLength="1.8" lengthAdjust="spacingAndGlyphs">1</text>
<text x="736.1" y="491.3" font-size="4.5" fill="#000080" font-weight="700" textLength="69.5" lengthAdjust="spacingAndGlyphs">32.768KHZ_12.5PF_1TJF125DP1A000D</text>
<text x="754.3" y="496" font-size="4.56" fill="#000" font-weight="700" textLength="14" lengthAdjust="spacingAndGlyphs">INTEL@</text>
<path d="M731 483.3 L731 500" fill="none" stroke="#a34d7d" stroke-width="0.7"/>
<path d="M731 500 L731 507.1" fill="none" stroke="#ff6a6a" stroke-width="0.7"/>
<path d="M726.7 507.1 L735.3 507.1" fill="none" stroke="#0000ff" stroke-width="1.0"/>
<path d="M726.7 509.3 L735.3 509.3" fill="none" stroke="#0000ff" stroke-width="1.0"/>
<path d="M731 509.3 L731 515" fill="none" stroke="#ff6a6a" stroke-width="0.7"/>
<path d="M731 515 L731 517.2" fill="none" stroke="#a34d7d" stroke-width="0.7"/>
<path d="M731 517.2 L731 519.3" fill="none" stroke="#ff6a6a" stroke-width="0.7"/>
<path d="M726.4 519.3 L735.6 519.3 L731 523.9 L726.4 519.3" fill="none" stroke="#ff0000" stroke-width="0.8"/>
<text x="732.5" y="501" font-size="4.5" fill="#444" textLength="1.7" lengthAdjust="spacingAndGlyphs">1</text>
<text x="732.5" y="517" font-size="4.5" fill="#444" textLength="1.7" lengthAdjust="spacingAndGlyphs">2</text>
<text x="736.1" y="504.9" font-size="4.5" fill="#000080" font-weight="700" textLength="6.8" lengthAdjust="spacingAndGlyphs">C15</text>
<text x="736.1" y="509.1" font-size="4.5" fill="#000080" font-weight="700" textLength="29.5" lengthAdjust="spacingAndGlyphs">18P_0402_50V8J</text>
<text x="736.1" y="514" font-size="4.56" fill="#000" font-weight="700" textLength="14" lengthAdjust="spacingAndGlyphs">INTEL@</text>
<path d="M785.5 483.3 L785.5 500" fill="none" stroke="#a34d7d" stroke-width="0.7"/>
<path d="M785.5 500 L785.5 507.1" fill="none" stroke="#ff6a6a" stroke-width="0.7"/>
<path d="M781.2 507.1 L789.8 507.1" fill="none" stroke="#0000ff" stroke-width="1.0"/>
<path d="M781.2 509.3 L789.8 509.3" fill="none" stroke="#0000ff" stroke-width="1.0"/>
<path d="M785.5 509.3 L785.5 515" fill="none" stroke="#ff6a6a" stroke-width="0.7"/>
<path d="M785.5 515 L785.5 517.2" fill="none" stroke="#a34d7d" stroke-width="0.7"/>
<path d="M785.5 517.2 L785.5 519.3" fill="none" stroke="#ff6a6a" stroke-width="0.7"/>
<path d="M780.9 519.3 L790.1 519.3 L785.5 523.9 L780.9 519.3" fill="none" stroke="#ff0000" stroke-width="0.8"/>
<text x="787" y="501" font-size="4.5" fill="#444" textLength="1.7" lengthAdjust="spacingAndGlyphs">1</text>
<text x="787" y="517" font-size="4.5" fill="#444" textLength="1.7" lengthAdjust="spacingAndGlyphs">2</text>
<text x="790.3" y="504.9" font-size="4.5" fill="#000080" font-weight="700" textLength="6.8" lengthAdjust="spacingAndGlyphs">C19</text>
<text x="790.3" y="509.1" font-size="4.5" fill="#000080" font-weight="700" textLength="29.5" lengthAdjust="spacingAndGlyphs">18P_0402_50V8J</text>
<text x="790.3" y="514" font-size="4.56" fill="#000" font-weight="700" textLength="14" lengthAdjust="spacingAndGlyphs">INTEL@</text>
<rect x="717.6" y="542.2" width="149.6" height="41" fill="none" stroke="#008000" stroke-width="1.3"/>
<text x="740.4" y="533.6" font-size="4.8" fill="#ff0000" font-weight="700" textLength="23.6" lengthAdjust="spacingAndGlyphs">DVT PIR-5</text>
<rect x="740" y="537.4" width="36.7" height="41.2" fill="none" stroke="#ff0000" stroke-width="1.25"/>
<text x="799.1" y="533.3" font-size="5.8" fill="#74c474" class="m" textLength="56" lengthAdjust="spacingAndGlyphs">ST design Co-lay</text>
<text x="799.1" y="539.2" font-size="5.8" fill="#74c474" class="m" textLength="37.9" lengthAdjust="spacingAndGlyphs">BOM control</text>
<text x="745.4" y="550.4" font-size="4.5" fill="#000080" font-weight="700" textLength="4.4" lengthAdjust="spacingAndGlyphs">Y1</text>
<text x="754.3" y="550.4" font-size="4.56" fill="#000" font-weight="700" textLength="7.5" lengthAdjust="spacingAndGlyphs">ST@</text>
<rect x="744.5" y="551.5" width="27.6" height="18.1" fill="none" stroke="#0000ff" stroke-width="0.9"/>
<text x="727.3" y="573" font-size="4.5" fill="#000080" font-weight="700" textLength="65.3" lengthAdjust="spacingAndGlyphs">12M 12PF FSX3M 12.000000M12FD-O</text>
<path d="M812.2 556 L821.5 556" fill="none" stroke="#0000ff" stroke-width="0.8"/>
<path d="M826.2 556 L834.5 556" fill="none" stroke="#0000ff" stroke-width="0.8"/>
<path d="M821.7 551.2 L821.7 560.8" fill="none" stroke="#0000ff" stroke-width="1.5"/>
<path d="M826 551.2 L826 560.8" fill="none" stroke="#0000ff" stroke-width="1.5"/>
<text x="799.1" y="554.8" font-size="4.5" fill="#000080" font-weight="700" textLength="6.9" lengthAdjust="spacingAndGlyphs">C15</text>
<text x="812.7" y="555.1" font-size="4.5" fill="#000080" textLength="1.8" lengthAdjust="spacingAndGlyphs">2</text>
<text x="832.8" y="555.1" font-size="4.5" fill="#000080" textLength="1.8" lengthAdjust="spacingAndGlyphs">1</text>
<text x="835.5" y="555.1" font-size="4.5" fill="#000080" font-weight="700" textLength="29.5" lengthAdjust="spacingAndGlyphs">15P_0402_50V8J</text>
<text x="817.4" y="550.2" font-size="4.56" fill="#000" font-weight="700" textLength="8.2" lengthAdjust="spacingAndGlyphs">ST@</text>
<path d="M812.2 569.6 L821.5 569.6" fill="none" stroke="#0000ff" stroke-width="0.8"/>
<path d="M826.2 569.6 L834.5 569.6" fill="none" stroke="#0000ff" stroke-width="0.8"/>
<path d="M821.7 564.8 L821.7 574.4" fill="none" stroke="#0000ff" stroke-width="1.5"/>
<path d="M826 564.8 L826 574.4" fill="none" stroke="#0000ff" stroke-width="1.5"/>
<text x="799.1" y="568.4" font-size="4.5" fill="#000080" font-weight="700" textLength="6.9" lengthAdjust="spacingAndGlyphs">C16</text>
<text x="812.7" y="568.7" font-size="4.5" fill="#000080" textLength="1.8" lengthAdjust="spacingAndGlyphs">2</text>
<text x="832.8" y="568.7" font-size="4.5" fill="#000080" textLength="1.8" lengthAdjust="spacingAndGlyphs">1</text>
<text x="835.5" y="568.7" font-size="4.5" fill="#000080" font-weight="700" textLength="29.5" lengthAdjust="spacingAndGlyphs">15P_0402_50V8J</text>
<text x="817.4" y="563.8" font-size="4.56" fill="#000" font-weight="700" textLength="8.2" lengthAdjust="spacingAndGlyphs">ST@</text>
<text x="677" y="593.1" font-size="4.8" fill="#ff0000" font-weight="700" textLength="30.6" lengthAdjust="spacingAndGlyphs">PVT-2 PIR-12</text>
<rect x="676.6" y="596.6" width="158.8" height="54.4" fill="none" stroke="#ff0000" stroke-width="1.25"/>
<text x="740.4" y="600.1" font-size="4.5" fill="#000080" font-weight="700" textLength="4.4" lengthAdjust="spacingAndGlyphs">Y2</text>
<text x="740.4" y="604.4" font-size="4.5" fill="#000080" font-weight="700" textLength="61.6" lengthAdjust="spacingAndGlyphs">12MHZ 12PF +-30PPM 7V12000011</text>
<rect x="744.5" y="610.6" width="18.3" height="13.1" fill="none" stroke="#0000ff" stroke-width="1.0"/>
<path d="M746 619.5 L749.6 619.5 L749.6 614.6 L751.8 614.6" fill="none" stroke="#0000ff" stroke-width="0.9"/>
<path d="M751.8 612.4 L751.8 622" fill="none" stroke="#0000ff" stroke-width="0.9"/>
<path d="M753.2 613 L755 613 L755 621.4 L753.2 621.4 L753.2 613" fill="none" stroke="#0000ff" stroke-width="0.8"/>
<path d="M756.4 612.4 L756.4 622" fill="none" stroke="#0000ff" stroke-width="0.9"/>
<path d="M756.4 619.5 L759 619.5 L759 614.6 L761.6 614.6" fill="none" stroke="#0000ff" stroke-width="0.9"/>
<path d="M736.9 614.6 L744.5 614.6" fill="none" stroke="#ff6a6a" stroke-width="0.7"/>
<path d="M736.9 614.6 L726.4 614.6 L726.4 630" fill="none" stroke="#a34d7d" stroke-width="0.7"/>
<path d="M726.4 630 L726.4 632.1" fill="none" stroke="#ff6a6a" stroke-width="0.7"/>
<path d="M721.8 632.1 L731 632.1 L726.4 636.7 L721.8 632.1" fill="none" stroke="#ff0000" stroke-width="0.8"/>
<path d="M736.9 619.5 L744.5 619.5" fill="none" stroke="#ff6a6a" stroke-width="0.7"/>
<path d="M685.9 619.5 L736.9 619.5" fill="none" stroke="#a34d7d" stroke-width="0.7"/>
<text x="687.1" y="618.1" font-size="4.62" fill="#f23c3c" textLength="32.7" lengthAdjust="spacingAndGlyphs">HUB_XCLKOUT_R</text>
<path d="M762.8 614.6 L775.4 614.6" fill="none" stroke="#ff6a6a" stroke-width="0.7"/>
<path d="M775.4 614.6 L830.5 614.6" fill="none" stroke="#a34d7d" stroke-width="0.7"/>
<text x="800.2" y="613.4" font-size="4.62" fill="#f23c3c" textLength="23.3" lengthAdjust="spacingAndGlyphs">HUB_XCLKIN</text>
<path d="M762.8 619.5 L775.4 619.5" fill="none" stroke="#ff6a6a" stroke-width="0.7"/>
<path d="M775.4 619.5 L776.8 619.5 L776.8 630" fill="none" stroke="#a34d7d" stroke-width="0.7"/>
<path d="M776.8 630 L776.8 632.1" fill="none" stroke="#ff6a6a" stroke-width="0.7"/>
<path d="M772.2 632.1 L781.4 632.1 L776.8 636.7 L772.2 632.1" fill="none" stroke="#ff0000" stroke-width="0.8"/>
<text x="739.8" y="613.8" font-size="4.5" fill="#444" textLength="1.7" lengthAdjust="spacingAndGlyphs">4</text>
<text x="739.8" y="622" font-size="4.5" fill="#444" textLength="1.7" lengthAdjust="spacingAndGlyphs">1</text>
<text x="766" y="613.8" font-size="4.5" fill="#444" textLength="1.7" lengthAdjust="spacingAndGlyphs">3</text>
<text x="766" y="622" font-size="4.5" fill="#444" textLength="1.7" lengthAdjust="spacingAndGlyphs">2</text>
<text x="745.2" y="627.4" font-size="4.56" fill="#000" font-weight="700" textLength="7.5" lengthAdjust="spacingAndGlyphs">ST@</text>
<text x="504.7" y="651.6" font-size="5.8" fill="#74c474" class="m" textLength="55.3" lengthAdjust="spacingAndGlyphs">ST design Co-lay</text>
<text x="504.7" y="657.7" font-size="5.8" fill="#74c474" class="m" textLength="37.8" lengthAdjust="spacingAndGlyphs">BOM control</text>
<rect x="499.9" y="664.7" width="294.8" height="126.7" fill="none" stroke="#008000" stroke-width="1.3"/>
<text x="618.2" y="656.3" font-size="4.8" fill="#ff0000" font-weight="700" textLength="23.5" lengthAdjust="spacingAndGlyphs">DVT PIR-6</text>
<rect x="617.5" y="660.5" width="163.9" height="26.7" fill="none" stroke="#ff0000" stroke-width="1.25"/>
<text x="504.7" y="673.5" font-size="5.8" fill="#808080" class="m" textLength="104.4" lengthAdjust="spacingAndGlyphs">For Sensor Orientation Setting</text>
<text x="618.6" y="673.5" font-size="5.8" fill="#808080" class="m" textLength="142" lengthAdjust="spacingAndGlyphs">(303I, 303m, 303n)=(PA1, PA2, PA3)= 0,0,1</text>
<text x="618.6" y="679.8" font-size="5.8" fill="#808080" class="m" textLength="152.5" lengthAdjust="spacingAndGlyphs">(4200I, 4200m, 4200n)=(PA4, PA5, PA6)= 0,0,1</text>
<circle cx="509.3" cy="706.7" r=".95" fill="#fff" stroke="#ff0000" stroke-width=".55"/>
<text x="500.8" y="703.5" font-size="4.56" fill="#444" textLength="16.6" lengthAdjust="spacingAndGlyphs">+3V_HUB</text>
<path d="M509.3 707.8 L509.3 723.5" fill="none" stroke="#ff6a6a" stroke-width="0.7"/>
<path d="M509.3 723.5 L510.9 724.6 L507.7 726.8 L510.9 729 L507.7 731.2 L510.9 733.4 L507.7 735.6 L509.3 736.7" fill="none" stroke="#0000ff" stroke-width="0.8"/>
<path d="M509.3 736.7 L509.3 755" fill="none" stroke="#ff6a6a" stroke-width="0.7"/>
<path d="M509.3 755 L510.9 756.1 L507.7 758.4 L510.9 760.7 L507.7 763 L510.9 765.3 L507.7 767.6 L509.3 768.7" fill="none" stroke="#0000ff" stroke-width="0.8"/>
<path d="M509.3 768.7 L509.3 781.7" fill="none" stroke="#ff6a6a" stroke-width="0.7"/>
<path d="M504.7 781.7 L513.9 781.7 L509.3 786.3 L504.7 781.7" fill="none" stroke="#ff0000" stroke-width="0.8"/>
<rect x="508.2" y="744.9" width="2.200" height="2.200" fill="#ff00ff"/>
<path d="M509.3 746 L540.8 746" fill="none" stroke="#a34d7d" stroke-width="0.7"/>
<text x="519" y="745" font-size="4.62" fill="#f23c3c" textLength="17.3" lengthAdjust="spacingAndGlyphs">HUB_PA1</text>
<text x="505.7" y="720.5" font-size="4.5" fill="#444" textLength="1.7" lengthAdjust="spacingAndGlyphs">1</text>
<text x="505.7" y="741.8" font-size="4.5" fill="#444" textLength="1.7" lengthAdjust="spacingAndGlyphs">2</text>
<text x="505.7" y="751.6" font-size="4.5" fill="#444" textLength="1.7" lengthAdjust="spacingAndGlyphs">1</text>
<text x="505.7" y="774.3" font-size="4.5" fill="#444" textLength="1.7" lengthAdjust="spacingAndGlyphs">2</text>
<text x="514.8" y="722.4" font-size="4.62" fill="#000" font-weight="700" textLength="3.5" lengthAdjust="spacingAndGlyphs">@</text>
<text x="514.8" y="727.1" font-size="4.5" fill="#000080" font-weight="700" textLength="6.6" lengthAdjust="spacingAndGlyphs">R41</text>
<text x="514.8" y="731.9" font-size="4.5" fill="#000080" font-weight="700" textLength="24.5" lengthAdjust="spacingAndGlyphs">10K_0402_5%</text>
<text x="514.8" y="758.6" font-size="4.62" fill="#000" font-weight="700" textLength="8.1" lengthAdjust="spacingAndGlyphs">ST@</text>
<text x="513.3" y="763.4" font-size="4.5" fill="#000080" font-weight="700" textLength="6.6" lengthAdjust="spacingAndGlyphs">R51</text>
<text x="512.8" y="768.7" font-size="4.5" fill="#000080" font-weight="700" textLength="24.5" lengthAdjust="spacingAndGlyphs">10K_0402_5%</text>
<circle cx="558.9" cy="706.7" r=".95" fill="#fff" stroke="#ff0000" stroke-width=".55"/>
<text x="550.4" y="703.5" font-size="4.56" fill="#444" textLength="16.6" lengthAdjust="spacingAndGlyphs">+3V_HUB</text>
<path d="M558.9 707.8 L558.9 723.5" fill="none" stroke="#ff6a6a" stroke-width="0.7"/>
<path d="M558.9 723.5 L560.5 724.6 L557.3 726.8 L560.5 729 L557.3 731.2 L560.5 733.4 L557.3 735.6 L558.9 736.7" fill="none" stroke="#0000ff" stroke-width="0.8"/>
<path d="M558.9 736.7 L558.9 755" fill="none" stroke="#ff6a6a" stroke-width="0.7"/>
<path d="M558.9 755 L560.5 756.1 L557.3 758.4 L560.5 760.7 L557.3 763 L560.5 765.3 L557.3 767.6 L558.9 768.7" fill="none" stroke="#0000ff" stroke-width="0.8"/>
<path d="M558.9 768.7 L558.9 781.7" fill="none" stroke="#ff6a6a" stroke-width="0.7"/>
<path d="M554.3 781.7 L563.5 781.7 L558.9 786.3 L554.3 781.7" fill="none" stroke="#ff0000" stroke-width="0.8"/>
<rect x="557.8" y="744.9" width="2.200" height="2.200" fill="#ff00ff"/>
<path d="M558.9 746 L590.4 746" fill="none" stroke="#a34d7d" stroke-width="0.7"/>
<text x="568.6" y="745" font-size="4.62" fill="#f23c3c" textLength="17.3" lengthAdjust="spacingAndGlyphs">HUB_PA2</text>
<text x="555.3" y="720.5" font-size="4.5" fill="#444" textLength="1.7" lengthAdjust="spacingAndGlyphs">1</text>
<text x="555.3" y="741.8" font-size="4.5" fill="#444" textLength="1.7" lengthAdjust="spacingAndGlyphs">2</text>
<text x="555.3" y="751.6" font-size="4.5" fill="#444" textLength="1.7" lengthAdjust="spacingAndGlyphs">1</text>
<text x="555.3" y="774.3" font-size="4.5" fill="#444" textLength="1.7" lengthAdjust="spacingAndGlyphs">2</text>
<text x="564.4" y="722.4" font-size="4.62" fill="#000" font-weight="700" textLength="3.5" lengthAdjust="spacingAndGlyphs">@</text>
<text x="564.4" y="727.1" font-size="4.5" fill="#000080" font-weight="700" textLength="6.6" lengthAdjust="spacingAndGlyphs">R42</text>
<text x="564.4" y="731.9" font-size="4.5" fill="#000080" font-weight="700" textLength="24.5" lengthAdjust="spacingAndGlyphs">10K_0402_5%</text>
<text x="564.4" y="758.6" font-size="4.62" fill="#000" font-weight="700" textLength="8.1" lengthAdjust="spacingAndGlyphs">ST@</text>
<text x="562.9" y="763.4" font-size="4.5" fill="#000080" font-weight="700" textLength="6.6" lengthAdjust="spacingAndGlyphs">R52</text>
<text x="562.4" y="768.7" font-size="4.5" fill="#000080" font-weight="700" textLength="24.5" lengthAdjust="spacingAndGlyphs">10K_0402_5%</text>
<circle cx="608.7" cy="706.7" r=".95" fill="#fff" stroke="#ff0000" stroke-width=".55"/>
<text x="600.2" y="703.5" font-size="4.56" fill="#444" textLength="16.6" lengthAdjust="spacingAndGlyphs">+3V_HUB</text>
<path d="M608.7 707.8 L608.7 723.5" fill="none" stroke="#ff6a6a" stroke-width="0.7"/>
<path d="M608.7 723.5 L610.3 724.6 L607.1 726.8 L610.3 729 L607.1 731.2 L610.3 733.4 L607.1 735.6 L608.7 736.7" fill="none" stroke="#0000ff" stroke-width="0.8"/>
<path d="M608.7 736.7 L608.7 755" fill="none" stroke="#ff6a6a" stroke-width="0.7"/>
<path d="M608.7 755 L610.3 756.1 L607.1 758.4 L610.3 760.7 L607.1 763 L610.3 765.3 L607.1 767.6 L608.7 768.7" fill="none" stroke="#0000ff" stroke-width="0.8"/>
<path d="M608.7 768.7 L608.7 781.7" fill="none" stroke="#ff6a6a" stroke-width="0.7"/>
<path d="M604.1 781.7 L613.3 781.7 L608.7 786.3 L604.1 781.7" fill="none" stroke="#ff0000" stroke-width="0.8"/>
<rect x="607.6" y="744.9" width="2.200" height="2.200" fill="#ff00ff"/>
<path d="M608.7 746 L640.2 746" fill="none" stroke="#a34d7d" stroke-width="0.7"/>
<text x="618.4" y="745" font-size="4.62" fill="#f23c3c" textLength="17.3" lengthAdjust="spacingAndGlyphs">HUB_PA3</text>
<text x="605.1" y="720.5" font-size="4.5" fill="#444" textLength="1.7" lengthAdjust="spacingAndGlyphs">1</text>
<text x="605.1" y="741.8" font-size="4.5" fill="#444" textLength="1.7" lengthAdjust="spacingAndGlyphs">2</text>
<text x="605.1" y="751.6" font-size="4.5" fill="#444" textLength="1.7" lengthAdjust="spacingAndGlyphs">1</text>
<text x="605.1" y="774.3" font-size="4.5" fill="#444" textLength="1.7" lengthAdjust="spacingAndGlyphs">2</text>
<text x="614.2" y="722.4" font-size="4.62" fill="#000" font-weight="700" textLength="8.1" lengthAdjust="spacingAndGlyphs">ST@</text>
<text x="614.2" y="727.1" font-size="4.5" fill="#000080" font-weight="700" textLength="6.6" lengthAdjust="spacingAndGlyphs">R43</text>
<text x="614.2" y="731.9" font-size="4.5" fill="#000080" font-weight="700" textLength="24.5" lengthAdjust="spacingAndGlyphs">10K_0402_5%</text>
<text x="614.2" y="754" font-size="4.62" fill="#000" font-weight="700" textLength="3.5" lengthAdjust="spacingAndGlyphs">@</text>
<text x="612.7" y="758.6" font-size="4.5" fill="#000080" font-weight="700" textLength="6.6" lengthAdjust="spacingAndGlyphs">R53</text>
<text x="614.2" y="763.4" font-size="4.5" fill="#000080" font-weight="700" textLength="24.5" lengthAdjust="spacingAndGlyphs">10K_0402_5%</text>
<circle cx="658.5" cy="706.7" r=".95" fill="#fff" stroke="#ff0000" stroke-width=".55"/>
<text x="650" y="703.5" font-size="4.56" fill="#444" textLength="16.6" lengthAdjust="spacingAndGlyphs">+3V_HUB</text>
<path d="M658.5 707.8 L658.5 723.5" fill="none" stroke="#ff6a6a" stroke-width="0.7"/>
<path d="M658.5 723.5 L660.1 724.6 L656.9 726.8 L660.1 729 L656.9 731.2 L660.1 733.4 L656.9 735.6 L658.5 736.7" fill="none" stroke="#0000ff" stroke-width="0.8"/>
<path d="M658.5 736.7 L658.5 755" fill="none" stroke="#ff6a6a" stroke-width="0.7"/>
<path d="M658.5 755 L660.1 756.1 L656.9 758.4 L660.1 760.7 L656.9 763 L660.1 765.3 L656.9 767.6 L658.5 768.7" fill="none" stroke="#0000ff" stroke-width="0.8"/>
<path d="M658.5 768.7 L658.5 781.7" fill="none" stroke="#ff6a6a" stroke-width="0.7"/>
<path d="M653.9 781.7 L663.1 781.7 L658.5 786.3 L653.9 781.7" fill="none" stroke="#ff0000" stroke-width="0.8"/>
<rect x="657.4" y="744.9" width="2.200" height="2.200" fill="#ff00ff"/>
<path d="M658.5 746 L690 746" fill="none" stroke="#a34d7d" stroke-width="0.7"/>
<text x="668.2" y="745" font-size="4.62" fill="#f23c3c" textLength="17.3" lengthAdjust="spacingAndGlyphs">HUB_PA4</text>
<text x="654.9" y="720.5" font-size="4.5" fill="#444" textLength="1.7" lengthAdjust="spacingAndGlyphs">1</text>
<text x="654.9" y="741.8" font-size="4.5" fill="#444" textLength="1.7" lengthAdjust="spacingAndGlyphs">2</text>
<text x="654.9" y="751.6" font-size="4.5" fill="#444" textLength="1.7" lengthAdjust="spacingAndGlyphs">1</text>
<text x="654.9" y="774.3" font-size="4.5" fill="#444" textLength="1.7" lengthAdjust="spacingAndGlyphs">2</text>
<text x="664" y="722.4" font-size="4.62" fill="#000" font-weight="700" textLength="3.5" lengthAdjust="spacingAndGlyphs">@</text>
<text x="664" y="727.1" font-size="4.5" fill="#000080" font-weight="700" textLength="6.6" lengthAdjust="spacingAndGlyphs">R44</text>
<text x="664" y="731.9" font-size="4.5" fill="#000080" font-weight="700" textLength="24.5" lengthAdjust="spacingAndGlyphs">10K_0402_5%</text>
<text x="664" y="754" font-size="4.62" fill="#000" font-weight="700" textLength="8.1" lengthAdjust="spacingAndGlyphs">ST@</text>
<text x="662.5" y="758.6" font-size="4.5" fill="#000080" font-weight="700" textLength="6.6" lengthAdjust="spacingAndGlyphs">R54</text>
<text x="664" y="763.4" font-size="4.5" fill="#000080" font-weight="700" textLength="24.5" lengthAdjust="spacingAndGlyphs">10K_0402_5%</text>
<circle cx="708.5" cy="706.7" r=".95" fill="#fff" stroke="#ff0000" stroke-width=".55"/>
<text x="700" y="703.5" font-size="4.56" fill="#444" textLength="16.6" lengthAdjust="spacingAndGlyphs">+3V_HUB</text>
<path d="M708.5 707.8 L708.5 723.5" fill="none" stroke="#ff6a6a" stroke-width="0.7"/>
<path d="M708.5 723.5 L710.1 724.6 L706.9 726.8 L710.1 729 L706.9 731.2 L710.1 733.4 L706.9 735.6 L708.5 736.7" fill="none" stroke="#0000ff" stroke-width="0.8"/>
<path d="M708.5 736.7 L708.5 755" fill="none" stroke="#ff6a6a" stroke-width="0.7"/>
<path d="M708.5 755 L710.1 756.1 L706.9 758.4 L710.1 760.7 L706.9 763 L710.1 765.3 L706.9 767.6 L708.5 768.7" fill="none" stroke="#0000ff" stroke-width="0.8"/>
<path d="M708.5 768.7 L708.5 781.7" fill="none" stroke="#ff6a6a" stroke-width="0.7"/>
<path d="M703.9 781.7 L713.1 781.7 L708.5 786.3 L703.9 781.7" fill="none" stroke="#ff0000" stroke-width="0.8"/>
<rect x="707.4" y="744.9" width="2.200" height="2.200" fill="#ff00ff"/>
<path d="M708.5 746 L740 746" fill="none" stroke="#a34d7d" stroke-width="0.7"/>
<text x="718.2" y="745" font-size="4.62" fill="#f23c3c" textLength="17.3" lengthAdjust="spacingAndGlyphs">HUB_PA5</text>
<text x="704.9" y="720.5" font-size="4.5" fill="#444" textLength="1.7" lengthAdjust="spacingAndGlyphs">1</text>
<text x="704.9" y="741.8" font-size="4.5" fill="#444" textLength="1.7" lengthAdjust="spacingAndGlyphs">2</text>
<text x="704.9" y="751.6" font-size="4.5" fill="#444" textLength="1.7" lengthAdjust="spacingAndGlyphs">1</text>
<text x="704.9" y="774.3" font-size="4.5" fill="#444" textLength="1.7" lengthAdjust="spacingAndGlyphs">2</text>
<text x="714" y="722.4" font-size="4.62" fill="#000" font-weight="700" textLength="3.5" lengthAdjust="spacingAndGlyphs">@</text>
<text x="714" y="727.1" font-size="4.5" fill="#000080" font-weight="700" textLength="6.6" lengthAdjust="spacingAndGlyphs">R45</text>
<text x="714" y="731.9" font-size="4.5" fill="#000080" font-weight="700" textLength="24.5" lengthAdjust="spacingAndGlyphs">10K_0402_5%</text>
<text x="714" y="754" font-size="4.62" fill="#000" font-weight="700" textLength="8.1" lengthAdjust="spacingAndGlyphs">ST@</text>
<text x="712.5" y="758.6" font-size="4.5" fill="#000080" font-weight="700" textLength="6.6" lengthAdjust="spacingAndGlyphs">R55</text>
<text x="714" y="763.4" font-size="4.5" fill="#000080" font-weight="700" textLength="24.5" lengthAdjust="spacingAndGlyphs">10K_0402_5%</text>
<circle cx="758.3" cy="706.7" r=".95" fill="#fff" stroke="#ff0000" stroke-width=".55"/>
<text x="749.8" y="703.5" font-size="4.56" fill="#444" textLength="16.6" lengthAdjust="spacingAndGlyphs">+3V_HUB</text>
<path d="M758.3 707.8 L758.3 723.5" fill="none" stroke="#ff6a6a" stroke-width="0.7"/>
<path d="M758.3 723.5 L759.9 724.6 L756.7 726.8 L759.9 729 L756.7 731.2 L759.9 733.4 L756.7 735.6 L758.3 736.7" fill="none" stroke="#0000ff" stroke-width="0.8"/>
<path d="M758.3 736.7 L758.3 755" fill="none" stroke="#ff6a6a" stroke-width="0.7"/>
<path d="M758.3 755 L759.9 756.1 L756.7 758.4 L759.9 760.7 L756.7 763 L759.9 765.3 L756.7 767.6 L758.3 768.7" fill="none" stroke="#0000ff" stroke-width="0.8"/>
<path d="M758.3 768.7 L758.3 781.7" fill="none" stroke="#ff6a6a" stroke-width="0.7"/>
<path d="M753.7 781.7 L762.9 781.7 L758.3 786.3 L753.7 781.7" fill="none" stroke="#ff0000" stroke-width="0.8"/>
<rect x="757.2" y="744.9" width="2.200" height="2.200" fill="#ff00ff"/>
<path d="M758.3 746 L789.8 746" fill="none" stroke="#a34d7d" stroke-width="0.7"/>
<text x="768" y="745" font-size="4.62" fill="#f23c3c" textLength="17.3" lengthAdjust="spacingAndGlyphs">HUB_PA6</text>
<text x="754.7" y="720.5" font-size="4.5" fill="#444" textLength="1.7" lengthAdjust="spacingAndGlyphs">1</text>
<text x="754.7" y="741.8" font-size="4.5" fill="#444" textLength="1.7" lengthAdjust="spacingAndGlyphs">2</text>
<text x="754.7" y="751.6" font-size="4.5" fill="#444" textLength="1.7" lengthAdjust="spacingAndGlyphs">1</text>
<text x="754.7" y="774.3" font-size="4.5" fill="#444" textLength="1.7" lengthAdjust="spacingAndGlyphs">2</text>
<text x="763.8" y="722.4" font-size="4.62" fill="#000" font-weight="700" textLength="8.1" lengthAdjust="spacingAndGlyphs">ST@</text>
<text x="763.8" y="727.1" font-size="4.5" fill="#000080" font-weight="700" textLength="6.6" lengthAdjust="spacingAndGlyphs">R46</text>
<text x="763.8" y="731.9" font-size="4.5" fill="#000080" font-weight="700" textLength="24.5" lengthAdjust="spacingAndGlyphs">10K_0402_5%</text>
<text x="763.8" y="754" font-size="4.62" fill="#000" font-weight="700" textLength="3.5" lengthAdjust="spacingAndGlyphs">@</text>
<text x="762.3" y="758.6" font-size="4.5" fill="#000080" font-weight="700" textLength="6.6" lengthAdjust="spacingAndGlyphs">R56</text>
<text x="763.8" y="763.4" font-size="4.5" fill="#000080" font-weight="700" textLength="24.5" lengthAdjust="spacingAndGlyphs">10K_0402_5%</text>
<rect x="803.7" y="705.2" width="294.7" height="90.8" fill="none" stroke="#008000" stroke-width="1.3"/>
<path d="M816.9 727.7 L853.4 727.7" fill="none" stroke="#a34d7d" stroke-width="0.7"/>
<path d="M853.4 727.7 L857.7 727.7" fill="none" stroke="#ff6a6a" stroke-width="0.7"/>
<path d="M857.7 727.7 L858.9 729.2 L861.2 726.2 L863.6 729.2 L866 726.2 L868.4 729.2 L870.7 726.2 L871.9 727.7" fill="none" stroke="#0000ff" stroke-width="0.8"/>
<path d="M871.9 727.7 L876 727.7" fill="none" stroke="#ff6a6a" stroke-width="0.7"/>
<path d="M876 727.7 L935 727.7" fill="none" stroke="#a34d7d" stroke-width="0.7"/>
<text x="817.7" y="726.8" font-size="4.62" fill="#f23c3c" textLength="19.6" lengthAdjust="spacingAndGlyphs">HUB_PA10</text>
<text x="852.8" y="726.8" font-size="4.5" fill="#444" textLength="1.8" lengthAdjust="spacingAndGlyphs">1</text>
<text x="857.7" y="727.2" font-size="4.56" fill="#000" font-weight="700" textLength="8" lengthAdjust="spacingAndGlyphs">ST@</text>
<text x="875.5" y="726.8" font-size="4.5" fill="#444" textLength="1.8" lengthAdjust="spacingAndGlyphs">2</text>
<text x="899.3" y="726.8" font-size="4.62" fill="#f23c3c" textLength="29.4" lengthAdjust="spacingAndGlyphs">USB20_P6_HUB</text>
<text x="835.2" y="731.9" font-size="4.5" fill="#000080" font-weight="700" textLength="6.8" lengthAdjust="spacingAndGlyphs">R47</text>
<text x="880.3" y="731.9" font-size="4.5" fill="#000080" font-weight="700" textLength="25.9" lengthAdjust="spacingAndGlyphs">1.5K_0402_1%</text>
<path d="M816.9 750.4 L853.4 750.4" fill="none" stroke="#a34d7d" stroke-width="0.7"/>
<path d="M853.4 750.4 L857.7 750.4" fill="none" stroke="#ff6a6a" stroke-width="0.7"/>
<path d="M857.7 750.4 L858.9 751.9 L861.2 748.9 L863.6 751.9 L866 748.9 L868.4 751.9 L870.7 748.9 L871.9 750.4" fill="none" stroke="#0000ff" stroke-width="0.8"/>
<path d="M871.9 750.4 L876 750.4" fill="none" stroke="#ff6a6a" stroke-width="0.7"/>
<path d="M876 750.4 L935 750.4" fill="none" stroke="#a34d7d" stroke-width="0.7"/>
<text x="817.7" y="749.5" font-size="4.62" fill="#f23c3c" textLength="23.8" lengthAdjust="spacingAndGlyphs">ACCEL_INT1</text>
<text x="852.8" y="749.5" font-size="4.5" fill="#444" textLength="1.8" lengthAdjust="spacingAndGlyphs">1</text>
<text x="857.7" y="749.9" font-size="4.56" fill="#000" font-weight="700" textLength="8" lengthAdjust="spacingAndGlyphs">ST@</text>
<text x="875.5" y="749.5" font-size="4.5" fill="#444" textLength="1.8" lengthAdjust="spacingAndGlyphs">2</text>
<text x="912.9" y="749.5" font-size="4.62" fill="#f23c3c" textLength="16.8" lengthAdjust="spacingAndGlyphs">HUB_PB0</text>
<text x="840.4" y="745.1" font-size="4.5" fill="#000080" font-weight="700" textLength="6.8" lengthAdjust="spacingAndGlyphs">R56</text>
<text x="880.3" y="749.5" font-size="4.5" fill="#000080" font-weight="700" textLength="20.4" lengthAdjust="spacingAndGlyphs">0_0402_5%</text>
<path d="M816.9 755 L853.4 755" fill="none" stroke="#a34d7d" stroke-width="0.7"/>
<path d="M853.4 755 L857.7 755" fill="none" stroke="#ff6a6a" stroke-width="0.7"/>
<path d="M857.7 755 L858.9 756.5 L861.2 753.5 L863.6 756.5 L866 753.5 L868.4 756.5 L870.7 753.5 L871.9 755" fill="none" stroke="#0000ff" stroke-width="0.8"/>
<path d="M871.9 755 L876 755" fill="none" stroke="#ff6a6a" stroke-width="0.7"/>
<path d="M876 755 L935 755" fill="none" stroke="#a34d7d" stroke-width="0.7"/>
<text x="817.7" y="754.1" font-size="4.62" fill="#f23c3c" textLength="23.8" lengthAdjust="spacingAndGlyphs">ACCEL_INT2</text>
<text x="852.8" y="754.1" font-size="4.5" fill="#444" textLength="1.8" lengthAdjust="spacingAndGlyphs">1</text>
<text x="857.7" y="754.5" font-size="4.56" fill="#000" font-weight="700" textLength="8" lengthAdjust="spacingAndGlyphs">ST@</text>
<text x="875.5" y="754.1" font-size="4.5" fill="#444" textLength="1.8" lengthAdjust="spacingAndGlyphs">2</text>
<text x="912.9" y="754.1" font-size="4.62" fill="#f23c3c" textLength="16.8" lengthAdjust="spacingAndGlyphs">HUB_PB1</text>
<text x="840.4" y="758.9" font-size="4.5" fill="#000080" font-weight="700" textLength="6.8" lengthAdjust="spacingAndGlyphs">R57</text>
<text x="880.3" y="754.1" font-size="4.5" fill="#000080" font-weight="700" textLength="20.4" lengthAdjust="spacingAndGlyphs">0_0402_5%</text>
<path d="M816.9 773.3 L853.4 773.3" fill="none" stroke="#a34d7d" stroke-width="0.7"/>
<path d="M853.4 773.3 L857.7 773.3" fill="none" stroke="#ff6a6a" stroke-width="0.7"/>
<path d="M857.7 773.3 L858.9 774.8 L861.2 771.8 L863.6 774.8 L866 771.8 L868.4 774.8 L870.7 771.8 L871.9 773.3" fill="none" stroke="#0000ff" stroke-width="0.8"/>
<path d="M871.9 773.3 L876 773.3" fill="none" stroke="#ff6a6a" stroke-width="0.7"/>
<path d="M876 773.3 L935 773.3" fill="none" stroke="#a34d7d" stroke-width="0.7"/>
<text x="817.7" y="772.4" font-size="4.62" fill="#f23c3c" textLength="20.2" lengthAdjust="spacingAndGlyphs">GYRO_INT</text>
<text x="852.8" y="772.4" font-size="4.5" fill="#444" textLength="1.8" lengthAdjust="spacingAndGlyphs">1</text>
<text x="857.7" y="772.8" font-size="4.56" fill="#000" font-weight="700" textLength="8" lengthAdjust="spacingAndGlyphs">ST@</text>
<text x="875.5" y="772.4" font-size="4.5" fill="#444" textLength="1.8" lengthAdjust="spacingAndGlyphs">2</text>
<text x="903.9" y="772.4" font-size="4.62" fill="#f23c3c" textLength="23.1" lengthAdjust="spacingAndGlyphs">HUB_BOOT1</text>
<text x="840.4" y="767.6" font-size="4.5" fill="#000080" font-weight="700" textLength="6.8" lengthAdjust="spacingAndGlyphs">R58</text>
<text x="880.3" y="772.4" font-size="4.5" fill="#000080" font-weight="700" textLength="20.4" lengthAdjust="spacingAndGlyphs">0_0402_5%</text>
<path d="M816.9 777.5 L853.4 777.5" fill="none" stroke="#a34d7d" stroke-width="0.7"/>
<path d="M853.4 777.5 L857.7 777.5" fill="none" stroke="#ff6a6a" stroke-width="0.7"/>
<path d="M857.7 777.5 L858.9 779 L861.2 776 L863.6 779 L866 776 L868.4 779 L870.7 776 L871.9 777.5" fill="none" stroke="#0000ff" stroke-width="0.8"/>
<path d="M871.9 777.5 L876 777.5" fill="none" stroke="#ff6a6a" stroke-width="0.7"/>
<path d="M876 777.5 L935 777.5" fill="none" stroke="#a34d7d" stroke-width="0.7"/>
<text x="817.7" y="776.6" font-size="4.62" fill="#f23c3c" textLength="24.5" lengthAdjust="spacingAndGlyphs">GYRO_DRDY</text>
<text x="852.8" y="776.6" font-size="4.5" fill="#444" textLength="1.8" lengthAdjust="spacingAndGlyphs">1</text>
<text x="857.7" y="777" font-size="4.56" fill="#000" font-weight="700" textLength="8" lengthAdjust="spacingAndGlyphs">ST@</text>
<text x="875.5" y="776.6" font-size="4.5" fill="#444" textLength="1.8" lengthAdjust="spacingAndGlyphs">2</text>
<text x="903.9" y="776.6" font-size="4.62" fill="#f23c3c" textLength="30" lengthAdjust="spacingAndGlyphs">HUB_DBG_PB3</text>
<text x="840.4" y="781.6" font-size="4.5" fill="#000080" font-weight="700" textLength="6.8" lengthAdjust="spacingAndGlyphs">R59</text>
<text x="880.3" y="776.9" font-size="4.5" fill="#000080" font-weight="700" textLength="20.4" lengthAdjust="spacingAndGlyphs">0_0402_5%</text>
<path d="M957.5 727.7 L993.7 727.7" fill="none" stroke="#a34d7d" stroke-width="0.7"/>
<path d="M993.7 727.7 L998 727.7" fill="none" stroke="#ff6a6a" stroke-width="0.7"/>
<path d="M998 727.7 L999.2 729.2 L1001.5 726.2 L1003.9 729.2 L1006.3 726.2 L1008.7 729.2 L1011 726.2 L1012.2 727.7" fill="none" stroke="#0000ff" stroke-width="0.8"/>
<path d="M1012.2 727.7 L1016.3 727.7" fill="none" stroke="#ff6a6a" stroke-width="0.7"/>
<path d="M1016.3 727.7 L1075.3 727.7" fill="none" stroke="#a34d7d" stroke-width="0.7"/>
<text x="958.3" y="726.8" font-size="4.62" fill="#f23c3c" textLength="15.3" lengthAdjust="spacingAndGlyphs">ALS_INT</text>
<text x="993.1" y="726.8" font-size="4.5" fill="#444" textLength="1.8" lengthAdjust="spacingAndGlyphs">1</text>
<text x="998" y="727.2" font-size="4.56" fill="#000" font-weight="700" textLength="8" lengthAdjust="spacingAndGlyphs">ST@</text>
<text x="1015.8" y="726.8" font-size="4.5" fill="#444" textLength="1.8" lengthAdjust="spacingAndGlyphs">2</text>
<text x="1053.3" y="726.8" font-size="4.62" fill="#f23c3c" textLength="20.3" lengthAdjust="spacingAndGlyphs">HUB_PB15</text>
<text x="980.2" y="731.9" font-size="4.5" fill="#000080" font-weight="700" textLength="6.8" lengthAdjust="spacingAndGlyphs">R48</text>
<text x="1012.3" y="731.9" font-size="4.5" fill="#000080" font-weight="700" textLength="19.3" lengthAdjust="spacingAndGlyphs">0_0402_5%</text>
<path d="M957.5 741.4 L993.7 741.4" fill="none" stroke="#a34d7d" stroke-width="0.7"/>
<path d="M993.7 741.4 L998 741.4" fill="none" stroke="#ff6a6a" stroke-width="0.7"/>
<path d="M998 741.4 L999.2 742.9 L1001.5 739.9 L1003.9 742.9 L1006.3 739.9 L1008.7 742.9 L1011 739.9 L1012.2 741.4" fill="none" stroke="#0000ff" stroke-width="0.8"/>
<path d="M1012.2 741.4 L1016.3 741.4" fill="none" stroke="#ff6a6a" stroke-width="0.7"/>
<path d="M1016.3 741.4 L1075.3 741.4" fill="none" stroke="#a34d7d" stroke-width="0.7"/>
<text x="958.3" y="740.5" font-size="4.62" fill="#f23c3c" textLength="22.1" lengthAdjust="spacingAndGlyphs">MAG_DRDY</text>
<text x="993.1" y="740.5" font-size="4.5" fill="#444" textLength="1.8" lengthAdjust="spacingAndGlyphs">1</text>
<text x="998" y="740.9" font-size="4.56" fill="#000" font-weight="700" textLength="8" lengthAdjust="spacingAndGlyphs">ST@</text>
<text x="1015.8" y="740.5" font-size="4.5" fill="#444" textLength="1.8" lengthAdjust="spacingAndGlyphs">2</text>
<text x="1044.2" y="740.5" font-size="4.62" fill="#f23c3c" textLength="32.6" lengthAdjust="spacingAndGlyphs">HUB_DFU_EN#_R</text>
<text x="980.2" y="745.6" font-size="4.5" fill="#000080" font-weight="700" textLength="6.8" lengthAdjust="spacingAndGlyphs">R49</text>
<text x="1012.3" y="745.6" font-size="4.5" fill="#000080" font-weight="700" textLength="19.3" lengthAdjust="spacingAndGlyphs">0_0402_5%</text>
<text x="962.7" y="768.7" font-size="5.6" fill="#808080" class="m" textLength="30.5" lengthAdjust="spacingAndGlyphs">HUB_BOOT0</text>
<text x="1002.8" y="767.6" font-size="4.5" fill="#000080" font-weight="700" textLength="6.4" lengthAdjust="spacingAndGlyphs">R27</text>
<path d="M1015.5 768.3 L1021 768.3" fill="none" stroke="#0000ff" stroke-width="0.8"/>
<path d="M1021 768.6 L1022.1 770.2 L1024.2 767 L1026.4 770.2 L1028.6 767 L1030.8 770.2 L1032.9 767 L1034 768.6" fill="none" stroke="#0000ff" stroke-width="0.8"/>
<path d="M1034 768.3 L1064 768.3" fill="none" stroke="#0000ff" stroke-width="0.8"/>
<text x="1016" y="767.3" font-size="4.5" fill="#000080" textLength="1.8" lengthAdjust="spacingAndGlyphs">2</text>
<text x="1021" y="767.3" font-size="4.56" fill="#000" font-weight="700" textLength="8.2" lengthAdjust="spacingAndGlyphs">ST@</text>
<text x="1034.8" y="767.3" font-size="4.5" fill="#000080" textLength="1.8" lengthAdjust="spacingAndGlyphs">1</text>
<text x="1039" y="767.3" font-size="4.5" fill="#000080" font-weight="700" textLength="24.6" lengthAdjust="spacingAndGlyphs">20K_0402_5%</text>
<text x="1034.8" y="786.5" font-size="5.8" fill="#74c474" class="m" textLength="55.2" lengthAdjust="spacingAndGlyphs">ST design Co-lay</text>
<text x="1034.8" y="793.3" font-size="5.8" fill="#74c474" class="m" textLength="37.8" lengthAdjust="spacingAndGlyphs">BOM control</text>
<text x="1270" y="683.2" font-size="4.8" fill="#ff0000" font-weight="700" textLength="28.4" lengthAdjust="spacingAndGlyphs">PVT-1 PIR-9</text>
<rect x="1269.7" y="687.1" width="118.4" height="59" fill="none" stroke="#ff0000" stroke-width="1.25"/>
<text x="1324.5" y="700.7" font-size="5.8" fill="#74c474" class="m" textLength="55.9" lengthAdjust="spacingAndGlyphs">ST design Co-lay</text>
<text x="1324.5" y="707.3" font-size="5.8" fill="#74c474" class="m" textLength="37.9" lengthAdjust="spacingAndGlyphs">BOM control</text>
<text x="1274.8" y="704.6" font-size="4.5" fill="#000080" font-weight="700" textLength="4.7" lengthAdjust="spacingAndGlyphs">U4</text>
<text x="1284" y="704.6" font-size="4.56" fill="#000" font-weight="700" textLength="8" lengthAdjust="spacingAndGlyphs">ST@</text>
<rect x="1274.1" y="705.1" width="27.8" height="18.2" fill="none" stroke="#0000ff" stroke-width="0.9"/>
<text x="1274.1" y="727" font-size="4.5" fill="#000080" font-weight="700" textLength="76.1" lengthAdjust="spacingAndGlyphs">STM32F103RCY6TRC28 WLCSP 64P MCU</text>
<text x="1274.1" y="731.4" font-size="4.5" fill="#000" font-weight="700" textLength="24.6" lengthAdjust="spacingAndGlyphs">SA00005P250</text>
<text x="1274.1" y="736.2" font-size="4.5" fill="#000" font-weight="700" textLength="99.3" lengthAdjust="spacingAndGlyphs">S IC STM32F103RCY6TRC28 WLCSP 64P MCU V5MM2</text>
<ellipse cx="1337.700" cy="762.100" rx="13.900" ry="11.600" fill="none" stroke="#0000ff" stroke-width=".9"/>
<text x="1333.3" y="763.6" font-size="4.62" fill="#0000ff" textLength="8.8" lengthAdjust="spacingAndGlyphs">ZZZ1</text>
<text x="1325" y="778.9" font-size="6" fill="#000080" textLength="11.1" lengthAdjust="spacingAndGlyphs">PCB</text>
<text x="1325" y="787.7" font-size="5.6" fill="#333" textLength="37.9" lengthAdjust="spacingAndGlyphs">DA6000YB020</text>
<circle cx="1238.2" cy="782.400" r="4.500" fill="none" stroke="#0000ff" stroke-width=".9"/><circle cx="1238.2" cy="782.400" r="2.600" fill="#0000ff"/>
<text x="1234" y="776.7" font-size="4.5" fill="#000080" font-weight="700" textLength="7.5" lengthAdjust="spacingAndGlyphs">FD1</text>
<path d="M1238.2 787 L1238.2 791.6" fill="none" stroke="#ff6a6a" stroke-width="0.7"/>
<text x="1234.6" y="792" font-size="4.5" fill="#a66" textLength="1.6" lengthAdjust="spacingAndGlyphs">1</text>
<text x="1241.8" y="792.4" font-size="4.5" fill="#000" font-weight="700" textLength="3.4" lengthAdjust="spacingAndGlyphs">@</text>
<circle cx="1256.1" cy="782.400" r="4.500" fill="none" stroke="#0000ff" stroke-width=".9"/><circle cx="1256.1" cy="782.400" r="2.600" fill="#0000ff"/>
<text x="1251.9" y="776.7" font-size="4.5" fill="#000080" font-weight="700" textLength="7.5" lengthAdjust="spacingAndGlyphs">FD2</text>
<path d="M1256.1 787 L1256.1 791.6" fill="none" stroke="#ff6a6a" stroke-width="0.7"/>
<text x="1252.5" y="792" font-size="4.5" fill="#a66" textLength="1.6" lengthAdjust="spacingAndGlyphs">1</text>
<text x="1259.7" y="792.4" font-size="4.5" fill="#000" font-weight="700" textLength="3.4" lengthAdjust="spacingAndGlyphs">@</text>
<rect x="961.7" y="800.4" width="271.8" height="39.6" fill="none" stroke="#000" stroke-width="1.1"/>
<path d="M961.7 809.5 L1233.5 809.5" fill="none" stroke="#000" stroke-width="1.0"/>
<path d="M961.7 818 L1233.5 818" fill="none" stroke="#000" stroke-width="1.0"/>
<path d="M1016.4 800.4 L1016.4 818" fill="none" stroke="#000" stroke-width="1.0"/>
<path d="M1095.6 809.5 L1095.6 818" fill="none" stroke="#000" stroke-width="1.0"/>
<path d="M1147.4 809.5 L1147.4 818" fill="none" stroke="#000" stroke-width="1.0"/>
<text x="964" y="807" font-size="5" fill="#000" font-weight="700" textLength="49.9" lengthAdjust="spacingAndGlyphs">Security Classification</text>
<text x="1084.2" y="807.4" font-size="5.8" fill="#000" font-weight="700" textLength="52.8" lengthAdjust="spacingAndGlyphs">Compal Secret Data</text>
<text x="973.9" y="815.9" font-size="4.8" fill="#000" font-weight="700" textLength="25.2" lengthAdjust="spacingAndGlyphs">Issued Date</text>
<text x="1038.9" y="813.5" font-size="4.74" fill="#000" font-weight="700" textLength="25.2" lengthAdjust="spacingAndGlyphs">2011/04/04</text>
<text x="1103.9" y="815.9" font-size="4.8" fill="#000" font-weight="700" textLength="38" lengthAdjust="spacingAndGlyphs">Deciphered Date</text>
<text x="1165.9" y="813.5" font-size="4.74" fill="#000" font-weight="700" textLength="25.2" lengthAdjust="spacingAndGlyphs">2012/06/02</text>
<text x="964.6" y="824.3" font-size="4.56" fill="#000" font-weight="700" textLength="262.4" lengthAdjust="spacingAndGlyphs">THIS SHEET OF ENGINEERING DRAWING IS THE PROPRIETARY PROPERTY OF COMPAL ELECTRONICS, INC. AND CONTAINS CONFIDENTIAL</text>
<text x="964.6" y="828.3" font-size="4.56" fill="#000" font-weight="700" textLength="259" lengthAdjust="spacingAndGlyphs">AND TRADE SECRET INFORMATION. THIS SHEET MAY NOT BE TRANSFERED FROM THE CUSTODY OF THE COMPETENT DIVISION OF R&amp;D</text>
<text x="964.6" y="832.3" font-size="4.56" fill="#000" font-weight="700" textLength="251.2" lengthAdjust="spacingAndGlyphs">DEPARTMENT EXCEPT AS AUTHORIZED BY COMPAL ELECTRONICS, INC. NEITHER THIS SHEET NOR THE INFORMATION IT CONTAINS</text>
<text x="964.6" y="836.5" font-size="4.56" fill="#000" font-weight="700" textLength="237.4" lengthAdjust="spacingAndGlyphs">MAY BE USED BY OR DISCLOSED TO ANY THIRD PARTY WITHOUT PRIOR WRITTEN CONSENT OF COMPAL ELECTRONICS, INC.</text>
<rect x="1234" y="800.8" width="162.4" height="49.2" fill="none" stroke="#000" stroke-width="1.2"/>
<path d="M1234 809.6 L1396.4 809.6" fill="none" stroke="#000" stroke-width="1.0"/>
<path d="M1234 822.8 L1396.4 822.8" fill="none" stroke="#000" stroke-width="1.2"/>
<path d="M1234 836.6 L1396.4 836.6" fill="none" stroke="#000" stroke-width="1.2"/>
<path d="M1247.4 822.8 L1247.4 836.6" fill="none" stroke="#000" stroke-width="1.0"/>
<path d="M1383.3 822.8 L1383.3 836.6" fill="none" stroke="#000" stroke-width="1.0"/>
<text x="1270.2" y="807.6" font-size="7" fill="#000" font-weight="700" textLength="85" lengthAdjust="spacingAndGlyphs">Compal Electronics, Inc.</text>
<text x="1236.4" y="813.6" font-size="4.5" fill="#000" textLength="6.6" lengthAdjust="spacingAndGlyphs">Title</text>
<text x="1287.9" y="821.2" font-size="8" fill="#000" textLength="33.3" lengthAdjust="spacingAndGlyphs">SENSOR</text>
<text x="1236.4" y="826.3" font-size="4.5" fill="#000" textLength="6" lengthAdjust="spacingAndGlyphs">Size</text>
<text x="1238.6" y="831.5" font-size="4.86" fill="#000" textLength="3.2" lengthAdjust="spacingAndGlyphs">C</text>
<text x="1249.6" y="826.3" font-size="4.5" fill="#000" textLength="25.2" lengthAdjust="spacingAndGlyphs">Document Number</text>
<text x="1251.8" y="834.4" font-size="8.2" fill="#000" textLength="119.4" lengthAdjust="spacingAndGlyphs">V5MM1 S/B LS-A002P Schematic</text>
<text x="1384.4" y="826.3" font-size="4.5" fill="#000" textLength="5.2" lengthAdjust="spacingAndGlyphs">Rev</text>
<text x="1388.1" y="831.1" font-size="4.62" fill="#000" textLength="5" lengthAdjust="spacingAndGlyphs">1.0</text>
</g>
</svg>
<div id="statusbar" class="abs"></div>
<!-- tree text (clipped) -->
<svg class="abs" style="left:74px;top:112px" width="333" height="726" viewBox="74 112 333 726">
<defs><g id="pdf"><path d="M2 0h9l3 3v11a2 2 0 0 1-2 2H2a2 2 0 0 1-2-2V2a2 2 0 0 1 2-2z" fill="#d3333e"/><path d="M10.2 0L14 3.8V3l-3-3z" fill="#8e1d26"/><path d="M10.2 0v2.6a1.2 1.2 0 0 0 1.2 1.2H14z" fill="#a8222c"/><path d="M6.9 4.6c.5 1.9.1 3.6-.4 4.9-.7 1.5-1.6 2.700-2.600 3.300M6.500 9.400c1.300-.5 3.100-.7 4.800-.2M6.800 9.200c.8 1.100 1.800 1.700 3 2.100" fill="none" stroke="#fff" stroke-width="1.25" stroke-linecap="round"/></g><g id="minus"><rect x=".5" y=".5" width="13" height="13" rx="3" fill="#f2f2f2" stroke="#333" stroke-width="1"/><path d="M3.500 7.400h7.500" stroke="#222" stroke-width="1.1"/></g></defs>
<use href="#pdf" x="177" y="103.0"/>
<text x="195.3" y="116.5" font-size="14.5" fill="#000" textLength="209.7" lengthAdjust="spacingAndGlyphs">KBLU_P4HCJ_MB_R11_20160607</text>
<use href="#minus" x="155" y="128.0"/>
<text x="175.3" y="140.5" font-size="14.5" fill="#000" textLength="123.7" lengthAdjust="spacingAndGlyphs">R5-571T R5-571TG</text>
<use href="#pdf" x="177" y="151.0"/>
<text x="195.3" y="164.5" font-size="14.5" fill="#000" textLength="209.8" lengthAdjust="spacingAndGlyphs">P5HCJ_KBL_MB_SCH_20160620-</text>
<use href="#pdf" x="177" y="175.0"/>
<text x="195.3" y="188.5" font-size="14.5" fill="#000" textLength="214.5" lengthAdjust="spacingAndGlyphs">p5hcj_megatron_ddr4_20160223</text>
<use href="#minus" x="155" y="200.0"/>
<text x="175.3" y="212.5" font-size="14.5" fill="#000" textLength="53.7" lengthAdjust="spacingAndGlyphs">R7-371T</text>
<use href="#pdf" x="177" y="223.0"/>
<text x="195.3" y="236.5" font-size="14.5" fill="#000" textLength="153.7" lengthAdjust="spacingAndGlyphs">SKI_ZS8_DB_EL_v0E.pdf</text>
<use href="#pdf" x="177" y="247.0"/>
<text x="195.3" y="260.5" font-size="14.5" fill="#000" textLength="167.7" lengthAdjust="spacingAndGlyphs">SKI_ZS8_DB_LED_v0D.pdf</text>
<use href="#pdf" x="177" y="271.0"/>
<text x="195.3" y="284.5" font-size="14.5" fill="#000" textLength="193.7" lengthAdjust="spacingAndGlyphs">SKI_ZS8_DB_SENSOR_v0E.pdf</text>
<use href="#pdf" x="177" y="295.0"/>
<text x="195.3" y="308.5" font-size="14.5" fill="#000" textLength="164.7" lengthAdjust="spacingAndGlyphs">SKI_ZS8_DB_USB_v0F.pdf</text>
<use href="#pdf" x="177" y="319.0"/>
<text x="195.3" y="332.5" font-size="14.5" fill="#000" textLength="135.4" lengthAdjust="spacingAndGlyphs">SKI_ZS8_MB_v0E.pdf</text>
<use href="#minus" x="155" y="344.0"/>
<text x="175.3" y="356.5" font-size="14.5" fill="#000" textLength="53.7" lengthAdjust="spacingAndGlyphs">R7-372T</text>
<use href="#pdf" x="177" y="367.0"/>
<text x="195.3" y="380.5" font-size="14.5" fill="#000" textLength="225.9" lengthAdjust="spacingAndGlyphs">SKLU_P3HCJ_MB_R20_ACER_W.pdf</text>
<use href="#minus" x="155" y="392.0"/>
<text x="175.3" y="404.5" font-size="14.5" fill="#000" textLength="238.3" lengthAdjust="spacingAndGlyphs">R7-571 R7-571G R7-571P R7-571PG</text>
<use href="#pdf" x="177" y="415.0"/>
<text x="195.3" y="428.5" font-size="14.5" fill="#000" textLength="225.4" lengthAdjust="spacingAndGlyphs">EZEL_CX_MB_1RX8_20130313C.pdf</text>
<use href="#pdf" x="177" y="439.0"/>
<text x="195.3" y="452.5" font-size="14.5" fill="#000" textLength="190.5" lengthAdjust="spacingAndGlyphs">EZEL_LS-A001PR10_0314.pdf</text>
<use href="#pdf" x="177" y="463.0"/>
<text x="195.3" y="476.5" font-size="14.5" fill="#000" textLength="190.5" lengthAdjust="spacingAndGlyphs">EZEL_LS-A002PR10_0314.pdf</text>
<use href="#pdf" x="177" y="487.0"/>
<text x="195.3" y="500.5" font-size="14.5" fill="#000" textLength="190.5" lengthAdjust="spacingAndGlyphs">EZEL_LS-A005PR10_0314.pdf</text>
<use href="#pdf" x="177" y="511.0"/>
<text x="195.3" y="524.5" font-size="14.5" fill="#000" textLength="190.5" lengthAdjust="spacingAndGlyphs">EZEL_LS-A006PR10_0314.pdf</text>
<use href="#pdf" x="177" y="535.0"/>
<text x="195.3" y="548.5" font-size="14.5" fill="#000" textLength="190.5" lengthAdjust="spacingAndGlyphs">EZEL_LS-A007PR10_0314.pdf</text>
<use href="#minus" x="155" y="560.0"/>
<text x="175.3" y="572.5" font-size="14.5" fill="#000" textLength="106.7" lengthAdjust="spacingAndGlyphs">R7-572 R7-572G</text>
<use href="#pdf" x="177" y="583.0"/>
<text x="195.3" y="596.5" font-size="14.5" fill="#000" textLength="146.3" lengthAdjust="spacingAndGlyphs">LSA003PR03-0510.pdf</text>
<use href="#pdf" x="177" y="607.0"/>
<text x="195.3" y="620.5" font-size="14.5" fill="#5b9bf8" textLength="210.7" lengthAdjust="spacingAndGlyphs">V5MM1_LS-A002PR20_0424.pdf</text>
<use href="#pdf" x="177" y="631.0"/>
<text x="195.3" y="644.5" font-size="14.5" fill="#000" textLength="210.7" lengthAdjust="spacingAndGlyphs">V5MM1_LS-A005PR10_0314.pdf</text>
<use href="#pdf" x="177" y="655.0"/>
<text x="195.3" y="668.5" font-size="14.5" fill="#000" textLength="207.4" lengthAdjust="spacingAndGlyphs">V5MM2_LAA021PR10_0827.pdf</text>
<use href="#pdf" x="177" y="679.0"/>
<text x="195.3" y="692.5" font-size="14.5" fill="#000" textLength="210.7" lengthAdjust="spacingAndGlyphs">V5MM2_LS-A007PR10_0314.pdf</text>
<use href="#pdf" x="177" y="703.0"/>
<text x="195.3" y="716.5" font-size="14.5" fill="#000" textLength="205.3" lengthAdjust="spacingAndGlyphs">V5MM2_LSA001PR10_0314.pdf</text>
<use href="#pdf" x="177" y="727.0"/>
<text x="195.3" y="740.5" font-size="14.5" fill="#000" textLength="205.3" lengthAdjust="spacingAndGlyphs">V5MM2_LSA006PR10_0314.pdf</text>
<use href="#minus" x="155" y="752.0"/>
<text x="175.3" y="764.5" font-size="14.5" fill="#000" textLength="96.4" lengthAdjust="spacingAndGlyphs">R752T R752TN</text>
<use href="#pdf" x="177" y="775.0"/>
<text x="195.3" y="788.5" font-size="14.5" fill="#000" textLength="214.1" lengthAdjust="spacingAndGlyphs">YORP_ZAK_ZAN_ZAP_ZAQ_GLK_</text>
<use href="#pdf" x="177" y="799.0"/>
<text x="195.3" y="812.5" font-size="14.5" fill="#000" textLength="214.1" lengthAdjust="spacingAndGlyphs">YORP_ZAK_ZAN_ZAP_ZAQ_GLK_</text>
<use href="#pdf" x="177" y="823.0"/>
<text x="195.3" y="836.5" font-size="14.5" fill="#000" textLength="185.4" lengthAdjust="spacingAndGlyphs">ZAN_SENSOR_EVT_0731.pdf</text>
</svg>
<!-- chrome overlay: icons + text -->
<svg id="overlay" class="abs" width="1523" height="858" viewBox="0 0 1523 858">
<!-- logo -->
<g fill="#fff">
<path d="M24.600 5.600L26.500 16.700L24.600 18.200L22.700 16.700z"/>
<path d="M24.600 33.800L26.500 22.700L24.600 21.200L22.700 22.700z"/>
<path d="M12.800 19.700L21.800 18L23.200 19.700L21.800 21.400z"/>
<path d="M36.500 19.700L27.400 18L26 19.700L27.400 21.400z"/>
<circle cx="24.600" cy="19.700" r="1.300"/>
</g>
<circle cx="24.600" cy="19.700" r="6.200" fill="none" stroke="#fff" stroke-opacity=".28" stroke-width="1"/>
<!-- briefcase -->
<g fill="none" stroke="#e2e650" stroke-width="1.500">
<rect x="1390.600" y="16.300" width="15.200" height="10.800" rx="2.600"/>
<path d="M1394.600 16.200v-1.200a2 2 0 0 1 2-2h3.200a2 2 0 0 1 2 2v1.200"/>
<path d="M1394.400 20.600h7.600"/>
</g>
<path d="M1417.500 10v20" stroke="#fff" stroke-opacity=".4" stroke-width="1"/>
<g fill="none" stroke="#fff" stroke-width="1.800">
<path d="M1430 20.200h16"/>
<rect x="1461.200" y="13" width="14" height="14" rx="2.800"/>
<path d="M1491 12.600l14.800 14.800M1505.800 12.600l-14.800 14.800"/>
</g>
<!-- search chevron + magnifier -->
<path d="M343.300 88.400l5.800 6l5.800-6" fill="none" stroke="#8f95a0" stroke-width="1.400"/>
<g fill="none" stroke="#fff" stroke-width="1.900" stroke-linecap="round"><circle cx="400.100" cy="91.700" r="8"/><path d="M405.800 97.600l3.100 2.300"/></g>
<!-- scroll arrow -->
<path d="M420.200 122.800l4.400-4.500l4.400 4.500" fill="none" stroke="#555" stroke-width="1.300"/>
<!-- splitter handle -->
<path d="M431 410l9.500 16v73l-9.500 16z" fill="#d9eaff" stroke="#a9d2ff" stroke-width="1"/>
<path d="M437.300 458.500l-3.600 4l3.600 4" fill="none" stroke="#5aa0f5" stroke-width="1.200"/>
<!-- home icon -->
<g fill="none" stroke="#000" stroke-width="1.800" stroke-linejoin="miter"><path d="M455.300 88.900l8.900-9l8.900 9"/><path d="M458.300 86.500v10.300h12v-10.300"/><path d="M462.500 96.800v-5.200h3.600v5.200"/></g>
<!-- tab separator & close icon -->
<path d="M699.500 108v24" stroke="#555" stroke-width="1"/>
<g><path d="M1494.800 124v-10.500a3 3 0 0 1 3-3h10.500" fill="none" stroke="#8a8a8a" stroke-width="1.800"/><rect x="1497.800" y="113.800" width="13.800" height="13.800" rx="2.600" fill="#8a8a8a"/><path d="M1501.800 117.800l5.800 5.800M1507.600 117.800l-5.800 5.800" stroke="#fff" stroke-width="1.500"/></g>
<!-- toolbar icons -->
<g fill="none" stroke="#333" stroke-width="1.100"><rect x="449.600" y="139.600" width="8" height="16"/><rect x="459.600" y="139.600" width="8" height="16"/></g>
<g stroke="#bdbdbd" stroke-width="1"><path d="M473.500 137v19.500M530.500 137v19.500M699.500 137v19.500M756.500 137v19.500"/></g>
<g fill="none" stroke="#333" stroke-width="1.700">
<rect x="481.300" y="144.800" width="14.400" height="11" rx="2"/>
<path d="M497 146.500c-1-4-5-6-9.500-5.400"/>
<rect x="509.800" y="144.800" width="14.400" height="11" rx="2"/>
<path d="M506.600 146.500c1-4 5-6 9.500-5.400"/>
</g>
<path d="M485.800 141l4-3v5.400z" fill="#333"/><path d="M518.200 141l-4-3v5.400z" fill="#333"/>
<!-- page arrows -->
<g fill="none" stroke="#333" stroke-width="1.300" stroke-linejoin="miter">
<path d="M649.800 147.600l8.200-7.600v4.200h8.400v6.800h-8.400v4.200z"/>
<path d="M692.400 147.600l-8.200-7.600v4.200h-8.400v6.800h8.400v4.200z"/>
</g>
<!-- zoom in/out -->
<g fill="none" stroke="#111" stroke-width="1.700"><circle cx="714" cy="146.800" r="6.200"/><path d="M718.600 151.400l4.400 4.400"/></g>
<path d="M710.800 146.800h6.400M714 143.600v6.400" stroke="#111" stroke-width="2.200"/>
<g fill="none" stroke="#333" stroke-width="1.400"><circle cx="740" cy="146.800" r="6.400"/><path d="M744.600 151.400l4.600 4.400M736.800 146.800h6.400"/></g>
<!-- prev/next tri -->
<g fill="none" stroke="#333" stroke-width="1.300"><path d="M986.600 139.600v15.800l-10.600-7.900z"/><path d="M1002.600 139.600v15.800l10.600-7.900z"/></g>
<!-- Abi -->
<path d="M1025 140.500h18M1025 154.500h18" stroke="#333" stroke-width="1.100"/>
<text x="1025.200" y="151.600" font-size="10.500" font-weight="700" fill="#333" textLength="17.600" lengthAdjust="spacingAndGlyphs">Abi</text>
<!-- binoculars -->
<g fill="none" stroke="#222" stroke-width="1.500"><circle cx="1054.600" cy="150.600" r="3.800"/><circle cx="1065.400" cy="150.600" r="3.800"/><path d="M1051 149.500l1.600-9.400h4.200l1.500 9M1069 149.500l-1.600-9.400h-4.200l-1.500 9M1058 143.500h4M1058.300 148.500h3.400"/></g>
<!-- sidebar groups -->
<defs><linearGradient id="lap" x1="0" y1="0" x2="1" y2="0"><stop offset="0" stop-color="#12e2ff"/><stop offset="1" stop-color="#3c9bff"/></linearGradient></defs>
<path d="M25.500 122.500h-7.500a8 8 0 0 0-8 8v207.500a8 8 0 0 0 8 8h39a8 8 0 0 0 8-8v-207.500a8 8 0 0 0-8-8h-9" fill="none" stroke="#2f95f6" stroke-width="1.300" stroke-dasharray="4.500 2.500"/>
<path d="M12.500 386a6 6 0 0 0-2.500 5v207.500a8 8 0 0 0 8 8h39a8 8 0 0 0 8-8v-207.500a6 6 0 0 0-2.500-5" fill="none" stroke="#3e4556" stroke-width="1.300" stroke-dasharray="5 2.500"/>
<!-- play -->
<circle cx="37.100" cy="157.900" r="14" fill="#a0a7bc"/><path d="M32.800 151.200v13.400l11-6.700z" fill="#fff"/>
<!-- phone -->
<rect x="28.700" y="214.800" width="17.200" height="28.400" rx="3" fill="#a0a7bc"/><path d="M34.800 217.900h5" stroke="#fff" stroke-width="1.200" stroke-linecap="round"/><path d="M30.500 241.400h13.600" stroke="#c5c9d6" stroke-width="1"/>
<!-- laptop -->
<rect x="26" y="290.200" width="22.600" height="15.500" rx="1" fill="none" stroke="url(#lap)" stroke-width="2.200"/><path d="M21.800 306.200h30.600a1.500 1.500 0 0 1 0 2.900h-30.600a1.500 1.500 0 0 1 0-2.900z" fill="url(#lap)"/><path d="M35 307.600h4.400" stroke="#fff" stroke-width=".9"/>
<!-- drone -->
<g fill="#a0a7bc"><circle cx="28.700" cy="410.900" r="5.600"/><circle cx="45.500" cy="410.900" r="5.600"/><circle cx="28.700" cy="427.500" r="5.600"/><circle cx="45.500" cy="427.500" r="5.600"/><circle cx="37.100" cy="419.200" r="4.600"/></g>
<path d="M29.500 411.700l15.200 15M44.700 411.700l-15.200 15" stroke="#a0a7bc" stroke-width="4.400" stroke-linecap="round"/>
<g fill="none" stroke="#c9cedb" stroke-width=".8"><circle cx="28.700" cy="410.900" r="3.300"/><circle cx="45.500" cy="410.900" r="3.300"/><circle cx="28.700" cy="427.500" r="3.300"/><circle cx="45.500" cy="427.500" r="3.300"/></g>
<circle cx="37.100" cy="419.200" r="1.700" fill="#a0a7bc" stroke="#fff" stroke-width=".9"/>
<!-- gamepad -->
<rect x="22.800" y="484" width="27.900" height="13.800" rx="6.900" fill="#a0a7bc"/><path d="M27.800 490.900h5.600M30.600 488.100v5.600" stroke="#fff" stroke-width="1.200"/><circle cx="41.300" cy="488.700" r=".9" fill="#fff"/><circle cx="44.300" cy="492.500" r=".9" fill="#fff"/>
<!-- car -->
<g fill="#a0a7bc"><path d="M23.200 555h3l2.400-5a3 3 0 0 1 2.700-1.700h11.400a3 3 0 0 1 2.700 1.700l2.400 5h3v1.800h-2v12a1.500 1.500 0 0 1-1.500 1.500h-1.800a1.500 1.500 0 0 1-1.500-1.500v-1h-14v1a1.500 1.500 0 0 1-1.500 1.500h-1.800a1.500 1.500 0 0 1-1.500-1.500v-12h-2z"/></g>
<path d="M29 555.200l2-4.300h12l2 4.300z" fill="#fdfdfd"/><circle cx="29.500" cy="563" r="1.700" fill="#fdfdfd"/><circle cx="44.500" cy="563" r="1.700" fill="#fdfdfd"/><path d="M33.800 563h6.400" stroke="#fdfdfd" stroke-width="1.700"/>
<!-- star -->
<path d="M37 631.200l4.100 8.600l9.400 1.300l-6.800 6.600l1.700 9.400l-8.400-4.500l-8.400 4.500l1.700-9.400l-6.800-6.600l9.400-1.300z" fill="#a0a7bc" stroke="#a0a7bc" stroke-width="2" stroke-linejoin="round"/>

<text x="26.6" y="127.2" font-size="14.5" fill="#3a8ef6" textLength="20.3" lengthAdjust="spacingAndGlyphs">VIP</text>
<text x="16.2" y="190.4" font-size="14.5" fill="#4d4d4d" textLength="40.5" lengthAdjust="spacingAndGlyphs">Cour...</text>
<text x="15.8" y="260.6" font-size="14.5" fill="#4d4d4d" textLength="42.7" lengthAdjust="spacingAndGlyphs">Phone</text>
<text x="17.5" y="330.6" font-size="14.5" fill="#3a8ef6" textLength="39.6" lengthAdjust="spacingAndGlyphs">Com...</text>
<text x="12.8" y="387.6" font-size="14.5" fill="#4d4d4d" textLength="48.6" lengthAdjust="spacingAndGlyphs">Custom</text>
<text x="16.8" y="450.5" font-size="14.5" fill="#4d4d4d" textLength="40.6" lengthAdjust="spacingAndGlyphs">Drone</text>
<text x="17.5" y="520.4" font-size="14.5" fill="#4d4d4d" textLength="39.2" lengthAdjust="spacingAndGlyphs">Gam...</text>
<text x="26.3" y="590.6" font-size="14.5" fill="#4d4d4d" textLength="22.0" lengthAdjust="spacingAndGlyphs">Car</text>
<text x="7.7" y="675.6" font-size="14.5" fill="#4d4d4d" textLength="58.1" lengthAdjust="spacingAndGlyphs">Favorites</text>
<text x="50.3" y="25.6" font-size="14.5" fill="#fff" textLength="396.5" lengthAdjust="spacingAndGlyphs">XZZ Schematics V4.77 [ VIP Due date: 2025-10-30 17:50:47 ]</text>
<text x="18.3" y="61.5" font-size="14.5" fill="#000" textLength="39.2" lengthAdjust="spacingAndGlyphs">File(F)</text>
<text x="74.6" y="61.5" font-size="14.5" fill="#000" textLength="39.8" lengthAdjust="spacingAndGlyphs">VIP(V)</text>
<text x="131.2" y="61.5" font-size="14.5" fill="#000" textLength="47.2" lengthAdjust="spacingAndGlyphs">Tool(T)</text>
<text x="195.2" y="61.5" font-size="14.5" fill="#000" textLength="71.6" lengthAdjust="spacingAndGlyphs">Settings(S)</text>
<text x="8.5" y="97.6" font-size="14.5" fill="#000" textLength="42.3" lengthAdjust="spacingAndGlyphs">Shrink</text>
<text x="73.5" y="97.6" font-size="14.5" fill="#b9bcc4" textLength="261.5" lengthAdjust="spacingAndGlyphs">Please input the model number or PCB</text>
<text x="478.0" y="93.8" font-size="14.5" fill="#767676" textLength="104.2" lengthAdjust="spacingAndGlyphs">Member Center</text>
<text x="459.3" y="125.0" font-size="15.0" fill="#000" font-weight="700" textLength="228.7" lengthAdjust="spacingAndGlyphs">V5MM1_LS-A002PR20_0424.pdf</text>
<text x="534.4" y="152.6" font-size="14.5" fill="#000" textLength="37.0" lengthAdjust="spacingAndGlyphs">Page:</text>
<text x="614.6" y="152.6" font-size="14.5" fill="#000" textLength="7.0" lengthAdjust="spacingAndGlyphs">1</text>
<text x="629.5" y="152.6" font-size="14.5" fill="#000" textLength="14.0" lengthAdjust="spacingAndGlyphs">/1</text>
<text x="760.4" y="152.6" font-size="14.5" fill="#000" textLength="49.8" lengthAdjust="spacingAndGlyphs">Lookup</text>
<text x="585.200" y="853.600" font-size="14" fill="#fff" stroke="#fff" stroke-width=".35" textLength="352" lengthAdjust="spacingAndGlyphs" style="font-family:'DejaVu Sans Mono','Liberation Mono',monospace">XZZ Schematics https://www.xzztools.com</text>
</svg>
</body>
</html>
